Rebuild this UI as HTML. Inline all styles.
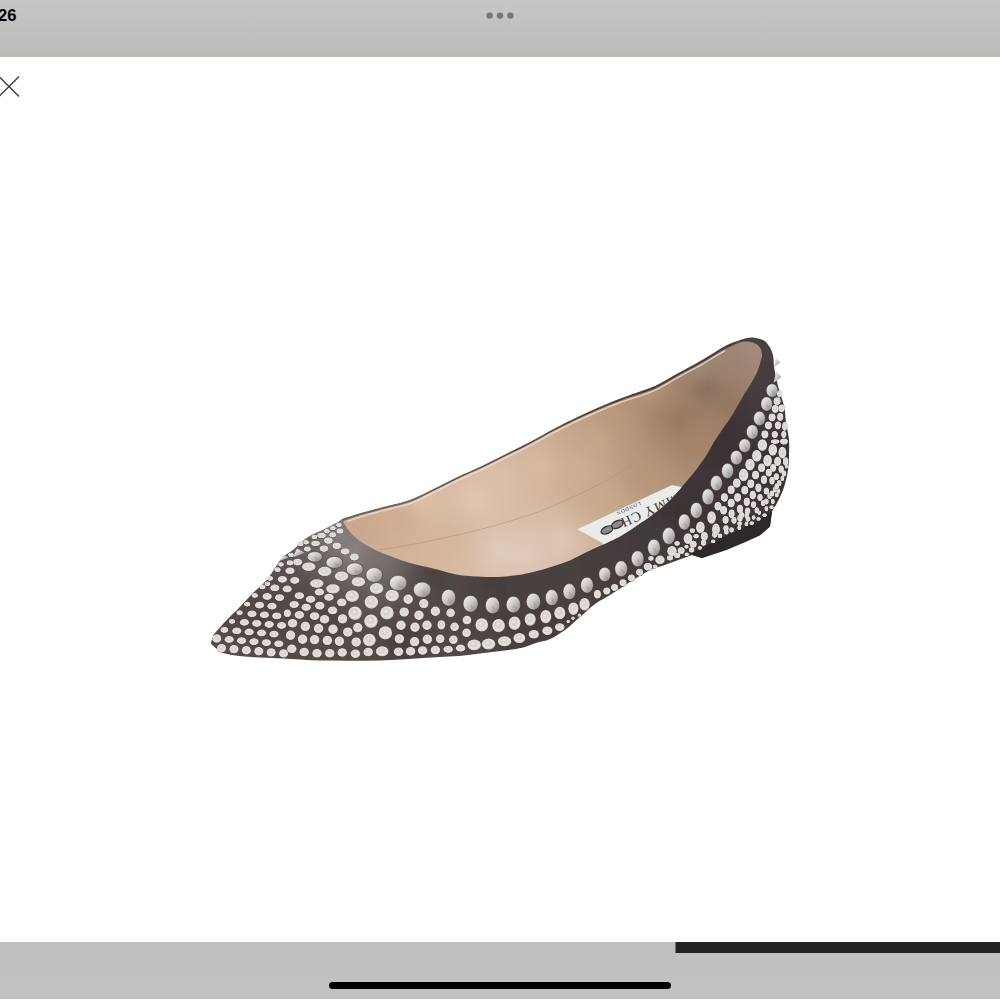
<!DOCTYPE html>
<html><head><meta charset="utf-8"><style>
html,body{margin:0;padding:0;width:1000px;height:1000px;overflow:hidden;background:#fff;}
.top{position:absolute;left:0;top:0;width:1000px;height:57px;background:linear-gradient(#c6c6c4,#bbbcb8);}
.time{position:absolute;left:-2px;top:6.3px;font:bold 16.5px "Liberation Sans",sans-serif;color:#000;}
.bot{position:absolute;left:0;top:941.5px;width:1000px;height:57.3px;background:linear-gradient(#bfc0bd,#c2c2c0);}
svg{position:absolute;left:0;top:0;}
</style></head><body>
<div class="top"></div>
<div class="time">26</div>
<div class="bot"></div>
<svg width="1000" height="1000" viewBox="0 0 1000 1000">
<defs>
<linearGradient id="glin" gradientUnits="userSpaceOnUse" x1="490" y1="458" x2="515" y2="520">
<stop offset="0" stop-color="#e8d4c0"/><stop offset="0.15" stop-color="#e2c7ad"/><stop offset="0.8" stop-color="#d8b99b"/><stop offset="1" stop-color="#dabea2"/>
</linearGradient>
<linearGradient id="gins" gradientUnits="userSpaceOnUse" x1="520" y1="515" x2="540" y2="572">
<stop offset="0" stop-color="#e3ccb5"/><stop offset="0.5" stop-color="#e9d6c2"/><stop offset="1" stop-color="#ead9c7"/>
</linearGradient>
<linearGradient id="gheel" gradientUnits="userSpaceOnUse" x1="650" y1="0" x2="765" y2="0">
<stop offset="0" stop-color="#c8b29c" stop-opacity="0"/><stop offset="0.2" stop-color="#c8b29c" stop-opacity="0.9"/><stop offset="0.5" stop-color="#bea893"/><stop offset="1" stop-color="#b39e8a"/>
</linearGradient>
<radialGradient id="gs" cx="0.5" cy="0.46" r="0.55" fx="0.42" fy="0.36">
<stop offset="0" stop-color="#f0efec"/><stop offset="0.35" stop-color="#d3d0cc"/><stop offset="0.7" stop-color="#e8e5e1"/><stop offset="0.88" stop-color="#cfcbc6"/><stop offset="0.97" stop-color="#85807b"/><stop offset="1" stop-color="#3e3836"/>
</radialGradient>
<linearGradient id="gc" x1="0.1" y1="0.1" x2="0.9" y2="0.9">
<stop offset="0" stop-color="#efefed"/><stop offset="0.45" stop-color="#d0cdc9"/><stop offset="1" stop-color="#94908b"/>
</linearGradient>
<clipPath id="clab"><polygon points="601.4,542.5 603.3,544.4 606.0,543.2 610.0,541.3 614.0,539.4 618.0,537.4 622.0,535.2 626.0,532.8 630.0,530.2 634.0,527.5 638.0,524.8 642.0,522.1 646.0,519.4 650.0,516.6 654.0,513.6 658.0,510.5 662.0,507.2 666.0,503.8 670.0,500.0 674.1,495.7 678.4,490.9 681.8,487.0 672.0,485.0 577.4,529.2 601.4,542.5"/></clipPath>
<clipPath id="couter"><polygon points="342.0,519.0 345.5,517.9 350.5,516.3 356.2,514.5 362.0,512.8 367.7,511.2 373.8,509.6 379.9,508.0 386.0,506.4 392.0,504.9 398.0,503.5 404.0,501.9 410.0,500.0 416.0,497.6 422.0,494.8 428.0,491.8 434.0,488.8 440.0,485.8 446.0,482.8 452.0,479.7 458.0,476.8 464.0,474.0 470.0,471.4 476.0,468.8 482.0,466.0 488.0,463.1 494.0,460.1 500.0,457.0 506.0,454.0 512.0,451.0 518.0,448.1 524.0,445.1 530.0,442.0 536.0,438.8 542.0,435.4 548.0,432.0 554.0,428.8 560.0,425.7 566.0,422.6 572.0,419.7 578.0,416.8 584.0,414.0 590.0,411.2 596.0,408.6 602.0,406.0 607.9,403.5 613.8,401.1 619.7,398.8 626.0,396.4 632.8,394.0 640.0,391.6 647.2,389.1 654.0,386.4 660.3,383.3 666.2,380.0 672.1,376.6 678.0,373.2 684.0,369.9 690.0,366.7 696.0,363.4 702.0,360.0 708.3,356.3 714.8,352.3 720.8,348.6 726.0,345.6 729.8,343.7 732.8,342.5 735.3,341.7 738.0,340.8 741.0,339.7 743.9,338.7 746.9,337.9 750.0,337.5 753.3,337.6 756.9,338.2 760.2,339.0 763.0,340.0 765.1,341.3 766.6,342.8 767.9,344.4 769.0,346.0 770.0,347.5 770.8,349.0 771.4,350.5 772.0,352.0 772.5,353.6 772.9,355.4 773.3,356.9 773.5,358.0 774.0,367.0 774.7,370.4 775.6,375.2 776.8,380.7 778.0,386.0 779.5,391.0 781.1,396.2 782.7,401.3 784.0,406.0 784.8,410.2 785.2,414.1 785.5,418.0 786.0,422.0 786.8,426.4 787.6,431.0 788.4,435.6 789.0,440.0 789.2,444.2 789.2,448.2 789.1,452.2 789.0,456.0 788.8,459.7 788.6,463.4 788.3,466.8 788.0,470.0 787.6,472.8 787.1,475.2 786.6,477.6 786.0,480.0 785.3,482.6 784.6,485.2 783.8,487.7 783.0,490.0 782.3,491.9 781.6,493.6 780.8,495.2 780.0,497.0 779.1,499.0 778.1,501.0 777.0,503.0 776.0,505.0 775.0,506.6 773.9,508.1 772.9,509.8 772.0,512.0 771.3,515.4 770.8,519.6 770.3,523.6 770.0,526.4 760.0,535.2 744.0,542.4 726.0,550.0 702.0,558.0 692.0,555.0 662.0,566.0 660.0,566.5 657.2,567.2 653.8,568.3 650.0,570.0 645.6,572.4 640.5,575.4 635.2,578.7 630.0,582.0 624.9,585.3 619.7,588.7 614.6,592.0 610.0,595.0 605.9,597.4 602.2,599.5 598.6,601.6 595.0,604.0 591.2,607.0 587.5,610.2 583.8,613.7 580.0,617.0 576.2,620.3 572.5,623.8 568.8,627.0 565.0,630.0 561.2,632.6 557.4,635.1 553.7,637.2 550.0,639.0 546.4,640.4 542.8,641.3 539.3,642.1 536.0,643.0 533.1,644.0 530.4,645.1 527.8,646.1 525.0,647.0 522.1,647.7 519.3,648.3 516.1,648.9 512.0,649.5 506.8,650.2 500.7,650.9 494.3,651.7 488.0,652.4 482.0,653.2 476.0,654.0 470.0,654.7 464.0,655.4 458.8,655.9 454.2,656.2 448.5,656.5 440.0,657.0 427.5,657.8 412.2,658.8 395.8,659.7 380.0,660.4 364.2,660.7 347.8,660.7 332.5,660.6 320.0,660.4 311.5,660.2 305.8,659.9 301.2,659.5 296.0,659.2 290.0,658.9 284.0,658.6 278.0,658.3 272.0,658.0 266.0,657.8 260.0,657.5 254.0,657.3 248.0,656.8 241.7,656.2 235.3,655.5 229.2,654.6 224.0,653.2 219.6,651.0 215.9,648.2 212.9,645.5 210.8,643.6 213.4,634.8 215.6,632.3 218.8,628.7 222.5,624.6 226.0,620.8 229.4,617.3 232.9,613.8 236.5,610.4 240.0,606.8 243.5,603.1 247.1,599.2 250.6,595.5 254.0,592.0 257.2,588.9 260.4,586.2 263.3,583.5 266.0,580.8 268.3,578.0 270.2,575.2 272.1,572.4 274.0,569.6 275.9,566.7 277.8,563.7 279.7,560.7 282.0,558.0 284.7,555.6 287.6,553.5 290.8,551.4 294.0,549.0 297.3,546.1 300.8,542.9 304.3,539.8 308.0,537.0 311.9,534.7 316.0,532.8 320.1,531.0 324.0,529.2 328.0,527.2 332.0,525.1 335.5,523.3 338.0,522.0"/></clipPath>
<clipPath id="clin"><polygon points="344.0,520.8 347.1,519.7 351.5,518.1 356.7,516.2 362.0,514.5 367.6,512.9 373.6,511.2 379.9,509.6 386.0,508.0 392.0,506.5 398.0,505.1 404.0,503.6 410.0,501.7 416.0,499.3 422.0,496.5 428.0,493.5 434.0,490.5 440.0,487.5 446.0,484.5 452.0,481.4 458.0,478.5 464.0,475.7 470.0,473.1 476.0,470.4 482.0,467.7 488.0,464.8 494.0,461.8 500.0,458.8 506.0,455.8 512.0,452.8 518.0,449.9 524.0,446.9 530.0,443.8 536.0,440.6 542.0,437.2 548.0,433.8 554.0,430.6 560.0,427.5 566.0,424.5 572.0,421.6 578.0,418.7 584.0,415.9 590.0,413.2 596.0,410.6 602.0,408.0 607.9,405.6 613.8,403.2 619.7,400.9 626.0,398.6 632.8,396.3 640.0,394.0 647.2,391.6 654.0,388.9 660.3,385.8 666.2,382.4 672.1,378.9 678.0,375.5 684.1,372.2 690.2,368.9 696.3,365.7 702.0,362.5 707.6,359.2 713.0,355.9 717.9,352.9 722.0,350.5 725.0,348.9 727.2,347.9 728.8,347.3 730.0,346.8 732.2,345.8 735.3,344.2 738.8,342.8 742.0,341.8 744.9,341.5 747.8,341.6 750.6,342.0 753.0,342.6 755.1,343.5 757.1,344.6 758.7,346.0 760.0,347.5 760.9,349.3 761.5,351.2 761.8,353.2 762.0,355.0 762.0,356.3 761.8,357.3 761.5,358.5 761.0,360.0 760.4,362.1 759.8,364.7 758.9,367.4 758.0,370.0 757.0,372.4 755.8,374.8 754.5,377.3 753.0,380.0 751.2,383.1 749.1,386.4 747.0,389.8 745.0,393.0 743.2,396.1 741.4,399.1 739.7,402.0 738.0,405.0 736.3,408.0 734.6,410.9 732.9,413.9 731.0,417.0 728.9,420.2 726.6,423.5 724.2,426.8 722.0,430.0 719.9,433.0 717.9,435.9 716.0,438.9 714.0,442.0 712.0,445.4 710.1,448.9 708.1,452.5 706.0,456.0 703.6,459.5 701.1,463.1 698.5,466.6 696.0,470.0 693.6,473.0 691.4,475.8 688.9,478.6 686.0,482.0 682.4,486.2 678.4,490.9 674.1,495.7 670.0,500.0 666.0,503.8 662.0,507.2 658.0,510.5 654.0,513.6 650.0,516.6 646.0,519.4 642.0,522.1 638.0,524.8 634.0,527.5 630.0,530.2 626.0,532.8 622.0,535.2 618.0,537.4 614.0,539.4 610.0,541.3 606.0,543.2 602.1,545.0 598.2,546.7 594.3,548.4 590.0,550.4 585.2,552.8 580.0,555.5 574.8,558.1 570.0,560.4 565.7,562.1 561.8,563.5 557.9,564.8 554.0,566.0 550.0,567.3 546.0,568.5 542.0,569.7 538.0,570.8 534.0,571.8 530.0,572.8 526.0,573.6 522.0,574.4 518.0,575.0 514.0,575.6 510.0,576.0 506.0,576.4 502.0,576.7 498.0,576.9 494.0,577.0 490.0,577.0 486.0,577.0 482.0,576.8 478.0,576.6 474.0,576.4 470.0,576.1 466.0,575.8 462.0,575.4 458.0,574.8 454.0,574.0 450.0,572.9 446.0,571.9 442.0,570.8 438.0,569.8 434.0,568.8 430.0,567.8 426.0,566.8 422.0,565.9 418.0,565.0 414.0,564.1 410.0,563.0 406.0,561.8 402.0,560.5 398.0,559.1 394.0,557.6 390.0,556.1 386.0,554.6 382.0,553.0 378.0,551.2 373.9,549.2 369.8,547.1 365.7,544.8 362.0,542.4 358.6,540.0 355.5,537.4 352.6,534.8 350.0,532.0 347.5,528.8 345.2,525.4 343.3,522.2"/></clipPath>
<filter id="blr" x="-5%" y="-5%" width="110%" height="110%"><feGaussianBlur stdDeviation="6"/></filter>
<filter id="blr2" x="-5%" y="-5%" width="110%" height="110%"><feGaussianBlur stdDeviation="5"/></filter>
</defs>
<circle cx="489.6" cy="15.6" r="3.2" fill="#777"/>
<circle cx="500" cy="15.6" r="3.2" fill="#777"/>
<circle cx="510.4" cy="15.6" r="3.2" fill="#777"/>
<path d="M-1 76.5 L19 96.5 M19 76.5 L-1 96.5" stroke="#404040" stroke-width="1.5" fill="none"/>
<rect x="675.5" y="942" width="325" height="11" fill="#20221d"/>
<rect x="329" y="982" width="342" height="7" rx="3.5" fill="#000"/>
<g clip-path="url(#couter)"><g filter="url(#blr)"><rect x="195" y="325" width="13" height="13" fill="#5c5252"/><rect x="207" y="325" width="13" height="13" fill="#5c5252"/><rect x="219" y="325" width="13" height="13" fill="#5d5352"/><rect x="231" y="325" width="13" height="13" fill="#5d5352"/><rect x="243" y="325" width="13" height="13" fill="#5d5353"/><rect x="255" y="325" width="13" height="13" fill="#5d5353"/><rect x="267" y="325" width="13" height="13" fill="#5d5353"/><rect x="279" y="325" width="13" height="13" fill="#5d5353"/><rect x="291" y="325" width="13" height="13" fill="#5d5353"/><rect x="303" y="325" width="13" height="13" fill="#5d5353"/><rect x="315" y="325" width="13" height="13" fill="#5d5353"/><rect x="327" y="325" width="13" height="13" fill="#5d5353"/><rect x="339" y="325" width="13" height="13" fill="#5d5352"/><rect x="351" y="325" width="13" height="13" fill="#5c5252"/><rect x="363" y="325" width="13" height="13" fill="#5c5252"/><rect x="375" y="325" width="13" height="13" fill="#5b5151"/><rect x="387" y="325" width="13" height="13" fill="#5b5151"/><rect x="399" y="325" width="13" height="13" fill="#5a5050"/><rect x="411" y="325" width="13" height="13" fill="#59504f"/><rect x="423" y="325" width="13" height="13" fill="#594f4f"/><rect x="435" y="325" width="13" height="13" fill="#584e4e"/><rect x="447" y="325" width="13" height="13" fill="#574d4d"/><rect x="459" y="325" width="13" height="13" fill="#564c4c"/><rect x="471" y="325" width="13" height="13" fill="#554c4c"/><rect x="483" y="325" width="13" height="13" fill="#544b4b"/><rect x="495" y="325" width="13" height="13" fill="#544a4a"/><rect x="507" y="325" width="13" height="13" fill="#534949"/><rect x="519" y="325" width="13" height="13" fill="#524848"/><rect x="531" y="325" width="13" height="13" fill="#514747"/><rect x="543" y="325" width="13" height="13" fill="#504646"/><rect x="555" y="325" width="13" height="13" fill="#4f4546"/><rect x="567" y="325" width="13" height="13" fill="#4e4445"/><rect x="579" y="325" width="13" height="13" fill="#4d4344"/><rect x="591" y="325" width="13" height="13" fill="#4c4343"/><rect x="603" y="325" width="13" height="13" fill="#4b4243"/><rect x="615" y="325" width="13" height="13" fill="#4a4142"/><rect x="627" y="325" width="13" height="13" fill="#4a4041"/><rect x="639" y="325" width="13" height="13" fill="#494041"/><rect x="651" y="325" width="13" height="13" fill="#483f40"/><rect x="663" y="325" width="13" height="13" fill="#483f40"/><rect x="675" y="325" width="13" height="13" fill="#483f40"/><rect x="687" y="325" width="13" height="13" fill="#483f40"/><rect x="699" y="325" width="13" height="13" fill="#483f40"/><rect x="711" y="325" width="13" height="13" fill="#484041"/><rect x="723" y="325" width="13" height="13" fill="#494041"/><rect x="735" y="325" width="13" height="13" fill="#494141"/><rect x="747" y="325" width="13" height="13" fill="#494142"/><rect x="759" y="325" width="13" height="13" fill="#494141"/><rect x="771" y="325" width="13" height="13" fill="#484041"/><rect x="783" y="325" width="13" height="13" fill="#483f40"/><rect x="795" y="325" width="13" height="13" fill="#473f40"/><rect x="195" y="337" width="13" height="13" fill="#5d5252"/><rect x="207" y="337" width="13" height="13" fill="#5d5352"/><rect x="219" y="337" width="13" height="13" fill="#5d5353"/><rect x="231" y="337" width="13" height="13" fill="#5d5353"/><rect x="243" y="337" width="13" height="13" fill="#5d5353"/><rect x="255" y="337" width="13" height="13" fill="#5e5353"/><rect x="267" y="337" width="13" height="13" fill="#5e5453"/><rect x="279" y="337" width="13" height="13" fill="#5e5453"/><rect x="291" y="337" width="13" height="13" fill="#5e5453"/><rect x="303" y="337" width="13" height="13" fill="#5e5453"/><rect x="315" y="337" width="13" height="13" fill="#5e5453"/><rect x="327" y="337" width="13" height="13" fill="#5d5353"/><rect x="339" y="337" width="13" height="13" fill="#5d5353"/><rect x="351" y="337" width="13" height="13" fill="#5d5353"/><rect x="363" y="337" width="13" height="13" fill="#5c5252"/><rect x="375" y="337" width="13" height="13" fill="#5c5252"/><rect x="387" y="337" width="13" height="13" fill="#5b5151"/><rect x="399" y="337" width="13" height="13" fill="#5b5151"/><rect x="411" y="337" width="13" height="13" fill="#5a5050"/><rect x="423" y="337" width="13" height="13" fill="#594f4f"/><rect x="435" y="337" width="13" height="13" fill="#584f4e"/><rect x="447" y="337" width="13" height="13" fill="#584e4e"/><rect x="459" y="337" width="13" height="13" fill="#574d4d"/><rect x="471" y="337" width="13" height="13" fill="#564c4c"/><rect x="483" y="337" width="13" height="13" fill="#554b4b"/><rect x="495" y="337" width="13" height="13" fill="#544a4a"/><rect x="507" y="337" width="13" height="13" fill="#534949"/><rect x="519" y="337" width="13" height="13" fill="#524848"/><rect x="531" y="337" width="13" height="13" fill="#514747"/><rect x="543" y="337" width="13" height="13" fill="#504646"/><rect x="555" y="337" width="13" height="13" fill="#4f4546"/><rect x="567" y="337" width="13" height="13" fill="#4e4445"/><rect x="579" y="337" width="13" height="13" fill="#4d4344"/><rect x="591" y="337" width="13" height="13" fill="#4c4243"/><rect x="603" y="337" width="13" height="13" fill="#4b4142"/><rect x="615" y="337" width="13" height="13" fill="#4a4142"/><rect x="627" y="337" width="13" height="13" fill="#494041"/><rect x="639" y="337" width="13" height="13" fill="#493f40"/><rect x="651" y="337" width="13" height="13" fill="#483f40"/><rect x="663" y="337" width="13" height="13" fill="#473e40"/><rect x="675" y="337" width="13" height="13" fill="#473e40"/><rect x="687" y="337" width="13" height="13" fill="#473e40"/><rect x="699" y="337" width="13" height="13" fill="#473f40"/><rect x="711" y="337" width="13" height="13" fill="#483f40"/><rect x="723" y="337" width="13" height="13" fill="#494041"/><rect x="735" y="337" width="13" height="13" fill="#4a4242"/><rect x="747" y="337" width="13" height="13" fill="#4a4242"/><rect x="759" y="337" width="13" height="13" fill="#494141"/><rect x="771" y="337" width="13" height="13" fill="#484041"/><rect x="783" y="337" width="13" height="13" fill="#473f40"/><rect x="795" y="337" width="13" height="13" fill="#473e40"/><rect x="195" y="349" width="13" height="13" fill="#5d5352"/><rect x="207" y="349" width="13" height="13" fill="#5d5353"/><rect x="219" y="349" width="13" height="13" fill="#5d5353"/><rect x="231" y="349" width="13" height="13" fill="#5e5453"/><rect x="243" y="349" width="13" height="13" fill="#5e5453"/><rect x="255" y="349" width="13" height="13" fill="#5e5454"/><rect x="267" y="349" width="13" height="13" fill="#5e5454"/><rect x="279" y="349" width="13" height="13" fill="#5e5454"/><rect x="291" y="349" width="13" height="13" fill="#5e5454"/><rect x="303" y="349" width="13" height="13" fill="#5e5454"/><rect x="315" y="349" width="13" height="13" fill="#5e5454"/><rect x="327" y="349" width="13" height="13" fill="#5e5454"/><rect x="339" y="349" width="13" height="13" fill="#5e5454"/><rect x="351" y="349" width="13" height="13" fill="#5e5453"/><rect x="363" y="349" width="13" height="13" fill="#5d5353"/><rect x="375" y="349" width="13" height="13" fill="#5d5352"/><rect x="387" y="349" width="13" height="13" fill="#5c5252"/><rect x="399" y="349" width="13" height="13" fill="#5b5151"/><rect x="411" y="349" width="13" height="13" fill="#5b5151"/><rect x="423" y="349" width="13" height="13" fill="#5a5050"/><rect x="435" y="349" width="13" height="13" fill="#594f4f"/><rect x="447" y="349" width="13" height="13" fill="#584e4e"/><rect x="459" y="349" width="13" height="13" fill="#574d4d"/><rect x="471" y="349" width="13" height="13" fill="#564c4c"/><rect x="483" y="349" width="13" height="13" fill="#554b4b"/><rect x="495" y="349" width="13" height="13" fill="#544a4a"/><rect x="507" y="349" width="13" height="13" fill="#534949"/><rect x="519" y="349" width="13" height="13" fill="#524848"/><rect x="531" y="349" width="13" height="13" fill="#514747"/><rect x="543" y="349" width="13" height="13" fill="#504646"/><rect x="555" y="349" width="13" height="13" fill="#4f4545"/><rect x="567" y="349" width="13" height="13" fill="#4d4444"/><rect x="579" y="349" width="13" height="13" fill="#4c4344"/><rect x="591" y="349" width="13" height="13" fill="#4b4243"/><rect x="603" y="349" width="13" height="13" fill="#4b4142"/><rect x="615" y="349" width="13" height="13" fill="#4a4041"/><rect x="627" y="349" width="13" height="13" fill="#494041"/><rect x="639" y="349" width="13" height="13" fill="#483f40"/><rect x="651" y="349" width="13" height="13" fill="#473e3f"/><rect x="663" y="349" width="13" height="13" fill="#473e3f"/><rect x="675" y="349" width="13" height="13" fill="#473e3f"/><rect x="687" y="349" width="13" height="13" fill="#473e3f"/><rect x="699" y="349" width="13" height="13" fill="#473e3f"/><rect x="711" y="349" width="13" height="13" fill="#473f40"/><rect x="723" y="349" width="13" height="13" fill="#484041"/><rect x="735" y="349" width="13" height="13" fill="#494141"/><rect x="747" y="349" width="13" height="13" fill="#494141"/><rect x="759" y="349" width="13" height="13" fill="#484041"/><rect x="771" y="349" width="13" height="13" fill="#473f40"/><rect x="783" y="349" width="13" height="13" fill="#473e40"/><rect x="795" y="349" width="13" height="13" fill="#463e3f"/><rect x="195" y="361" width="13" height="13" fill="#5d5353"/><rect x="207" y="361" width="13" height="13" fill="#5d5353"/><rect x="219" y="361" width="13" height="13" fill="#5e5453"/><rect x="231" y="361" width="13" height="13" fill="#5e5454"/><rect x="243" y="361" width="13" height="13" fill="#5e5454"/><rect x="255" y="361" width="13" height="13" fill="#5f5454"/><rect x="267" y="361" width="13" height="13" fill="#5f5554"/><rect x="279" y="361" width="13" height="13" fill="#5f5555"/><rect x="291" y="361" width="13" height="13" fill="#5f5555"/><rect x="303" y="361" width="13" height="13" fill="#5f5555"/><rect x="315" y="361" width="13" height="13" fill="#5f5555"/><rect x="327" y="361" width="13" height="13" fill="#5f5555"/><rect x="339" y="361" width="13" height="13" fill="#5f5554"/><rect x="351" y="361" width="13" height="13" fill="#5e5454"/><rect x="363" y="361" width="13" height="13" fill="#5e5454"/><rect x="375" y="361" width="13" height="13" fill="#5d5353"/><rect x="387" y="361" width="13" height="13" fill="#5d5353"/><rect x="399" y="361" width="13" height="13" fill="#5c5252"/><rect x="411" y="361" width="13" height="13" fill="#5b5151"/><rect x="423" y="361" width="13" height="13" fill="#5a5050"/><rect x="435" y="361" width="13" height="13" fill="#594f4f"/><rect x="447" y="361" width="13" height="13" fill="#584e4e"/><rect x="459" y="361" width="13" height="13" fill="#574d4d"/><rect x="471" y="361" width="13" height="13" fill="#564c4c"/><rect x="483" y="361" width="13" height="13" fill="#554b4b"/><rect x="495" y="361" width="13" height="13" fill="#544a4a"/><rect x="507" y="361" width="13" height="13" fill="#534949"/><rect x="519" y="361" width="13" height="13" fill="#524848"/><rect x="531" y="361" width="13" height="13" fill="#514747"/><rect x="543" y="361" width="13" height="13" fill="#4f4646"/><rect x="555" y="361" width="13" height="13" fill="#4e4545"/><rect x="567" y="361" width="13" height="13" fill="#4d4444"/><rect x="579" y="361" width="13" height="13" fill="#4c4343"/><rect x="591" y="361" width="13" height="13" fill="#4b4242"/><rect x="603" y="361" width="13" height="13" fill="#4a4142"/><rect x="615" y="361" width="13" height="13" fill="#494041"/><rect x="627" y="361" width="13" height="13" fill="#483f40"/><rect x="639" y="361" width="13" height="13" fill="#483e3f"/><rect x="651" y="361" width="13" height="13" fill="#473e3f"/><rect x="663" y="361" width="13" height="13" fill="#463d3f"/><rect x="675" y="361" width="13" height="13" fill="#463d3e"/><rect x="687" y="361" width="13" height="13" fill="#463d3e"/><rect x="699" y="361" width="13" height="13" fill="#463d3f"/><rect x="711" y="361" width="13" height="13" fill="#463e3f"/><rect x="723" y="361" width="13" height="13" fill="#473e40"/><rect x="735" y="361" width="13" height="13" fill="#473f40"/><rect x="747" y="361" width="13" height="13" fill="#473e40"/><rect x="759" y="361" width="13" height="13" fill="#463e40"/><rect x="771" y="361" width="13" height="13" fill="#463e40"/><rect x="783" y="361" width="13" height="13" fill="#463d3f"/><rect x="795" y="361" width="13" height="13" fill="#463d3f"/><rect x="195" y="373" width="13" height="13" fill="#5d5353"/><rect x="207" y="373" width="13" height="13" fill="#5e5453"/><rect x="219" y="373" width="13" height="13" fill="#5e5454"/><rect x="231" y="373" width="13" height="13" fill="#5f5454"/><rect x="243" y="373" width="13" height="13" fill="#5f5554"/><rect x="255" y="373" width="13" height="13" fill="#5f5555"/><rect x="267" y="373" width="13" height="13" fill="#5f5555"/><rect x="279" y="373" width="13" height="13" fill="#605655"/><rect x="291" y="373" width="13" height="13" fill="#605655"/><rect x="303" y="373" width="13" height="13" fill="#605656"/><rect x="315" y="373" width="13" height="13" fill="#605656"/><rect x="327" y="373" width="13" height="13" fill="#605656"/><rect x="339" y="373" width="13" height="13" fill="#605655"/><rect x="351" y="373" width="13" height="13" fill="#5f5555"/><rect x="363" y="373" width="13" height="13" fill="#5f5555"/><rect x="375" y="373" width="13" height="13" fill="#5e5454"/><rect x="387" y="373" width="13" height="13" fill="#5e5453"/><rect x="399" y="373" width="13" height="13" fill="#5d5353"/><rect x="411" y="373" width="13" height="13" fill="#5c5252"/><rect x="423" y="373" width="13" height="13" fill="#5b5151"/><rect x="435" y="373" width="13" height="13" fill="#5a5050"/><rect x="447" y="373" width="13" height="13" fill="#594f4f"/><rect x="459" y="373" width="13" height="13" fill="#584e4e"/><rect x="471" y="373" width="13" height="13" fill="#564d4d"/><rect x="483" y="373" width="13" height="13" fill="#554c4c"/><rect x="495" y="373" width="13" height="13" fill="#544a4a"/><rect x="507" y="373" width="13" height="13" fill="#534949"/><rect x="519" y="373" width="13" height="13" fill="#524848"/><rect x="531" y="373" width="13" height="13" fill="#514747"/><rect x="543" y="373" width="13" height="13" fill="#4f4646"/><rect x="555" y="373" width="13" height="13" fill="#4e4545"/><rect x="567" y="373" width="13" height="13" fill="#4d4444"/><rect x="579" y="373" width="13" height="13" fill="#4c4343"/><rect x="591" y="373" width="13" height="13" fill="#4b4142"/><rect x="603" y="373" width="13" height="13" fill="#4a4041"/><rect x="615" y="373" width="13" height="13" fill="#493f40"/><rect x="627" y="373" width="13" height="13" fill="#483f40"/><rect x="639" y="373" width="13" height="13" fill="#473e3f"/><rect x="651" y="373" width="13" height="13" fill="#463d3e"/><rect x="663" y="373" width="13" height="13" fill="#463c3e"/><rect x="675" y="373" width="13" height="13" fill="#453c3d"/><rect x="687" y="373" width="13" height="13" fill="#453c3d"/><rect x="699" y="373" width="13" height="13" fill="#453c3e"/><rect x="711" y="373" width="13" height="13" fill="#453c3e"/><rect x="723" y="373" width="13" height="13" fill="#463d3f"/><rect x="735" y="373" width="13" height="13" fill="#463d3f"/><rect x="747" y="373" width="13" height="13" fill="#463d40"/><rect x="759" y="373" width="13" height="13" fill="#463d40"/><rect x="771" y="373" width="13" height="13" fill="#463d40"/><rect x="783" y="373" width="13" height="13" fill="#463d3f"/><rect x="795" y="373" width="13" height="13" fill="#453c3f"/><rect x="195" y="385" width="13" height="13" fill="#5e5453"/><rect x="207" y="385" width="13" height="13" fill="#5e5454"/><rect x="219" y="385" width="13" height="13" fill="#5f5454"/><rect x="231" y="385" width="13" height="13" fill="#5f5554"/><rect x="243" y="385" width="13" height="13" fill="#5f5555"/><rect x="255" y="385" width="13" height="13" fill="#605655"/><rect x="267" y="385" width="13" height="13" fill="#605656"/><rect x="279" y="385" width="13" height="13" fill="#605656"/><rect x="291" y="385" width="13" height="13" fill="#615756"/><rect x="303" y="385" width="13" height="13" fill="#615756"/><rect x="315" y="385" width="13" height="13" fill="#615757"/><rect x="327" y="385" width="13" height="13" fill="#615756"/><rect x="339" y="385" width="13" height="13" fill="#615756"/><rect x="351" y="385" width="13" height="13" fill="#605656"/><rect x="363" y="385" width="13" height="13" fill="#605656"/><rect x="375" y="385" width="13" height="13" fill="#5f5555"/><rect x="387" y="385" width="13" height="13" fill="#5e5454"/><rect x="399" y="385" width="13" height="13" fill="#5e5453"/><rect x="411" y="385" width="13" height="13" fill="#5d5352"/><rect x="423" y="385" width="13" height="13" fill="#5b5251"/><rect x="435" y="385" width="13" height="13" fill="#5a5150"/><rect x="447" y="385" width="13" height="13" fill="#594f4f"/><rect x="459" y="385" width="13" height="13" fill="#584e4e"/><rect x="471" y="385" width="13" height="13" fill="#574d4d"/><rect x="483" y="385" width="13" height="13" fill="#564c4c"/><rect x="495" y="385" width="13" height="13" fill="#544b4b"/><rect x="507" y="385" width="13" height="13" fill="#534949"/><rect x="519" y="385" width="13" height="13" fill="#524848"/><rect x="531" y="385" width="13" height="13" fill="#514747"/><rect x="543" y="385" width="13" height="13" fill="#4f4646"/><rect x="555" y="385" width="13" height="13" fill="#4e4545"/><rect x="567" y="385" width="13" height="13" fill="#4d4344"/><rect x="579" y="385" width="13" height="13" fill="#4c4243"/><rect x="591" y="385" width="13" height="13" fill="#4b4142"/><rect x="603" y="385" width="13" height="13" fill="#4a4041"/><rect x="615" y="385" width="13" height="13" fill="#483f40"/><rect x="627" y="385" width="13" height="13" fill="#473e3f"/><rect x="639" y="385" width="13" height="13" fill="#463d3e"/><rect x="651" y="385" width="13" height="13" fill="#463c3e"/><rect x="663" y="385" width="13" height="13" fill="#453b3d"/><rect x="675" y="385" width="13" height="13" fill="#443b3d"/><rect x="687" y="385" width="13" height="13" fill="#433a3c"/><rect x="699" y="385" width="13" height="13" fill="#433a3c"/><rect x="711" y="385" width="13" height="13" fill="#433a3c"/><rect x="723" y="385" width="13" height="13" fill="#443b3d"/><rect x="735" y="385" width="13" height="13" fill="#453c3e"/><rect x="747" y="385" width="13" height="13" fill="#453c3f"/><rect x="759" y="385" width="13" height="13" fill="#463d3f"/><rect x="771" y="385" width="13" height="13" fill="#453c3f"/><rect x="783" y="385" width="13" height="13" fill="#453c3e"/><rect x="795" y="385" width="13" height="13" fill="#453c3e"/><rect x="195" y="397" width="13" height="13" fill="#5e5453"/><rect x="207" y="397" width="13" height="13" fill="#5e5454"/><rect x="219" y="397" width="13" height="13" fill="#5f5554"/><rect x="231" y="397" width="13" height="13" fill="#5f5555"/><rect x="243" y="397" width="13" height="13" fill="#605655"/><rect x="255" y="397" width="13" height="13" fill="#605656"/><rect x="267" y="397" width="13" height="13" fill="#615756"/><rect x="279" y="397" width="13" height="13" fill="#615757"/><rect x="291" y="397" width="13" height="13" fill="#625757"/><rect x="303" y="397" width="13" height="13" fill="#625857"/><rect x="315" y="397" width="13" height="13" fill="#625858"/><rect x="327" y="397" width="13" height="13" fill="#625858"/><rect x="339" y="397" width="13" height="13" fill="#625857"/><rect x="351" y="397" width="13" height="13" fill="#615757"/><rect x="363" y="397" width="13" height="13" fill="#615757"/><rect x="375" y="397" width="13" height="13" fill="#605656"/><rect x="387" y="397" width="13" height="13" fill="#5f5555"/><rect x="399" y="397" width="13" height="13" fill="#5e5454"/><rect x="411" y="397" width="13" height="13" fill="#5d5353"/><rect x="423" y="397" width="13" height="13" fill="#5c5252"/><rect x="435" y="397" width="13" height="13" fill="#5b5151"/><rect x="447" y="397" width="13" height="13" fill="#5a5050"/><rect x="459" y="397" width="13" height="13" fill="#584f4e"/><rect x="471" y="397" width="13" height="13" fill="#574d4d"/><rect x="483" y="397" width="13" height="13" fill="#564c4c"/><rect x="495" y="397" width="13" height="13" fill="#544b4b"/><rect x="507" y="397" width="13" height="13" fill="#534949"/><rect x="519" y="397" width="13" height="13" fill="#524848"/><rect x="531" y="397" width="13" height="13" fill="#514747"/><rect x="543" y="397" width="13" height="13" fill="#4f4646"/><rect x="555" y="397" width="13" height="13" fill="#4e4445"/><rect x="567" y="397" width="13" height="13" fill="#4d4344"/><rect x="579" y="397" width="13" height="13" fill="#4c4243"/><rect x="591" y="397" width="13" height="13" fill="#4a4142"/><rect x="603" y="397" width="13" height="13" fill="#494041"/><rect x="615" y="397" width="13" height="13" fill="#483f40"/><rect x="627" y="397" width="13" height="13" fill="#473e3f"/><rect x="639" y="397" width="13" height="13" fill="#463d3e"/><rect x="651" y="397" width="13" height="13" fill="#453c3d"/><rect x="663" y="397" width="13" height="13" fill="#443b3c"/><rect x="675" y="397" width="13" height="13" fill="#433a3b"/><rect x="687" y="397" width="13" height="13" fill="#42393b"/><rect x="699" y="397" width="13" height="13" fill="#41383a"/><rect x="711" y="397" width="13" height="13" fill="#41383a"/><rect x="723" y="397" width="13" height="13" fill="#42383b"/><rect x="735" y="397" width="13" height="13" fill="#43393c"/><rect x="747" y="397" width="13" height="13" fill="#443b3d"/><rect x="759" y="397" width="13" height="13" fill="#443b3d"/><rect x="771" y="397" width="13" height="13" fill="#443b3d"/><rect x="783" y="397" width="13" height="13" fill="#443b3d"/><rect x="795" y="397" width="13" height="13" fill="#433b3d"/><rect x="195" y="409" width="13" height="13" fill="#5e5453"/><rect x="207" y="409" width="13" height="13" fill="#5f5454"/><rect x="219" y="409" width="13" height="13" fill="#5f5555"/><rect x="231" y="409" width="13" height="13" fill="#605655"/><rect x="243" y="409" width="13" height="13" fill="#605656"/><rect x="255" y="409" width="13" height="13" fill="#615756"/><rect x="267" y="409" width="13" height="13" fill="#625757"/><rect x="279" y="409" width="13" height="13" fill="#625858"/><rect x="291" y="409" width="13" height="13" fill="#635858"/><rect x="303" y="409" width="13" height="13" fill="#635958"/><rect x="315" y="409" width="13" height="13" fill="#635959"/><rect x="327" y="409" width="13" height="13" fill="#635959"/><rect x="339" y="409" width="13" height="13" fill="#635959"/><rect x="351" y="409" width="13" height="13" fill="#635958"/><rect x="363" y="409" width="13" height="13" fill="#625858"/><rect x="375" y="409" width="13" height="13" fill="#615757"/><rect x="387" y="409" width="13" height="13" fill="#605656"/><rect x="399" y="409" width="13" height="13" fill="#5f5555"/><rect x="411" y="409" width="13" height="13" fill="#5e5454"/><rect x="423" y="409" width="13" height="13" fill="#5d5353"/><rect x="435" y="409" width="13" height="13" fill="#5c5251"/><rect x="447" y="409" width="13" height="13" fill="#5a5050"/><rect x="459" y="409" width="13" height="13" fill="#594f4f"/><rect x="471" y="409" width="13" height="13" fill="#574e4d"/><rect x="483" y="409" width="13" height="13" fill="#564c4c"/><rect x="495" y="409" width="13" height="13" fill="#554b4b"/><rect x="507" y="409" width="13" height="13" fill="#534949"/><rect x="519" y="409" width="13" height="13" fill="#524848"/><rect x="531" y="409" width="13" height="13" fill="#504747"/><rect x="543" y="409" width="13" height="13" fill="#4f4546"/><rect x="555" y="409" width="13" height="13" fill="#4e4445"/><rect x="567" y="409" width="13" height="13" fill="#4d4343"/><rect x="579" y="409" width="13" height="13" fill="#4b4242"/><rect x="591" y="409" width="13" height="13" fill="#4a4141"/><rect x="603" y="409" width="13" height="13" fill="#493f40"/><rect x="615" y="409" width="13" height="13" fill="#483e3f"/><rect x="627" y="409" width="13" height="13" fill="#473d3e"/><rect x="639" y="409" width="13" height="13" fill="#453c3d"/><rect x="651" y="409" width="13" height="13" fill="#443b3c"/><rect x="663" y="409" width="13" height="13" fill="#433a3b"/><rect x="675" y="409" width="13" height="13" fill="#42383a"/><rect x="687" y="409" width="13" height="13" fill="#403739"/><rect x="699" y="409" width="13" height="13" fill="#3f3638"/><rect x="711" y="409" width="13" height="13" fill="#3e3538"/><rect x="723" y="409" width="13" height="13" fill="#3e3538"/><rect x="735" y="409" width="13" height="13" fill="#403639"/><rect x="747" y="409" width="13" height="13" fill="#41383a"/><rect x="759" y="409" width="13" height="13" fill="#41393b"/><rect x="771" y="409" width="13" height="13" fill="#42393b"/><rect x="783" y="409" width="13" height="13" fill="#42393b"/><rect x="795" y="409" width="13" height="13" fill="#42393b"/><rect x="195" y="421" width="13" height="13" fill="#5e5454"/><rect x="207" y="421" width="13" height="13" fill="#5f5554"/><rect x="219" y="421" width="13" height="13" fill="#5f5555"/><rect x="231" y="421" width="13" height="13" fill="#605656"/><rect x="243" y="421" width="13" height="13" fill="#615756"/><rect x="255" y="421" width="13" height="13" fill="#625757"/><rect x="267" y="421" width="13" height="13" fill="#625858"/><rect x="279" y="421" width="13" height="13" fill="#635958"/><rect x="291" y="421" width="13" height="13" fill="#645959"/><rect x="303" y="421" width="13" height="13" fill="#645a5a"/><rect x="315" y="421" width="13" height="13" fill="#645a5a"/><rect x="327" y="421" width="13" height="13" fill="#655a5a"/><rect x="339" y="421" width="13" height="13" fill="#645a5a"/><rect x="351" y="421" width="13" height="13" fill="#645a5a"/><rect x="363" y="421" width="13" height="13" fill="#635959"/><rect x="375" y="421" width="13" height="13" fill="#635958"/><rect x="387" y="421" width="13" height="13" fill="#625857"/><rect x="399" y="421" width="13" height="13" fill="#605656"/><rect x="411" y="421" width="13" height="13" fill="#5f5555"/><rect x="423" y="421" width="13" height="13" fill="#5e5453"/><rect x="435" y="421" width="13" height="13" fill="#5c5252"/><rect x="447" y="421" width="13" height="13" fill="#5b5151"/><rect x="459" y="421" width="13" height="13" fill="#594f4f"/><rect x="471" y="421" width="13" height="13" fill="#584e4e"/><rect x="483" y="421" width="13" height="13" fill="#564c4c"/><rect x="495" y="421" width="13" height="13" fill="#554b4b"/><rect x="507" y="421" width="13" height="13" fill="#534949"/><rect x="519" y="421" width="13" height="13" fill="#524848"/><rect x="531" y="421" width="13" height="13" fill="#504747"/><rect x="543" y="421" width="13" height="13" fill="#4f4546"/><rect x="555" y="421" width="13" height="13" fill="#4e4444"/><rect x="567" y="421" width="13" height="13" fill="#4c4343"/><rect x="579" y="421" width="13" height="13" fill="#4b4242"/><rect x="591" y="421" width="13" height="13" fill="#4a4041"/><rect x="603" y="421" width="13" height="13" fill="#493f40"/><rect x="615" y="421" width="13" height="13" fill="#473e3f"/><rect x="627" y="421" width="13" height="13" fill="#463d3e"/><rect x="639" y="421" width="13" height="13" fill="#453c3d"/><rect x="651" y="421" width="13" height="13" fill="#443a3c"/><rect x="663" y="421" width="13" height="13" fill="#42393b"/><rect x="675" y="421" width="13" height="13" fill="#41373a"/><rect x="687" y="421" width="13" height="13" fill="#3f3638"/><rect x="699" y="421" width="13" height="13" fill="#3d3437"/><rect x="711" y="421" width="13" height="13" fill="#3c3235"/><rect x="723" y="421" width="13" height="13" fill="#3c3235"/><rect x="735" y="421" width="13" height="13" fill="#3d3437"/><rect x="747" y="421" width="13" height="13" fill="#3e3538"/><rect x="759" y="421" width="13" height="13" fill="#3f3638"/><rect x="771" y="421" width="13" height="13" fill="#3f3639"/><rect x="783" y="421" width="13" height="13" fill="#3f3739"/><rect x="795" y="421" width="13" height="13" fill="#403739"/><rect x="195" y="433" width="13" height="13" fill="#5e5454"/><rect x="207" y="433" width="13" height="13" fill="#5f5554"/><rect x="219" y="433" width="13" height="13" fill="#605555"/><rect x="231" y="433" width="13" height="13" fill="#605656"/><rect x="243" y="433" width="13" height="13" fill="#615757"/><rect x="255" y="433" width="13" height="13" fill="#625858"/><rect x="267" y="433" width="13" height="13" fill="#635958"/><rect x="279" y="433" width="13" height="13" fill="#645a59"/><rect x="291" y="433" width="13" height="13" fill="#655b5a"/><rect x="303" y="433" width="13" height="13" fill="#655b5b"/><rect x="315" y="433" width="13" height="13" fill="#665c5b"/><rect x="327" y="433" width="13" height="13" fill="#665c5c"/><rect x="339" y="433" width="13" height="13" fill="#665c5c"/><rect x="351" y="433" width="13" height="13" fill="#665c5b"/><rect x="363" y="433" width="13" height="13" fill="#655b5b"/><rect x="375" y="433" width="13" height="13" fill="#645a5a"/><rect x="387" y="433" width="13" height="13" fill="#635959"/><rect x="399" y="433" width="13" height="13" fill="#615857"/><rect x="411" y="433" width="13" height="13" fill="#605656"/><rect x="423" y="433" width="13" height="13" fill="#5e5454"/><rect x="435" y="433" width="13" height="13" fill="#5d5353"/><rect x="447" y="433" width="13" height="13" fill="#5b5151"/><rect x="459" y="433" width="13" height="13" fill="#59504f"/><rect x="471" y="433" width="13" height="13" fill="#584e4e"/><rect x="483" y="433" width="13" height="13" fill="#564c4c"/><rect x="495" y="433" width="13" height="13" fill="#554b4b"/><rect x="507" y="433" width="13" height="13" fill="#534949"/><rect x="519" y="433" width="13" height="13" fill="#524848"/><rect x="531" y="433" width="13" height="13" fill="#504747"/><rect x="543" y="433" width="13" height="13" fill="#4f4545"/><rect x="555" y="433" width="13" height="13" fill="#4d4444"/><rect x="567" y="433" width="13" height="13" fill="#4c4343"/><rect x="579" y="433" width="13" height="13" fill="#4b4142"/><rect x="591" y="433" width="13" height="13" fill="#494040"/><rect x="603" y="433" width="13" height="13" fill="#483f3f"/><rect x="615" y="433" width="13" height="13" fill="#473e3e"/><rect x="627" y="433" width="13" height="13" fill="#463c3d"/><rect x="639" y="433" width="13" height="13" fill="#443b3c"/><rect x="651" y="433" width="13" height="13" fill="#433a3b"/><rect x="663" y="433" width="13" height="13" fill="#42383a"/><rect x="675" y="433" width="13" height="13" fill="#403739"/><rect x="687" y="433" width="13" height="13" fill="#3e3538"/><rect x="699" y="433" width="13" height="13" fill="#3c3336"/><rect x="711" y="433" width="13" height="13" fill="#3a3034"/><rect x="723" y="433" width="13" height="13" fill="#3a3034"/><rect x="735" y="433" width="13" height="13" fill="#3c3236"/><rect x="747" y="433" width="13" height="13" fill="#3d3437"/><rect x="759" y="433" width="13" height="13" fill="#3d3436"/><rect x="771" y="433" width="13" height="13" fill="#3d3436"/><rect x="783" y="433" width="13" height="13" fill="#3d3537"/><rect x="795" y="433" width="13" height="13" fill="#3e3638"/><rect x="195" y="445" width="13" height="13" fill="#5e5454"/><rect x="207" y="445" width="13" height="13" fill="#5f5554"/><rect x="219" y="445" width="13" height="13" fill="#605655"/><rect x="231" y="445" width="13" height="13" fill="#615656"/><rect x="243" y="445" width="13" height="13" fill="#625757"/><rect x="255" y="445" width="13" height="13" fill="#635858"/><rect x="267" y="445" width="13" height="13" fill="#645a59"/><rect x="279" y="445" width="13" height="13" fill="#655b5a"/><rect x="291" y="445" width="13" height="13" fill="#665c5b"/><rect x="303" y="445" width="13" height="13" fill="#675d5c"/><rect x="315" y="445" width="13" height="13" fill="#685e5d"/><rect x="327" y="445" width="13" height="13" fill="#685e5e"/><rect x="339" y="445" width="13" height="13" fill="#685e5e"/><rect x="351" y="445" width="13" height="13" fill="#685e5d"/><rect x="363" y="445" width="13" height="13" fill="#675d5c"/><rect x="375" y="445" width="13" height="13" fill="#665c5b"/><rect x="387" y="445" width="13" height="13" fill="#645a5a"/><rect x="399" y="445" width="13" height="13" fill="#635958"/><rect x="411" y="445" width="13" height="13" fill="#615757"/><rect x="423" y="445" width="13" height="13" fill="#5f5555"/><rect x="435" y="445" width="13" height="13" fill="#5d5353"/><rect x="447" y="445" width="13" height="13" fill="#5b5251"/><rect x="459" y="445" width="13" height="13" fill="#5a5050"/><rect x="471" y="445" width="13" height="13" fill="#584e4e"/><rect x="483" y="445" width="13" height="13" fill="#564c4c"/><rect x="495" y="445" width="13" height="13" fill="#554b4b"/><rect x="507" y="445" width="13" height="13" fill="#534949"/><rect x="519" y="445" width="13" height="13" fill="#524848"/><rect x="531" y="445" width="13" height="13" fill="#504646"/><rect x="543" y="445" width="13" height="13" fill="#4f4545"/><rect x="555" y="445" width="13" height="13" fill="#4d4444"/><rect x="567" y="445" width="13" height="13" fill="#4c4243"/><rect x="579" y="445" width="13" height="13" fill="#4a4141"/><rect x="591" y="445" width="13" height="13" fill="#494040"/><rect x="603" y="445" width="13" height="13" fill="#483e3f"/><rect x="615" y="445" width="13" height="13" fill="#473d3e"/><rect x="627" y="445" width="13" height="13" fill="#453c3d"/><rect x="639" y="445" width="13" height="13" fill="#443b3c"/><rect x="651" y="445" width="13" height="13" fill="#43393b"/><rect x="663" y="445" width="13" height="13" fill="#41383a"/><rect x="675" y="445" width="13" height="13" fill="#403739"/><rect x="687" y="445" width="13" height="13" fill="#3f3537"/><rect x="699" y="445" width="13" height="13" fill="#3d3336"/><rect x="711" y="445" width="13" height="13" fill="#3b3135"/><rect x="723" y="445" width="13" height="13" fill="#3b3135"/><rect x="735" y="445" width="13" height="13" fill="#3c3336"/><rect x="747" y="445" width="13" height="13" fill="#3c3336"/><rect x="759" y="445" width="13" height="13" fill="#3b3335"/><rect x="771" y="445" width="13" height="13" fill="#3b3234"/><rect x="783" y="445" width="13" height="13" fill="#3c3335"/><rect x="795" y="445" width="13" height="13" fill="#3d3537"/><rect x="195" y="457" width="13" height="13" fill="#5e5454"/><rect x="207" y="457" width="13" height="13" fill="#5f5554"/><rect x="219" y="457" width="13" height="13" fill="#605655"/><rect x="231" y="457" width="13" height="13" fill="#615756"/><rect x="243" y="457" width="13" height="13" fill="#625857"/><rect x="255" y="457" width="13" height="13" fill="#635959"/><rect x="267" y="457" width="13" height="13" fill="#645a5a"/><rect x="279" y="457" width="13" height="13" fill="#665c5b"/><rect x="291" y="457" width="13" height="13" fill="#675d5d"/><rect x="303" y="457" width="13" height="13" fill="#695e5e"/><rect x="315" y="457" width="13" height="13" fill="#6a605f"/><rect x="327" y="457" width="13" height="13" fill="#6a6060"/><rect x="339" y="457" width="13" height="13" fill="#6a6060"/><rect x="351" y="457" width="13" height="13" fill="#6a605f"/><rect x="363" y="457" width="13" height="13" fill="#695f5f"/><rect x="375" y="457" width="13" height="13" fill="#675e5d"/><rect x="387" y="457" width="13" height="13" fill="#665c5b"/><rect x="399" y="457" width="13" height="13" fill="#645a5a"/><rect x="411" y="457" width="13" height="13" fill="#625858"/><rect x="423" y="457" width="13" height="13" fill="#605656"/><rect x="435" y="457" width="13" height="13" fill="#5e5454"/><rect x="447" y="457" width="13" height="13" fill="#5c5252"/><rect x="459" y="457" width="13" height="13" fill="#5a5050"/><rect x="471" y="457" width="13" height="13" fill="#584e4e"/><rect x="483" y="457" width="13" height="13" fill="#564c4c"/><rect x="495" y="457" width="13" height="13" fill="#544b4b"/><rect x="507" y="457" width="13" height="13" fill="#534949"/><rect x="519" y="457" width="13" height="13" fill="#514848"/><rect x="531" y="457" width="13" height="13" fill="#504646"/><rect x="543" y="457" width="13" height="13" fill="#4e4545"/><rect x="555" y="457" width="13" height="13" fill="#4d4343"/><rect x="567" y="457" width="13" height="13" fill="#4c4242"/><rect x="579" y="457" width="13" height="13" fill="#4a4141"/><rect x="591" y="457" width="13" height="13" fill="#493f40"/><rect x="603" y="457" width="13" height="13" fill="#483e3f"/><rect x="615" y="457" width="13" height="13" fill="#463d3d"/><rect x="627" y="457" width="13" height="13" fill="#453c3c"/><rect x="639" y="457" width="13" height="13" fill="#443a3b"/><rect x="651" y="457" width="13" height="13" fill="#42393a"/><rect x="663" y="457" width="13" height="13" fill="#413839"/><rect x="675" y="457" width="13" height="13" fill="#403738"/><rect x="687" y="457" width="13" height="13" fill="#3f3637"/><rect x="699" y="457" width="13" height="13" fill="#3e3437"/><rect x="711" y="457" width="13" height="13" fill="#3d3336"/><rect x="723" y="457" width="13" height="13" fill="#3d3336"/><rect x="735" y="457" width="13" height="13" fill="#3d3436"/><rect x="747" y="457" width="13" height="13" fill="#3c3336"/><rect x="759" y="457" width="13" height="13" fill="#3b3335"/><rect x="771" y="457" width="13" height="13" fill="#3a3234"/><rect x="783" y="457" width="13" height="13" fill="#3b3335"/><rect x="795" y="457" width="13" height="13" fill="#3d3436"/><rect x="195" y="469" width="13" height="13" fill="#5e5453"/><rect x="207" y="469" width="13" height="13" fill="#5f5554"/><rect x="219" y="469" width="13" height="13" fill="#605555"/><rect x="231" y="469" width="13" height="13" fill="#615756"/><rect x="243" y="469" width="13" height="13" fill="#625857"/><rect x="255" y="469" width="13" height="13" fill="#635959"/><rect x="267" y="469" width="13" height="13" fill="#655b5b"/><rect x="279" y="469" width="13" height="13" fill="#675d5c"/><rect x="291" y="469" width="13" height="13" fill="#695f5e"/><rect x="303" y="469" width="13" height="13" fill="#6a6060"/><rect x="315" y="469" width="13" height="13" fill="#6c6262"/><rect x="327" y="469" width="13" height="13" fill="#6d6363"/><rect x="339" y="469" width="13" height="13" fill="#6d6363"/><rect x="351" y="469" width="13" height="13" fill="#6c6362"/><rect x="363" y="469" width="13" height="13" fill="#6b6161"/><rect x="375" y="469" width="13" height="13" fill="#6a605f"/><rect x="387" y="469" width="13" height="13" fill="#675e5d"/><rect x="399" y="469" width="13" height="13" fill="#655b5b"/><rect x="411" y="469" width="13" height="13" fill="#635959"/><rect x="423" y="469" width="13" height="13" fill="#605756"/><rect x="435" y="469" width="13" height="13" fill="#5e5454"/><rect x="447" y="469" width="13" height="13" fill="#5c5252"/><rect x="459" y="469" width="13" height="13" fill="#5a5050"/><rect x="471" y="469" width="13" height="13" fill="#584e4e"/><rect x="483" y="469" width="13" height="13" fill="#564c4c"/><rect x="495" y="469" width="13" height="13" fill="#544a4a"/><rect x="507" y="469" width="13" height="13" fill="#534949"/><rect x="519" y="469" width="13" height="13" fill="#514747"/><rect x="531" y="469" width="13" height="13" fill="#504646"/><rect x="543" y="469" width="13" height="13" fill="#4e4444"/><rect x="555" y="469" width="13" height="13" fill="#4d4343"/><rect x="567" y="469" width="13" height="13" fill="#4b4242"/><rect x="579" y="469" width="13" height="13" fill="#4a4041"/><rect x="591" y="469" width="13" height="13" fill="#483f3f"/><rect x="603" y="469" width="13" height="13" fill="#473e3e"/><rect x="615" y="469" width="13" height="13" fill="#463c3d"/><rect x="627" y="469" width="13" height="13" fill="#453b3c"/><rect x="639" y="469" width="13" height="13" fill="#433a3a"/><rect x="651" y="469" width="13" height="13" fill="#423839"/><rect x="663" y="469" width="13" height="13" fill="#403738"/><rect x="675" y="469" width="13" height="13" fill="#3f3637"/><rect x="687" y="469" width="13" height="13" fill="#3f3637"/><rect x="699" y="469" width="13" height="13" fill="#3f3537"/><rect x="711" y="469" width="13" height="13" fill="#3e3537"/><rect x="723" y="469" width="13" height="13" fill="#3e3537"/><rect x="735" y="469" width="13" height="13" fill="#3d3437"/><rect x="747" y="469" width="13" height="13" fill="#3d3436"/><rect x="759" y="469" width="13" height="13" fill="#3c3335"/><rect x="771" y="469" width="13" height="13" fill="#3b3335"/><rect x="783" y="469" width="13" height="13" fill="#3c3436"/><rect x="795" y="469" width="13" height="13" fill="#3d3537"/><rect x="195" y="481" width="13" height="13" fill="#5e5353"/><rect x="207" y="481" width="13" height="13" fill="#5f5454"/><rect x="219" y="481" width="13" height="13" fill="#605555"/><rect x="231" y="481" width="13" height="13" fill="#615656"/><rect x="243" y="481" width="13" height="13" fill="#625857"/><rect x="255" y="481" width="13" height="13" fill="#645959"/><rect x="267" y="481" width="13" height="13" fill="#665b5b"/><rect x="279" y="481" width="13" height="13" fill="#685e5d"/><rect x="291" y="481" width="13" height="13" fill="#6a6060"/><rect x="303" y="481" width="13" height="13" fill="#6d6362"/><rect x="315" y="481" width="13" height="13" fill="#6f6565"/><rect x="327" y="481" width="13" height="13" fill="#706666"/><rect x="339" y="481" width="13" height="13" fill="#716766"/><rect x="351" y="481" width="13" height="13" fill="#706665"/><rect x="363" y="481" width="13" height="13" fill="#6e6464"/><rect x="375" y="481" width="13" height="13" fill="#6c6262"/><rect x="387" y="481" width="13" height="13" fill="#695f5f"/><rect x="399" y="481" width="13" height="13" fill="#675d5c"/><rect x="411" y="481" width="13" height="13" fill="#645a59"/><rect x="423" y="481" width="13" height="13" fill="#615757"/><rect x="435" y="481" width="13" height="13" fill="#5e5454"/><rect x="447" y="481" width="13" height="13" fill="#5c5252"/><rect x="459" y="481" width="13" height="13" fill="#5a504f"/><rect x="471" y="481" width="13" height="13" fill="#574e4d"/><rect x="483" y="481" width="13" height="13" fill="#564c4c"/><rect x="495" y="481" width="13" height="13" fill="#544a4a"/><rect x="507" y="481" width="13" height="13" fill="#524848"/><rect x="519" y="481" width="13" height="13" fill="#514747"/><rect x="531" y="481" width="13" height="13" fill="#4f4545"/><rect x="543" y="481" width="13" height="13" fill="#4e4444"/><rect x="555" y="481" width="13" height="13" fill="#4c4343"/><rect x="567" y="481" width="13" height="13" fill="#4b4141"/><rect x="579" y="481" width="13" height="13" fill="#494040"/><rect x="591" y="481" width="13" height="13" fill="#483f3f"/><rect x="603" y="481" width="13" height="13" fill="#473d3e"/><rect x="615" y="481" width="13" height="13" fill="#463c3d"/><rect x="627" y="481" width="13" height="13" fill="#443b3b"/><rect x="639" y="481" width="13" height="13" fill="#43393a"/><rect x="651" y="481" width="13" height="13" fill="#413838"/><rect x="663" y="481" width="13" height="13" fill="#3f3636"/><rect x="675" y="481" width="13" height="13" fill="#3e3535"/><rect x="687" y="481" width="13" height="13" fill="#3e3536"/><rect x="699" y="481" width="13" height="13" fill="#3f3536"/><rect x="711" y="481" width="13" height="13" fill="#3f3637"/><rect x="723" y="481" width="13" height="13" fill="#3f3637"/><rect x="735" y="481" width="13" height="13" fill="#3e3537"/><rect x="747" y="481" width="13" height="13" fill="#3e3537"/><rect x="759" y="481" width="13" height="13" fill="#3d3536"/><rect x="771" y="481" width="13" height="13" fill="#3d3436"/><rect x="783" y="481" width="13" height="13" fill="#3d3537"/><rect x="795" y="481" width="13" height="13" fill="#3e3637"/><rect x="195" y="493" width="13" height="13" fill="#5d5353"/><rect x="207" y="493" width="13" height="13" fill="#5e5453"/><rect x="219" y="493" width="13" height="13" fill="#5f5554"/><rect x="231" y="493" width="13" height="13" fill="#605656"/><rect x="243" y="493" width="13" height="13" fill="#625757"/><rect x="255" y="493" width="13" height="13" fill="#645959"/><rect x="267" y="493" width="13" height="13" fill="#665c5b"/><rect x="279" y="493" width="13" height="13" fill="#685e5e"/><rect x="291" y="493" width="13" height="13" fill="#6b6161"/><rect x="303" y="493" width="13" height="13" fill="#6f6565"/><rect x="315" y="493" width="13" height="13" fill="#736968"/><rect x="327" y="493" width="13" height="13" fill="#756b6b"/><rect x="339" y="493" width="13" height="13" fill="#756b6b"/><rect x="351" y="493" width="13" height="13" fill="#746a69"/><rect x="363" y="493" width="13" height="13" fill="#716767"/><rect x="375" y="493" width="13" height="13" fill="#6e6564"/><rect x="387" y="493" width="13" height="13" fill="#6b6161"/><rect x="399" y="493" width="13" height="13" fill="#685e5e"/><rect x="411" y="493" width="13" height="13" fill="#645b5a"/><rect x="423" y="493" width="13" height="13" fill="#615757"/><rect x="435" y="493" width="13" height="13" fill="#5e5454"/><rect x="447" y="493" width="13" height="13" fill="#5b5251"/><rect x="459" y="493" width="13" height="13" fill="#594f4f"/><rect x="471" y="493" width="13" height="13" fill="#574d4d"/><rect x="483" y="493" width="13" height="13" fill="#554b4b"/><rect x="495" y="493" width="13" height="13" fill="#534a49"/><rect x="507" y="493" width="13" height="13" fill="#524848"/><rect x="519" y="493" width="13" height="13" fill="#504646"/><rect x="531" y="493" width="13" height="13" fill="#4f4545"/><rect x="543" y="493" width="13" height="13" fill="#4d4444"/><rect x="555" y="493" width="13" height="13" fill="#4c4242"/><rect x="567" y="493" width="13" height="13" fill="#4a4141"/><rect x="579" y="493" width="13" height="13" fill="#494040"/><rect x="591" y="493" width="13" height="13" fill="#483e3e"/><rect x="603" y="493" width="13" height="13" fill="#473d3d"/><rect x="615" y="493" width="13" height="13" fill="#453c3c"/><rect x="627" y="493" width="13" height="13" fill="#443b3b"/><rect x="639" y="493" width="13" height="13" fill="#43393a"/><rect x="651" y="493" width="13" height="13" fill="#403738"/><rect x="663" y="493" width="13" height="13" fill="#3e3535"/><rect x="675" y="493" width="13" height="13" fill="#3d3434"/><rect x="687" y="493" width="13" height="13" fill="#3d3434"/><rect x="699" y="493" width="13" height="13" fill="#3e3535"/><rect x="711" y="493" width="13" height="13" fill="#3f3637"/><rect x="723" y="493" width="13" height="13" fill="#3f3637"/><rect x="735" y="493" width="13" height="13" fill="#3f3638"/><rect x="747" y="493" width="13" height="13" fill="#3f3638"/><rect x="759" y="493" width="13" height="13" fill="#3f3637"/><rect x="771" y="493" width="13" height="13" fill="#3e3637"/><rect x="783" y="493" width="13" height="13" fill="#3f3638"/><rect x="795" y="493" width="13" height="13" fill="#3f3738"/><rect x="195" y="505" width="13" height="13" fill="#5d5252"/><rect x="207" y="505" width="13" height="13" fill="#5e5353"/><rect x="219" y="505" width="13" height="13" fill="#5e5454"/><rect x="231" y="505" width="13" height="13" fill="#605555"/><rect x="243" y="505" width="13" height="13" fill="#615756"/><rect x="255" y="505" width="13" height="13" fill="#635958"/><rect x="267" y="505" width="13" height="13" fill="#655b5b"/><rect x="279" y="505" width="13" height="13" fill="#685e5e"/><rect x="291" y="505" width="13" height="13" fill="#6c6262"/><rect x="303" y="505" width="13" height="13" fill="#716767"/><rect x="315" y="505" width="13" height="13" fill="#776d6d"/><rect x="327" y="505" width="13" height="13" fill="#7c7272"/><rect x="339" y="505" width="13" height="13" fill="#7b7171"/><rect x="351" y="505" width="13" height="13" fill="#786e6e"/><rect x="363" y="505" width="13" height="13" fill="#756b6b"/><rect x="375" y="505" width="13" height="13" fill="#716767"/><rect x="387" y="505" width="13" height="13" fill="#6d6363"/><rect x="399" y="505" width="13" height="13" fill="#695f5f"/><rect x="411" y="505" width="13" height="13" fill="#655b5b"/><rect x="423" y="505" width="13" height="13" fill="#615757"/><rect x="435" y="505" width="13" height="13" fill="#5e5453"/><rect x="447" y="505" width="13" height="13" fill="#5b5151"/><rect x="459" y="505" width="13" height="13" fill="#584f4e"/><rect x="471" y="505" width="13" height="13" fill="#564c4c"/><rect x="483" y="505" width="13" height="13" fill="#544a4a"/><rect x="495" y="505" width="13" height="13" fill="#534949"/><rect x="507" y="505" width="13" height="13" fill="#514747"/><rect x="519" y="505" width="13" height="13" fill="#504646"/><rect x="531" y="505" width="13" height="13" fill="#4e4544"/><rect x="543" y="505" width="13" height="13" fill="#4d4343"/><rect x="555" y="505" width="13" height="13" fill="#4b4242"/><rect x="567" y="505" width="13" height="13" fill="#4a4041"/><rect x="579" y="505" width="13" height="13" fill="#493f3f"/><rect x="591" y="505" width="13" height="13" fill="#473e3e"/><rect x="603" y="505" width="13" height="13" fill="#463d3d"/><rect x="615" y="505" width="13" height="13" fill="#453c3c"/><rect x="627" y="505" width="13" height="13" fill="#443b3b"/><rect x="639" y="505" width="13" height="13" fill="#433a3a"/><rect x="651" y="505" width="13" height="13" fill="#413838"/><rect x="663" y="505" width="13" height="13" fill="#3e3535"/><rect x="675" y="505" width="13" height="13" fill="#3c3333"/><rect x="687" y="505" width="13" height="13" fill="#3d3434"/><rect x="699" y="505" width="13" height="13" fill="#3e3535"/><rect x="711" y="505" width="13" height="13" fill="#3f3637"/><rect x="723" y="505" width="13" height="13" fill="#403738"/><rect x="735" y="505" width="13" height="13" fill="#403738"/><rect x="747" y="505" width="13" height="13" fill="#403738"/><rect x="759" y="505" width="13" height="13" fill="#403738"/><rect x="771" y="505" width="13" height="13" fill="#403738"/><rect x="783" y="505" width="13" height="13" fill="#403739"/><rect x="795" y="505" width="13" height="13" fill="#403839"/><rect x="195" y="517" width="13" height="13" fill="#5c5251"/><rect x="207" y="517" width="13" height="13" fill="#5d5252"/><rect x="219" y="517" width="13" height="13" fill="#5e5353"/><rect x="231" y="517" width="13" height="13" fill="#5f5454"/><rect x="243" y="517" width="13" height="13" fill="#605655"/><rect x="255" y="517" width="13" height="13" fill="#625857"/><rect x="267" y="517" width="13" height="13" fill="#645a5a"/><rect x="279" y="517" width="13" height="13" fill="#685e5d"/><rect x="291" y="517" width="13" height="13" fill="#6c6261"/><rect x="303" y="517" width="13" height="13" fill="#726867"/><rect x="315" y="517" width="13" height="13" fill="#7c7272"/><rect x="327" y="517" width="13" height="13" fill="#867c7c"/><rect x="339" y="517" width="13" height="13" fill="#827878"/><rect x="351" y="517" width="13" height="13" fill="#7d7373"/><rect x="363" y="517" width="13" height="13" fill="#796f6e"/><rect x="375" y="517" width="13" height="13" fill="#746a6a"/><rect x="387" y="517" width="13" height="13" fill="#6f6565"/><rect x="399" y="517" width="13" height="13" fill="#6a6060"/><rect x="411" y="517" width="13" height="13" fill="#655b5b"/><rect x="423" y="517" width="13" height="13" fill="#605756"/><rect x="435" y="517" width="13" height="13" fill="#5c5352"/><rect x="447" y="517" width="13" height="13" fill="#59504f"/><rect x="459" y="517" width="13" height="13" fill="#574d4d"/><rect x="471" y="517" width="13" height="13" fill="#554b4b"/><rect x="483" y="517" width="13" height="13" fill="#534949"/><rect x="495" y="517" width="13" height="13" fill="#514847"/><rect x="507" y="517" width="13" height="13" fill="#504646"/><rect x="519" y="517" width="13" height="13" fill="#4f4545"/><rect x="531" y="517" width="13" height="13" fill="#4e4444"/><rect x="543" y="517" width="13" height="13" fill="#4c4343"/><rect x="555" y="517" width="13" height="13" fill="#4b4141"/><rect x="567" y="517" width="13" height="13" fill="#4a4040"/><rect x="579" y="517" width="13" height="13" fill="#483f3f"/><rect x="591" y="517" width="13" height="13" fill="#473e3e"/><rect x="603" y="517" width="13" height="13" fill="#463d3d"/><rect x="615" y="517" width="13" height="13" fill="#453b3c"/><rect x="627" y="517" width="13" height="13" fill="#443b3b"/><rect x="639" y="517" width="13" height="13" fill="#433a3a"/><rect x="651" y="517" width="13" height="13" fill="#423939"/><rect x="663" y="517" width="13" height="13" fill="#403737"/><rect x="675" y="517" width="13" height="13" fill="#3e3535"/><rect x="687" y="517" width="13" height="13" fill="#3e3535"/><rect x="699" y="517" width="13" height="13" fill="#3f3636"/><rect x="711" y="517" width="13" height="13" fill="#403737"/><rect x="723" y="517" width="13" height="13" fill="#413738"/><rect x="735" y="517" width="13" height="13" fill="#413839"/><rect x="747" y="517" width="13" height="13" fill="#413839"/><rect x="759" y="517" width="13" height="13" fill="#413839"/><rect x="771" y="517" width="13" height="13" fill="#413839"/><rect x="783" y="517" width="13" height="13" fill="#41383a"/><rect x="795" y="517" width="13" height="13" fill="#41393a"/><rect x="195" y="529" width="13" height="13" fill="#5b5150"/><rect x="207" y="529" width="13" height="13" fill="#5c5151"/><rect x="219" y="529" width="13" height="13" fill="#5d5252"/><rect x="231" y="529" width="13" height="13" fill="#5d5353"/><rect x="243" y="529" width="13" height="13" fill="#5f5454"/><rect x="255" y="529" width="13" height="13" fill="#615656"/><rect x="267" y="529" width="13" height="13" fill="#635958"/><rect x="279" y="529" width="13" height="13" fill="#665c5c"/><rect x="291" y="529" width="13" height="13" fill="#6a6060"/><rect x="303" y="529" width="13" height="13" fill="#6e6464"/><rect x="315" y="529" width="13" height="13" fill="#7b7170"/><rect x="327" y="529" width="13" height="13" fill="#8b8181"/><rect x="339" y="529" width="13" height="13" fill="#857b7b"/><rect x="351" y="529" width="13" height="13" fill="#827978"/><rect x="363" y="529" width="13" height="13" fill="#7d7373"/><rect x="375" y="529" width="13" height="13" fill="#776d6d"/><rect x="387" y="529" width="13" height="13" fill="#716767"/><rect x="399" y="529" width="13" height="13" fill="#6b6160"/><rect x="411" y="529" width="13" height="13" fill="#645a5a"/><rect x="423" y="529" width="13" height="13" fill="#5e5554"/><rect x="435" y="529" width="13" height="13" fill="#5a5150"/><rect x="447" y="529" width="13" height="13" fill="#574e4d"/><rect x="459" y="529" width="13" height="13" fill="#554c4b"/><rect x="471" y="529" width="13" height="13" fill="#534a49"/><rect x="483" y="529" width="13" height="13" fill="#524847"/><rect x="495" y="529" width="13" height="13" fill="#504646"/><rect x="507" y="529" width="13" height="13" fill="#4f4545"/><rect x="519" y="529" width="13" height="13" fill="#4e4444"/><rect x="531" y="529" width="13" height="13" fill="#4d4343"/><rect x="543" y="529" width="13" height="13" fill="#4c4242"/><rect x="555" y="529" width="13" height="13" fill="#4b4141"/><rect x="567" y="529" width="13" height="13" fill="#494040"/><rect x="579" y="529" width="13" height="13" fill="#483e3f"/><rect x="591" y="529" width="13" height="13" fill="#473d3e"/><rect x="603" y="529" width="13" height="13" fill="#463d3d"/><rect x="615" y="529" width="13" height="13" fill="#453b3b"/><rect x="627" y="529" width="13" height="13" fill="#433a3a"/><rect x="639" y="529" width="13" height="13" fill="#433a3a"/><rect x="651" y="529" width="13" height="13" fill="#433a3a"/><rect x="663" y="529" width="13" height="13" fill="#423939"/><rect x="675" y="529" width="13" height="13" fill="#403738"/><rect x="687" y="529" width="13" height="13" fill="#403737"/><rect x="699" y="529" width="13" height="13" fill="#403738"/><rect x="711" y="529" width="13" height="13" fill="#413838"/><rect x="723" y="529" width="13" height="13" fill="#413839"/><rect x="735" y="529" width="13" height="13" fill="#423939"/><rect x="747" y="529" width="13" height="13" fill="#42393a"/><rect x="759" y="529" width="13" height="13" fill="#42393a"/><rect x="771" y="529" width="13" height="13" fill="#42393a"/><rect x="783" y="529" width="13" height="13" fill="#42393a"/><rect x="795" y="529" width="13" height="13" fill="#42393b"/><rect x="195" y="541" width="13" height="13" fill="#5a504f"/><rect x="207" y="541" width="13" height="13" fill="#5b5050"/><rect x="219" y="541" width="13" height="13" fill="#5b5150"/><rect x="231" y="541" width="13" height="13" fill="#5c5251"/><rect x="243" y="541" width="13" height="13" fill="#5d5352"/><rect x="255" y="541" width="13" height="13" fill="#5e5454"/><rect x="267" y="541" width="13" height="13" fill="#605656"/><rect x="279" y="541" width="13" height="13" fill="#635959"/><rect x="291" y="541" width="13" height="13" fill="#685e5e"/><rect x="303" y="541" width="13" height="13" fill="#6a6060"/><rect x="315" y="541" width="13" height="13" fill="#706666"/><rect x="327" y="541" width="13" height="13" fill="#7d7372"/><rect x="339" y="541" width="13" height="13" fill="#847b7a"/><rect x="351" y="541" width="13" height="13" fill="#8d8483"/><rect x="363" y="541" width="13" height="13" fill="#807776"/><rect x="375" y="541" width="13" height="13" fill="#786f6e"/><rect x="387" y="541" width="13" height="13" fill="#736969"/><rect x="399" y="541" width="13" height="13" fill="#6a6160"/><rect x="411" y="541" width="13" height="13" fill="#615857"/><rect x="423" y="541" width="13" height="13" fill="#5a5150"/><rect x="435" y="541" width="13" height="13" fill="#574d4c"/><rect x="447" y="541" width="13" height="13" fill="#554c4b"/><rect x="459" y="541" width="13" height="13" fill="#534a49"/><rect x="471" y="541" width="13" height="13" fill="#514847"/><rect x="483" y="541" width="13" height="13" fill="#4f4645"/><rect x="495" y="541" width="13" height="13" fill="#4e4444"/><rect x="507" y="541" width="13" height="13" fill="#4e4444"/><rect x="519" y="541" width="13" height="13" fill="#4d4343"/><rect x="531" y="541" width="13" height="13" fill="#4c4343"/><rect x="543" y="541" width="13" height="13" fill="#4b4242"/><rect x="555" y="541" width="13" height="13" fill="#4a4141"/><rect x="567" y="541" width="13" height="13" fill="#493f3f"/><rect x="579" y="541" width="13" height="13" fill="#483e3e"/><rect x="591" y="541" width="13" height="13" fill="#473d3d"/><rect x="603" y="541" width="13" height="13" fill="#473d3d"/><rect x="615" y="541" width="13" height="13" fill="#453c3c"/><rect x="627" y="541" width="13" height="13" fill="#443a3a"/><rect x="639" y="541" width="13" height="13" fill="#433a3a"/><rect x="651" y="541" width="13" height="13" fill="#433a3a"/><rect x="663" y="541" width="13" height="13" fill="#433a3a"/><rect x="675" y="541" width="13" height="13" fill="#423939"/><rect x="687" y="541" width="13" height="13" fill="#423939"/><rect x="699" y="541" width="13" height="13" fill="#423939"/><rect x="711" y="541" width="13" height="13" fill="#423939"/><rect x="723" y="541" width="13" height="13" fill="#42393a"/><rect x="735" y="541" width="13" height="13" fill="#43393a"/><rect x="747" y="541" width="13" height="13" fill="#43393a"/><rect x="759" y="541" width="13" height="13" fill="#433a3b"/><rect x="771" y="541" width="13" height="13" fill="#433a3b"/><rect x="783" y="541" width="13" height="13" fill="#433a3b"/><rect x="795" y="541" width="13" height="13" fill="#433a3b"/><rect x="195" y="553" width="13" height="13" fill="#594f4e"/><rect x="207" y="553" width="13" height="13" fill="#594f4e"/><rect x="219" y="553" width="13" height="13" fill="#5a4f4f"/><rect x="231" y="553" width="13" height="13" fill="#5a504f"/><rect x="243" y="553" width="13" height="13" fill="#5b5150"/><rect x="255" y="553" width="13" height="13" fill="#5c5251"/><rect x="267" y="553" width="13" height="13" fill="#5d5353"/><rect x="279" y="553" width="13" height="13" fill="#5f5454"/><rect x="291" y="553" width="13" height="13" fill="#625858"/><rect x="303" y="553" width="13" height="13" fill="#685e5e"/><rect x="315" y="553" width="13" height="13" fill="#6c6262"/><rect x="327" y="553" width="13" height="13" fill="#746a6a"/><rect x="339" y="553" width="13" height="13" fill="#7f7575"/><rect x="351" y="553" width="13" height="13" fill="#867c7b"/><rect x="363" y="553" width="13" height="13" fill="#7c7272"/><rect x="375" y="553" width="13" height="13" fill="#7a7070"/><rect x="387" y="553" width="13" height="13" fill="#746a6a"/><rect x="399" y="553" width="13" height="13" fill="#695f5e"/><rect x="411" y="553" width="13" height="13" fill="#5c5352"/><rect x="423" y="553" width="13" height="13" fill="#544b49"/><rect x="435" y="553" width="13" height="13" fill="#514947"/><rect x="447" y="553" width="13" height="13" fill="#524948"/><rect x="459" y="553" width="13" height="13" fill="#514847"/><rect x="471" y="553" width="13" height="13" fill="#4f4545"/><rect x="483" y="553" width="13" height="13" fill="#4d4343"/><rect x="495" y="553" width="13" height="13" fill="#4c4242"/><rect x="507" y="553" width="13" height="13" fill="#4c4242"/><rect x="519" y="553" width="13" height="13" fill="#4c4242"/><rect x="531" y="553" width="13" height="13" fill="#4c4242"/><rect x="543" y="553" width="13" height="13" fill="#4b4141"/><rect x="555" y="553" width="13" height="13" fill="#4a4040"/><rect x="567" y="553" width="13" height="13" fill="#493f3f"/><rect x="579" y="553" width="13" height="13" fill="#483e3e"/><rect x="591" y="553" width="13" height="13" fill="#473d3d"/><rect x="603" y="553" width="13" height="13" fill="#473d3d"/><rect x="615" y="553" width="13" height="13" fill="#463d3d"/><rect x="627" y="553" width="13" height="13" fill="#453c3c"/><rect x="639" y="553" width="13" height="13" fill="#443b3b"/><rect x="651" y="553" width="13" height="13" fill="#443b3b"/><rect x="663" y="553" width="13" height="13" fill="#443b3b"/><rect x="675" y="553" width="13" height="13" fill="#433a3a"/><rect x="687" y="553" width="13" height="13" fill="#433a3a"/><rect x="699" y="553" width="13" height="13" fill="#433a3a"/><rect x="711" y="553" width="13" height="13" fill="#433a3a"/><rect x="723" y="553" width="13" height="13" fill="#433a3b"/><rect x="735" y="553" width="13" height="13" fill="#433a3b"/><rect x="747" y="553" width="13" height="13" fill="#433a3b"/><rect x="759" y="553" width="13" height="13" fill="#443a3b"/><rect x="771" y="553" width="13" height="13" fill="#443a3b"/><rect x="783" y="553" width="13" height="13" fill="#443b3c"/><rect x="795" y="553" width="13" height="13" fill="#443b3c"/><rect x="195" y="565" width="13" height="13" fill="#584e4d"/><rect x="207" y="565" width="13" height="13" fill="#584e4d"/><rect x="219" y="565" width="13" height="13" fill="#584e4d"/><rect x="231" y="565" width="13" height="13" fill="#584e4d"/><rect x="243" y="565" width="13" height="13" fill="#594e4e"/><rect x="255" y="565" width="13" height="13" fill="#5a4f4f"/><rect x="267" y="565" width="13" height="13" fill="#5b5050"/><rect x="279" y="565" width="13" height="13" fill="#5a5050"/><rect x="291" y="565" width="13" height="13" fill="#5b5151"/><rect x="303" y="565" width="13" height="13" fill="#615656"/><rect x="315" y="565" width="13" height="13" fill="#665c5b"/><rect x="327" y="565" width="13" height="13" fill="#6c6261"/><rect x="339" y="565" width="13" height="13" fill="#736968"/><rect x="351" y="565" width="13" height="13" fill="#776d6d"/><rect x="363" y="565" width="13" height="13" fill="#766d6c"/><rect x="375" y="565" width="13" height="13" fill="#766c6c"/><rect x="387" y="565" width="13" height="13" fill="#706666"/><rect x="399" y="565" width="13" height="13" fill="#645a5a"/><rect x="411" y="565" width="13" height="13" fill="#564d4c"/><rect x="423" y="565" width="13" height="13" fill="#4c4442"/><rect x="435" y="565" width="13" height="13" fill="#4c4442"/><rect x="447" y="565" width="13" height="13" fill="#4f4645"/><rect x="459" y="565" width="13" height="13" fill="#4f4645"/><rect x="471" y="565" width="13" height="13" fill="#4d4343"/><rect x="483" y="565" width="13" height="13" fill="#4a4040"/><rect x="495" y="565" width="13" height="13" fill="#493f3f"/><rect x="507" y="565" width="13" height="13" fill="#4a4040"/><rect x="519" y="565" width="13" height="13" fill="#4b4141"/><rect x="531" y="565" width="13" height="13" fill="#4b4141"/><rect x="543" y="565" width="13" height="13" fill="#4b4141"/><rect x="555" y="565" width="13" height="13" fill="#4a4040"/><rect x="567" y="565" width="13" height="13" fill="#493f3f"/><rect x="579" y="565" width="13" height="13" fill="#483e3e"/><rect x="591" y="565" width="13" height="13" fill="#473d3d"/><rect x="603" y="565" width="13" height="13" fill="#473d3d"/><rect x="615" y="565" width="13" height="13" fill="#473d3d"/><rect x="627" y="565" width="13" height="13" fill="#463c3c"/><rect x="639" y="565" width="13" height="13" fill="#453c3c"/><rect x="651" y="565" width="13" height="13" fill="#453c3c"/><rect x="663" y="565" width="13" height="13" fill="#453b3c"/><rect x="675" y="565" width="13" height="13" fill="#443b3b"/><rect x="687" y="565" width="13" height="13" fill="#443b3b"/><rect x="699" y="565" width="13" height="13" fill="#443b3b"/><rect x="711" y="565" width="13" height="13" fill="#443b3b"/><rect x="723" y="565" width="13" height="13" fill="#443b3b"/><rect x="735" y="565" width="13" height="13" fill="#443b3c"/><rect x="747" y="565" width="13" height="13" fill="#443b3c"/><rect x="759" y="565" width="13" height="13" fill="#443b3c"/><rect x="771" y="565" width="13" height="13" fill="#443b3c"/><rect x="783" y="565" width="13" height="13" fill="#453b3c"/><rect x="795" y="565" width="13" height="13" fill="#453c3c"/><rect x="195" y="577" width="13" height="13" fill="#574d4c"/><rect x="207" y="577" width="13" height="13" fill="#574c4c"/><rect x="219" y="577" width="13" height="13" fill="#574c4b"/><rect x="231" y="577" width="13" height="13" fill="#564c4b"/><rect x="243" y="577" width="13" height="13" fill="#564c4b"/><rect x="255" y="577" width="13" height="13" fill="#574c4c"/><rect x="267" y="577" width="13" height="13" fill="#584e4d"/><rect x="279" y="577" width="13" height="13" fill="#594f4f"/><rect x="291" y="577" width="13" height="13" fill="#594f4e"/><rect x="303" y="577" width="13" height="13" fill="#5b5050"/><rect x="315" y="577" width="13" height="13" fill="#5f5454"/><rect x="327" y="577" width="13" height="13" fill="#635959"/><rect x="339" y="577" width="13" height="13" fill="#685e5e"/><rect x="351" y="577" width="13" height="13" fill="#6c6261"/><rect x="363" y="577" width="13" height="13" fill="#6e6463"/><rect x="375" y="577" width="13" height="13" fill="#6d6363"/><rect x="387" y="577" width="13" height="13" fill="#685e5e"/><rect x="399" y="577" width="13" height="13" fill="#5f5655"/><rect x="411" y="577" width="13" height="13" fill="#544b4a"/><rect x="423" y="577" width="13" height="13" fill="#4c4442"/><rect x="435" y="577" width="13" height="13" fill="#4c4442"/><rect x="447" y="577" width="13" height="13" fill="#4f4645"/><rect x="459" y="577" width="13" height="13" fill="#4f4544"/><rect x="471" y="577" width="13" height="13" fill="#4b4241"/><rect x="483" y="577" width="13" height="13" fill="#483e3e"/><rect x="495" y="577" width="13" height="13" fill="#473d3d"/><rect x="507" y="577" width="13" height="13" fill="#493f3f"/><rect x="519" y="577" width="13" height="13" fill="#4a4040"/><rect x="531" y="577" width="13" height="13" fill="#4a4040"/><rect x="543" y="577" width="13" height="13" fill="#4a4040"/><rect x="555" y="577" width="13" height="13" fill="#4a4040"/><rect x="567" y="577" width="13" height="13" fill="#493f3f"/><rect x="579" y="577" width="13" height="13" fill="#483e3e"/><rect x="591" y="577" width="13" height="13" fill="#483e3e"/><rect x="603" y="577" width="13" height="13" fill="#473d3d"/><rect x="615" y="577" width="13" height="13" fill="#473d3d"/><rect x="627" y="577" width="13" height="13" fill="#473d3d"/><rect x="639" y="577" width="13" height="13" fill="#463d3d"/><rect x="651" y="577" width="13" height="13" fill="#463c3d"/><rect x="663" y="577" width="13" height="13" fill="#463c3c"/><rect x="675" y="577" width="13" height="13" fill="#453c3c"/><rect x="687" y="577" width="13" height="13" fill="#453c3c"/><rect x="699" y="577" width="13" height="13" fill="#453c3c"/><rect x="711" y="577" width="13" height="13" fill="#453c3c"/><rect x="723" y="577" width="13" height="13" fill="#453c3c"/><rect x="735" y="577" width="13" height="13" fill="#453c3c"/><rect x="747" y="577" width="13" height="13" fill="#453c3c"/><rect x="759" y="577" width="13" height="13" fill="#453c3d"/><rect x="771" y="577" width="13" height="13" fill="#453c3d"/><rect x="783" y="577" width="13" height="13" fill="#453c3d"/><rect x="795" y="577" width="13" height="13" fill="#453c3d"/><rect x="195" y="589" width="13" height="13" fill="#564c4b"/><rect x="207" y="589" width="13" height="13" fill="#564b4a"/><rect x="219" y="589" width="13" height="13" fill="#554a4a"/><rect x="231" y="589" width="13" height="13" fill="#544a49"/><rect x="243" y="589" width="13" height="13" fill="#544948"/><rect x="255" y="589" width="13" height="13" fill="#534948"/><rect x="267" y="589" width="13" height="13" fill="#554a49"/><rect x="279" y="589" width="13" height="13" fill="#544a49"/><rect x="291" y="589" width="13" height="13" fill="#514645"/><rect x="303" y="589" width="13" height="13" fill="#554a49"/><rect x="315" y="589" width="13" height="13" fill="#584e4e"/><rect x="327" y="589" width="13" height="13" fill="#5b5150"/><rect x="339" y="589" width="13" height="13" fill="#5f5554"/><rect x="351" y="589" width="13" height="13" fill="#635958"/><rect x="363" y="589" width="13" height="13" fill="#655b5a"/><rect x="375" y="589" width="13" height="13" fill="#645a5a"/><rect x="387" y="589" width="13" height="13" fill="#615757"/><rect x="399" y="589" width="13" height="13" fill="#5c5251"/><rect x="411" y="589" width="13" height="13" fill="#564c4b"/><rect x="423" y="589" width="13" height="13" fill="#514847"/><rect x="435" y="589" width="13" height="13" fill="#504745"/><rect x="447" y="589" width="13" height="13" fill="#504746"/><rect x="459" y="589" width="13" height="13" fill="#4f4545"/><rect x="471" y="589" width="13" height="13" fill="#4c4242"/><rect x="483" y="589" width="13" height="13" fill="#493f3f"/><rect x="495" y="589" width="13" height="13" fill="#483e3e"/><rect x="507" y="589" width="13" height="13" fill="#493f3f"/><rect x="519" y="589" width="13" height="13" fill="#4a4040"/><rect x="531" y="589" width="13" height="13" fill="#493f3f"/><rect x="543" y="589" width="13" height="13" fill="#493f3f"/><rect x="555" y="589" width="13" height="13" fill="#493f3f"/><rect x="567" y="589" width="13" height="13" fill="#493f3f"/><rect x="579" y="589" width="13" height="13" fill="#493f3f"/><rect x="591" y="589" width="13" height="13" fill="#483e3e"/><rect x="603" y="589" width="13" height="13" fill="#483e3e"/><rect x="615" y="589" width="13" height="13" fill="#483e3e"/><rect x="627" y="589" width="13" height="13" fill="#473e3e"/><rect x="639" y="589" width="13" height="13" fill="#473d3e"/><rect x="651" y="589" width="13" height="13" fill="#473d3d"/><rect x="663" y="589" width="13" height="13" fill="#463d3d"/><rect x="675" y="589" width="13" height="13" fill="#463d3d"/><rect x="687" y="589" width="13" height="13" fill="#463d3d"/><rect x="699" y="589" width="13" height="13" fill="#463d3d"/><rect x="711" y="589" width="13" height="13" fill="#463c3d"/><rect x="723" y="589" width="13" height="13" fill="#463c3d"/><rect x="735" y="589" width="13" height="13" fill="#463c3d"/><rect x="747" y="589" width="13" height="13" fill="#463c3d"/><rect x="759" y="589" width="13" height="13" fill="#463c3d"/><rect x="771" y="589" width="13" height="13" fill="#463d3d"/><rect x="783" y="589" width="13" height="13" fill="#463d3d"/><rect x="795" y="589" width="13" height="13" fill="#463d3e"/><rect x="195" y="601" width="13" height="13" fill="#564b4a"/><rect x="207" y="601" width="13" height="13" fill="#554a49"/><rect x="219" y="601" width="13" height="13" fill="#544948"/><rect x="231" y="601" width="13" height="13" fill="#534847"/><rect x="243" y="601" width="13" height="13" fill="#514646"/><rect x="255" y="601" width="13" height="13" fill="#504544"/><rect x="267" y="601" width="13" height="13" fill="#514645"/><rect x="279" y="601" width="13" height="13" fill="#534847"/><rect x="291" y="601" width="13" height="13" fill="#514646"/><rect x="303" y="601" width="13" height="13" fill="#534848"/><rect x="315" y="601" width="13" height="13" fill="#534948"/><rect x="327" y="601" width="13" height="13" fill="#534848"/><rect x="339" y="601" width="13" height="13" fill="#574d4c"/><rect x="351" y="601" width="13" height="13" fill="#5c5251"/><rect x="363" y="601" width="13" height="13" fill="#5e5454"/><rect x="375" y="601" width="13" height="13" fill="#5e5453"/><rect x="387" y="601" width="13" height="13" fill="#5b5151"/><rect x="399" y="601" width="13" height="13" fill="#584e4e"/><rect x="411" y="601" width="13" height="13" fill="#554c4b"/><rect x="423" y="601" width="13" height="13" fill="#534a49"/><rect x="435" y="601" width="13" height="13" fill="#524847"/><rect x="447" y="601" width="13" height="13" fill="#514747"/><rect x="459" y="601" width="13" height="13" fill="#4f4645"/><rect x="471" y="601" width="13" height="13" fill="#4d4343"/><rect x="483" y="601" width="13" height="13" fill="#4b4141"/><rect x="495" y="601" width="13" height="13" fill="#4a4040"/><rect x="507" y="601" width="13" height="13" fill="#4a4040"/><rect x="519" y="601" width="13" height="13" fill="#493f3f"/><rect x="531" y="601" width="13" height="13" fill="#483e3e"/><rect x="543" y="601" width="13" height="13" fill="#483e3e"/><rect x="555" y="601" width="13" height="13" fill="#493f3f"/><rect x="567" y="601" width="13" height="13" fill="#493f3f"/><rect x="579" y="601" width="13" height="13" fill="#493f3f"/><rect x="591" y="601" width="13" height="13" fill="#493f3f"/><rect x="603" y="601" width="13" height="13" fill="#493f3f"/><rect x="615" y="601" width="13" height="13" fill="#483f3f"/><rect x="627" y="601" width="13" height="13" fill="#483e3e"/><rect x="639" y="601" width="13" height="13" fill="#483e3e"/><rect x="651" y="601" width="13" height="13" fill="#473e3e"/><rect x="663" y="601" width="13" height="13" fill="#473e3e"/><rect x="675" y="601" width="13" height="13" fill="#473e3e"/><rect x="687" y="601" width="13" height="13" fill="#473d3e"/><rect x="699" y="601" width="13" height="13" fill="#473d3e"/><rect x="711" y="601" width="13" height="13" fill="#473d3e"/><rect x="723" y="601" width="13" height="13" fill="#473d3e"/><rect x="735" y="601" width="13" height="13" fill="#463d3e"/><rect x="747" y="601" width="13" height="13" fill="#463d3e"/><rect x="759" y="601" width="13" height="13" fill="#463d3e"/><rect x="771" y="601" width="13" height="13" fill="#473d3e"/><rect x="783" y="601" width="13" height="13" fill="#473d3e"/><rect x="795" y="601" width="13" height="13" fill="#473d3e"/><rect x="195" y="613" width="13" height="13" fill="#564b4a"/><rect x="207" y="613" width="13" height="13" fill="#554a49"/><rect x="219" y="613" width="13" height="13" fill="#534848"/><rect x="231" y="613" width="13" height="13" fill="#524746"/><rect x="243" y="613" width="13" height="13" fill="#514645"/><rect x="255" y="613" width="13" height="13" fill="#4e4343"/><rect x="267" y="613" width="13" height="13" fill="#4f4443"/><rect x="279" y="613" width="13" height="13" fill="#524746"/><rect x="291" y="613" width="13" height="13" fill="#534847"/><rect x="303" y="613" width="13" height="13" fill="#534848"/><rect x="315" y="613" width="13" height="13" fill="#4f4545"/><rect x="327" y="613" width="13" height="13" fill="#4c4242"/><rect x="339" y="613" width="13" height="13" fill="#524848"/><rect x="351" y="613" width="13" height="13" fill="#584d4d"/><rect x="363" y="613" width="13" height="13" fill="#5a4f4f"/><rect x="375" y="613" width="13" height="13" fill="#594e4e"/><rect x="387" y="613" width="13" height="13" fill="#564b4b"/><rect x="399" y="613" width="13" height="13" fill="#544948"/><rect x="411" y="613" width="13" height="13" fill="#534848"/><rect x="423" y="613" width="13" height="13" fill="#534848"/><rect x="435" y="613" width="13" height="13" fill="#524848"/><rect x="447" y="613" width="13" height="13" fill="#514847"/><rect x="459" y="613" width="13" height="13" fill="#504646"/><rect x="471" y="613" width="13" height="13" fill="#4e4444"/><rect x="483" y="613" width="13" height="13" fill="#4d4343"/><rect x="495" y="613" width="13" height="13" fill="#4b4141"/><rect x="507" y="613" width="13" height="13" fill="#4a4040"/><rect x="519" y="613" width="13" height="13" fill="#483e3e"/><rect x="531" y="613" width="13" height="13" fill="#463c3c"/><rect x="543" y="613" width="13" height="13" fill="#473d3d"/><rect x="555" y="613" width="13" height="13" fill="#483e3e"/><rect x="567" y="613" width="13" height="13" fill="#493f3f"/><rect x="579" y="613" width="13" height="13" fill="#493f3f"/><rect x="591" y="613" width="13" height="13" fill="#494040"/><rect x="603" y="613" width="13" height="13" fill="#493f3f"/><rect x="615" y="613" width="13" height="13" fill="#493f3f"/><rect x="627" y="613" width="13" height="13" fill="#493f3f"/><rect x="639" y="613" width="13" height="13" fill="#483f3f"/><rect x="651" y="613" width="13" height="13" fill="#483f3f"/><rect x="663" y="613" width="13" height="13" fill="#483e3f"/><rect x="675" y="613" width="13" height="13" fill="#483e3e"/><rect x="687" y="613" width="13" height="13" fill="#483e3e"/><rect x="699" y="613" width="13" height="13" fill="#473e3e"/><rect x="711" y="613" width="13" height="13" fill="#473e3e"/><rect x="723" y="613" width="13" height="13" fill="#473e3e"/><rect x="735" y="613" width="13" height="13" fill="#473e3e"/><rect x="747" y="613" width="13" height="13" fill="#473e3e"/><rect x="759" y="613" width="13" height="13" fill="#473e3e"/><rect x="771" y="613" width="13" height="13" fill="#473e3e"/><rect x="783" y="613" width="13" height="13" fill="#473e3e"/><rect x="795" y="613" width="13" height="13" fill="#473e3f"/><rect x="195" y="625" width="13" height="13" fill="#564b4a"/><rect x="207" y="625" width="13" height="13" fill="#564b4a"/><rect x="219" y="625" width="13" height="13" fill="#544948"/><rect x="231" y="625" width="13" height="13" fill="#504544"/><rect x="243" y="625" width="13" height="13" fill="#514645"/><rect x="255" y="625" width="13" height="13" fill="#504544"/><rect x="267" y="625" width="13" height="13" fill="#4f4443"/><rect x="279" y="625" width="13" height="13" fill="#524746"/><rect x="291" y="625" width="13" height="13" fill="#544948"/><rect x="303" y="625" width="13" height="13" fill="#544948"/><rect x="315" y="625" width="13" height="13" fill="#514746"/><rect x="327" y="625" width="13" height="13" fill="#504545"/><rect x="339" y="625" width="13" height="13" fill="#534848"/><rect x="351" y="625" width="13" height="13" fill="#564b4b"/><rect x="363" y="625" width="13" height="13" fill="#574c4c"/><rect x="375" y="625" width="13" height="13" fill="#554a49"/><rect x="387" y="625" width="13" height="13" fill="#504545"/><rect x="399" y="625" width="13" height="13" fill="#4d4242"/><rect x="411" y="625" width="13" height="13" fill="#4f4343"/><rect x="423" y="625" width="13" height="13" fill="#514645"/><rect x="435" y="625" width="13" height="13" fill="#524747"/><rect x="447" y="625" width="13" height="13" fill="#514747"/><rect x="459" y="625" width="13" height="13" fill="#514746"/><rect x="471" y="625" width="13" height="13" fill="#4f4545"/><rect x="483" y="625" width="13" height="13" fill="#4e4443"/><rect x="495" y="625" width="13" height="13" fill="#4c4242"/><rect x="507" y="625" width="13" height="13" fill="#4a4040"/><rect x="519" y="625" width="13" height="13" fill="#483e3e"/><rect x="531" y="625" width="13" height="13" fill="#463c3c"/><rect x="543" y="625" width="13" height="13" fill="#473d3d"/><rect x="555" y="625" width="13" height="13" fill="#483e3e"/><rect x="567" y="625" width="13" height="13" fill="#493f3f"/><rect x="579" y="625" width="13" height="13" fill="#4a4040"/><rect x="591" y="625" width="13" height="13" fill="#4a4040"/><rect x="603" y="625" width="13" height="13" fill="#4a4040"/><rect x="615" y="625" width="13" height="13" fill="#494040"/><rect x="627" y="625" width="13" height="13" fill="#494040"/><rect x="639" y="625" width="13" height="13" fill="#493f3f"/><rect x="651" y="625" width="13" height="13" fill="#493f3f"/><rect x="663" y="625" width="13" height="13" fill="#493f3f"/><rect x="675" y="625" width="13" height="13" fill="#483f3f"/><rect x="687" y="625" width="13" height="13" fill="#483f3f"/><rect x="699" y="625" width="13" height="13" fill="#483f3f"/><rect x="711" y="625" width="13" height="13" fill="#483e3f"/><rect x="723" y="625" width="13" height="13" fill="#483e3f"/><rect x="735" y="625" width="13" height="13" fill="#483e3f"/><rect x="747" y="625" width="13" height="13" fill="#483e3f"/><rect x="759" y="625" width="13" height="13" fill="#483e3f"/><rect x="771" y="625" width="13" height="13" fill="#483e3f"/><rect x="783" y="625" width="13" height="13" fill="#483e3f"/><rect x="795" y="625" width="13" height="13" fill="#483e3f"/><rect x="195" y="637" width="13" height="13" fill="#564c4b"/><rect x="207" y="637" width="13" height="13" fill="#574c4b"/><rect x="219" y="637" width="13" height="13" fill="#594e4d"/><rect x="231" y="637" width="13" height="13" fill="#574c4b"/><rect x="243" y="637" width="13" height="13" fill="#534847"/><rect x="255" y="637" width="13" height="13" fill="#524746"/><rect x="267" y="637" width="13" height="13" fill="#524746"/><rect x="279" y="637" width="13" height="13" fill="#544848"/><rect x="291" y="637" width="13" height="13" fill="#554a49"/><rect x="303" y="637" width="13" height="13" fill="#554a49"/><rect x="315" y="637" width="13" height="13" fill="#544949"/><rect x="327" y="637" width="13" height="13" fill="#544949"/><rect x="339" y="637" width="13" height="13" fill="#544a4a"/><rect x="351" y="637" width="13" height="13" fill="#554b4b"/><rect x="363" y="637" width="13" height="13" fill="#554a4a"/><rect x="375" y="637" width="13" height="13" fill="#524747"/><rect x="387" y="637" width="13" height="13" fill="#4d4242"/><rect x="399" y="637" width="13" height="13" fill="#4a3e3e"/><rect x="411" y="637" width="13" height="13" fill="#4c4040"/><rect x="423" y="637" width="13" height="13" fill="#4f4444"/><rect x="435" y="637" width="13" height="13" fill="#514646"/><rect x="447" y="637" width="13" height="13" fill="#514747"/><rect x="459" y="637" width="13" height="13" fill="#514746"/><rect x="471" y="637" width="13" height="13" fill="#504645"/><rect x="483" y="637" width="13" height="13" fill="#4e4444"/><rect x="495" y="637" width="13" height="13" fill="#4d4343"/><rect x="507" y="637" width="13" height="13" fill="#4b4141"/><rect x="519" y="637" width="13" height="13" fill="#493f3f"/><rect x="531" y="637" width="13" height="13" fill="#483e3e"/><rect x="543" y="637" width="13" height="13" fill="#483e3e"/><rect x="555" y="637" width="13" height="13" fill="#493f3f"/><rect x="567" y="637" width="13" height="13" fill="#4a4040"/><rect x="579" y="637" width="13" height="13" fill="#4a4040"/><rect x="591" y="637" width="13" height="13" fill="#4a4040"/><rect x="603" y="637" width="13" height="13" fill="#4a4040"/><rect x="615" y="637" width="13" height="13" fill="#4a4040"/><rect x="627" y="637" width="13" height="13" fill="#4a4040"/><rect x="639" y="637" width="13" height="13" fill="#4a4040"/><rect x="651" y="637" width="13" height="13" fill="#494040"/><rect x="663" y="637" width="13" height="13" fill="#494040"/><rect x="675" y="637" width="13" height="13" fill="#493f40"/><rect x="687" y="637" width="13" height="13" fill="#493f40"/><rect x="699" y="637" width="13" height="13" fill="#493f3f"/><rect x="711" y="637" width="13" height="13" fill="#493f3f"/><rect x="723" y="637" width="13" height="13" fill="#493f3f"/><rect x="735" y="637" width="13" height="13" fill="#483f3f"/><rect x="747" y="637" width="13" height="13" fill="#483f3f"/><rect x="759" y="637" width="13" height="13" fill="#483f3f"/><rect x="771" y="637" width="13" height="13" fill="#483f3f"/><rect x="783" y="637" width="13" height="13" fill="#483f3f"/><rect x="795" y="637" width="13" height="13" fill="#483f3f"/><rect x="195" y="649" width="13" height="13" fill="#574c4b"/><rect x="207" y="649" width="13" height="13" fill="#574c4b"/><rect x="219" y="649" width="13" height="13" fill="#594e4d"/><rect x="231" y="649" width="13" height="13" fill="#584d4c"/><rect x="243" y="649" width="13" height="13" fill="#554a49"/><rect x="255" y="649" width="13" height="13" fill="#544948"/><rect x="267" y="649" width="13" height="13" fill="#544948"/><rect x="279" y="649" width="13" height="13" fill="#554a49"/><rect x="291" y="649" width="13" height="13" fill="#574b4a"/><rect x="303" y="649" width="13" height="13" fill="#564b4a"/><rect x="315" y="649" width="13" height="13" fill="#564a4a"/><rect x="327" y="649" width="13" height="13" fill="#554a4a"/><rect x="339" y="649" width="13" height="13" fill="#554b4a"/><rect x="351" y="649" width="13" height="13" fill="#554b4a"/><rect x="363" y="649" width="13" height="13" fill="#554a49"/><rect x="375" y="649" width="13" height="13" fill="#524747"/><rect x="387" y="649" width="13" height="13" fill="#4e4343"/><rect x="399" y="649" width="13" height="13" fill="#4c4040"/><rect x="411" y="649" width="13" height="13" fill="#4d4141"/><rect x="423" y="649" width="13" height="13" fill="#4f4444"/><rect x="435" y="649" width="13" height="13" fill="#514646"/><rect x="447" y="649" width="13" height="13" fill="#514747"/><rect x="459" y="649" width="13" height="13" fill="#514746"/><rect x="471" y="649" width="13" height="13" fill="#504646"/><rect x="483" y="649" width="13" height="13" fill="#4f4545"/><rect x="495" y="649" width="13" height="13" fill="#4e4443"/><rect x="507" y="649" width="13" height="13" fill="#4c4242"/><rect x="519" y="649" width="13" height="13" fill="#4b4141"/><rect x="531" y="649" width="13" height="13" fill="#4a4040"/><rect x="543" y="649" width="13" height="13" fill="#4a4040"/><rect x="555" y="649" width="13" height="13" fill="#4a4040"/><rect x="567" y="649" width="13" height="13" fill="#4a4040"/><rect x="579" y="649" width="13" height="13" fill="#4b4141"/><rect x="591" y="649" width="13" height="13" fill="#4b4141"/><rect x="603" y="649" width="13" height="13" fill="#4b4141"/><rect x="615" y="649" width="13" height="13" fill="#4b4141"/><rect x="627" y="649" width="13" height="13" fill="#4a4141"/><rect x="639" y="649" width="13" height="13" fill="#4a4141"/><rect x="651" y="649" width="13" height="13" fill="#4a4040"/><rect x="663" y="649" width="13" height="13" fill="#4a4040"/><rect x="675" y="649" width="13" height="13" fill="#4a4040"/><rect x="687" y="649" width="13" height="13" fill="#494040"/><rect x="699" y="649" width="13" height="13" fill="#494040"/><rect x="711" y="649" width="13" height="13" fill="#494040"/><rect x="723" y="649" width="13" height="13" fill="#494040"/><rect x="735" y="649" width="13" height="13" fill="#493f40"/><rect x="747" y="649" width="13" height="13" fill="#493f40"/><rect x="759" y="649" width="13" height="13" fill="#493f40"/><rect x="771" y="649" width="13" height="13" fill="#493f40"/><rect x="783" y="649" width="13" height="13" fill="#493f40"/><rect x="795" y="649" width="13" height="13" fill="#493f40"/><rect x="195" y="661" width="13" height="13" fill="#574c4b"/><rect x="207" y="661" width="13" height="13" fill="#574c4b"/><rect x="219" y="661" width="13" height="13" fill="#574c4b"/><rect x="231" y="661" width="13" height="13" fill="#574c4b"/><rect x="243" y="661" width="13" height="13" fill="#564b4a"/><rect x="255" y="661" width="13" height="13" fill="#554a49"/><rect x="267" y="661" width="13" height="13" fill="#554a49"/><rect x="279" y="661" width="13" height="13" fill="#564a49"/><rect x="291" y="661" width="13" height="13" fill="#574b4a"/><rect x="303" y="661" width="13" height="13" fill="#564b4a"/><rect x="315" y="661" width="13" height="13" fill="#564b4a"/><rect x="327" y="661" width="13" height="13" fill="#564b4a"/><rect x="339" y="661" width="13" height="13" fill="#564b4a"/><rect x="351" y="661" width="13" height="13" fill="#554b4a"/><rect x="363" y="661" width="13" height="13" fill="#554a49"/><rect x="375" y="661" width="13" height="13" fill="#534848"/><rect x="387" y="661" width="13" height="13" fill="#514545"/><rect x="399" y="661" width="13" height="13" fill="#4f4444"/><rect x="411" y="661" width="13" height="13" fill="#4f4444"/><rect x="423" y="661" width="13" height="13" fill="#514645"/><rect x="435" y="661" width="13" height="13" fill="#514746"/><rect x="447" y="661" width="13" height="13" fill="#524747"/><rect x="459" y="661" width="13" height="13" fill="#514747"/><rect x="471" y="661" width="13" height="13" fill="#514646"/><rect x="483" y="661" width="13" height="13" fill="#504545"/><rect x="495" y="661" width="13" height="13" fill="#4e4444"/><rect x="507" y="661" width="13" height="13" fill="#4d4343"/><rect x="519" y="661" width="13" height="13" fill="#4c4242"/><rect x="531" y="661" width="13" height="13" fill="#4b4141"/><rect x="543" y="661" width="13" height="13" fill="#4b4141"/><rect x="555" y="661" width="13" height="13" fill="#4b4141"/><rect x="567" y="661" width="13" height="13" fill="#4b4141"/><rect x="579" y="661" width="13" height="13" fill="#4b4141"/><rect x="591" y="661" width="13" height="13" fill="#4b4241"/><rect x="603" y="661" width="13" height="13" fill="#4b4141"/><rect x="615" y="661" width="13" height="13" fill="#4b4141"/><rect x="627" y="661" width="13" height="13" fill="#4b4141"/><rect x="639" y="661" width="13" height="13" fill="#4b4141"/><rect x="651" y="661" width="13" height="13" fill="#4b4141"/><rect x="663" y="661" width="13" height="13" fill="#4a4141"/><rect x="675" y="661" width="13" height="13" fill="#4a4141"/><rect x="687" y="661" width="13" height="13" fill="#4a4041"/><rect x="699" y="661" width="13" height="13" fill="#4a4041"/><rect x="711" y="661" width="13" height="13" fill="#4a4040"/><rect x="723" y="661" width="13" height="13" fill="#4a4040"/><rect x="735" y="661" width="13" height="13" fill="#4a4040"/><rect x="747" y="661" width="13" height="13" fill="#494040"/><rect x="759" y="661" width="13" height="13" fill="#494040"/><rect x="771" y="661" width="13" height="13" fill="#494040"/><rect x="783" y="661" width="13" height="13" fill="#494040"/><rect x="795" y="661" width="13" height="13" fill="#494040"/><rect x="195" y="673" width="13" height="13" fill="#574c4b"/><rect x="207" y="673" width="13" height="13" fill="#574c4b"/><rect x="219" y="673" width="13" height="13" fill="#574c4b"/><rect x="231" y="673" width="13" height="13" fill="#564b4a"/><rect x="243" y="673" width="13" height="13" fill="#564b4a"/><rect x="255" y="673" width="13" height="13" fill="#554a4a"/><rect x="267" y="673" width="13" height="13" fill="#564a4a"/><rect x="279" y="673" width="13" height="13" fill="#564b4a"/><rect x="291" y="673" width="13" height="13" fill="#564b4a"/><rect x="303" y="673" width="13" height="13" fill="#564b4a"/><rect x="315" y="673" width="13" height="13" fill="#564b4a"/><rect x="327" y="673" width="13" height="13" fill="#564b4a"/><rect x="339" y="673" width="13" height="13" fill="#564b4b"/><rect x="351" y="673" width="13" height="13" fill="#564b4a"/><rect x="363" y="673" width="13" height="13" fill="#554a4a"/><rect x="375" y="673" width="13" height="13" fill="#544949"/><rect x="387" y="673" width="13" height="13" fill="#524847"/><rect x="399" y="673" width="13" height="13" fill="#524746"/><rect x="411" y="673" width="13" height="13" fill="#514646"/><rect x="423" y="673" width="13" height="13" fill="#524747"/><rect x="435" y="673" width="13" height="13" fill="#524747"/><rect x="447" y="673" width="13" height="13" fill="#524847"/><rect x="459" y="673" width="13" height="13" fill="#524747"/><rect x="471" y="673" width="13" height="13" fill="#514747"/><rect x="483" y="673" width="13" height="13" fill="#504646"/><rect x="495" y="673" width="13" height="13" fill="#4f4545"/><rect x="507" y="673" width="13" height="13" fill="#4e4444"/><rect x="519" y="673" width="13" height="13" fill="#4d4343"/><rect x="531" y="673" width="13" height="13" fill="#4d4343"/><rect x="543" y="673" width="13" height="13" fill="#4c4242"/><rect x="555" y="673" width="13" height="13" fill="#4c4242"/><rect x="567" y="673" width="13" height="13" fill="#4c4242"/><rect x="579" y="673" width="13" height="13" fill="#4c4242"/><rect x="591" y="673" width="13" height="13" fill="#4c4242"/><rect x="603" y="673" width="13" height="13" fill="#4c4242"/><rect x="615" y="673" width="13" height="13" fill="#4c4242"/><rect x="627" y="673" width="13" height="13" fill="#4c4242"/><rect x="639" y="673" width="13" height="13" fill="#4b4242"/><rect x="651" y="673" width="13" height="13" fill="#4b4142"/><rect x="663" y="673" width="13" height="13" fill="#4b4141"/><rect x="675" y="673" width="13" height="13" fill="#4b4141"/><rect x="687" y="673" width="13" height="13" fill="#4b4141"/><rect x="699" y="673" width="13" height="13" fill="#4a4141"/><rect x="711" y="673" width="13" height="13" fill="#4a4141"/><rect x="723" y="673" width="13" height="13" fill="#4a4141"/><rect x="735" y="673" width="13" height="13" fill="#4a4041"/><rect x="747" y="673" width="13" height="13" fill="#4a4041"/><rect x="759" y="673" width="13" height="13" fill="#4a4041"/><rect x="771" y="673" width="13" height="13" fill="#4a4041"/><rect x="783" y="673" width="13" height="13" fill="#4a4041"/><rect x="795" y="673" width="13" height="13" fill="#4a4041"/></g></g>
<g clip-path="url(#clin)"><g filter="url(#blr2)"><rect x="335" y="330" width="11" height="11" fill="#c8ab93"/><rect x="345" y="330" width="11" height="11" fill="#c8ab93"/><rect x="355" y="330" width="11" height="11" fill="#c8ab93"/><rect x="365" y="330" width="11" height="11" fill="#c8ab93"/><rect x="375" y="330" width="11" height="11" fill="#c8aa93"/><rect x="385" y="330" width="11" height="11" fill="#c8aa93"/><rect x="395" y="330" width="11" height="11" fill="#c8aa93"/><rect x="405" y="330" width="11" height="11" fill="#c8aa92"/><rect x="415" y="330" width="11" height="11" fill="#c7aa92"/><rect x="425" y="330" width="11" height="11" fill="#c7a992"/><rect x="435" y="330" width="11" height="11" fill="#c6a991"/><rect x="445" y="330" width="11" height="11" fill="#c6a891"/><rect x="455" y="330" width="11" height="11" fill="#c5a890"/><rect x="465" y="330" width="11" height="11" fill="#c5a78f"/><rect x="475" y="330" width="11" height="11" fill="#c4a68e"/><rect x="485" y="330" width="11" height="11" fill="#c3a58e"/><rect x="495" y="330" width="11" height="11" fill="#c2a48d"/><rect x="505" y="330" width="11" height="11" fill="#c1a38b"/><rect x="515" y="330" width="11" height="11" fill="#c0a28a"/><rect x="525" y="330" width="11" height="11" fill="#bfa189"/><rect x="535" y="330" width="11" height="11" fill="#bd9f87"/><rect x="545" y="330" width="11" height="11" fill="#bc9e86"/><rect x="555" y="330" width="11" height="11" fill="#ba9c84"/><rect x="565" y="330" width="11" height="11" fill="#b99b83"/><rect x="575" y="330" width="11" height="11" fill="#b79981"/><rect x="585" y="330" width="11" height="11" fill="#b69880"/><rect x="595" y="330" width="11" height="11" fill="#b4967e"/><rect x="605" y="330" width="11" height="11" fill="#b2947d"/><rect x="615" y="330" width="11" height="11" fill="#b0937b"/><rect x="625" y="330" width="11" height="11" fill="#ae917a"/><rect x="635" y="330" width="11" height="11" fill="#ac8f78"/><rect x="645" y="330" width="11" height="11" fill="#aa8e77"/><rect x="655" y="330" width="11" height="11" fill="#a88c76"/><rect x="665" y="330" width="11" height="11" fill="#a68a75"/><rect x="675" y="330" width="11" height="11" fill="#a48974"/><rect x="685" y="330" width="11" height="11" fill="#a38874"/><rect x="695" y="330" width="11" height="11" fill="#a28773"/><rect x="705" y="330" width="11" height="11" fill="#a18773"/><rect x="715" y="330" width="11" height="11" fill="#a18773"/><rect x="725" y="330" width="11" height="11" fill="#a18774"/><rect x="735" y="330" width="11" height="11" fill="#a18875"/><rect x="745" y="330" width="11" height="11" fill="#a28976"/><rect x="755" y="330" width="11" height="11" fill="#a28977"/><rect x="765" y="330" width="11" height="11" fill="#a38976"/><rect x="335" y="340" width="11" height="11" fill="#c9ab94"/><rect x="345" y="340" width="11" height="11" fill="#c9ab94"/><rect x="355" y="340" width="11" height="11" fill="#c9ab94"/><rect x="365" y="340" width="11" height="11" fill="#c9ab94"/><rect x="375" y="340" width="11" height="11" fill="#c9ab94"/><rect x="385" y="340" width="11" height="11" fill="#c9ab93"/><rect x="395" y="340" width="11" height="11" fill="#c9ab93"/><rect x="405" y="340" width="11" height="11" fill="#c8ab93"/><rect x="415" y="340" width="11" height="11" fill="#c8aa93"/><rect x="425" y="340" width="11" height="11" fill="#c8aa92"/><rect x="435" y="340" width="11" height="11" fill="#c7aa92"/><rect x="445" y="340" width="11" height="11" fill="#c7a992"/><rect x="455" y="340" width="11" height="11" fill="#c6a991"/><rect x="465" y="340" width="11" height="11" fill="#c6a890"/><rect x="475" y="340" width="11" height="11" fill="#c5a78f"/><rect x="485" y="340" width="11" height="11" fill="#c4a68e"/><rect x="495" y="340" width="11" height="11" fill="#c3a58d"/><rect x="505" y="340" width="11" height="11" fill="#c2a48c"/><rect x="515" y="340" width="11" height="11" fill="#c1a38b"/><rect x="525" y="340" width="11" height="11" fill="#c0a28a"/><rect x="535" y="340" width="11" height="11" fill="#bea088"/><rect x="545" y="340" width="11" height="11" fill="#bd9f87"/><rect x="555" y="340" width="11" height="11" fill="#bb9d85"/><rect x="565" y="340" width="11" height="11" fill="#ba9b83"/><rect x="575" y="340" width="11" height="11" fill="#b89a82"/><rect x="585" y="340" width="11" height="11" fill="#b69880"/><rect x="595" y="340" width="11" height="11" fill="#b4967e"/><rect x="605" y="340" width="11" height="11" fill="#b2947c"/><rect x="615" y="340" width="11" height="11" fill="#b0927b"/><rect x="625" y="340" width="11" height="11" fill="#ae9179"/><rect x="635" y="340" width="11" height="11" fill="#ac8f78"/><rect x="645" y="340" width="11" height="11" fill="#aa8d76"/><rect x="655" y="340" width="11" height="11" fill="#a88b75"/><rect x="665" y="340" width="11" height="11" fill="#a58a74"/><rect x="675" y="340" width="11" height="11" fill="#a38873"/><rect x="685" y="340" width="11" height="11" fill="#a18773"/><rect x="695" y="340" width="11" height="11" fill="#a08773"/><rect x="705" y="340" width="11" height="11" fill="#a08672"/><rect x="715" y="340" width="11" height="11" fill="#9f8672"/><rect x="725" y="340" width="11" height="11" fill="#9f8673"/><rect x="735" y="340" width="11" height="11" fill="#a08775"/><rect x="745" y="340" width="11" height="11" fill="#a28a78"/><rect x="755" y="340" width="11" height="11" fill="#a38b78"/><rect x="765" y="340" width="11" height="11" fill="#a38a77"/><rect x="335" y="350" width="11" height="11" fill="#caac94"/><rect x="345" y="350" width="11" height="11" fill="#caac94"/><rect x="355" y="350" width="11" height="11" fill="#caac94"/><rect x="365" y="350" width="11" height="11" fill="#caac94"/><rect x="375" y="350" width="11" height="11" fill="#caac94"/><rect x="385" y="350" width="11" height="11" fill="#caac94"/><rect x="395" y="350" width="11" height="11" fill="#c9ac94"/><rect x="405" y="350" width="11" height="11" fill="#c9ac94"/><rect x="415" y="350" width="11" height="11" fill="#c9ab94"/><rect x="425" y="350" width="11" height="11" fill="#c9ab93"/><rect x="435" y="350" width="11" height="11" fill="#c8ab93"/><rect x="445" y="350" width="11" height="11" fill="#c8aa92"/><rect x="455" y="350" width="11" height="11" fill="#c7aa92"/><rect x="465" y="350" width="11" height="11" fill="#c7a991"/><rect x="475" y="350" width="11" height="11" fill="#c6a890"/><rect x="485" y="350" width="11" height="11" fill="#c5a78f"/><rect x="495" y="350" width="11" height="11" fill="#c4a68e"/><rect x="505" y="350" width="11" height="11" fill="#c3a58d"/><rect x="515" y="350" width="11" height="11" fill="#c2a48c"/><rect x="525" y="350" width="11" height="11" fill="#c1a38a"/><rect x="535" y="350" width="11" height="11" fill="#bfa189"/><rect x="545" y="350" width="11" height="11" fill="#be9f87"/><rect x="555" y="350" width="11" height="11" fill="#bc9e85"/><rect x="565" y="350" width="11" height="11" fill="#ba9c84"/><rect x="575" y="350" width="11" height="11" fill="#b89a82"/><rect x="585" y="350" width="11" height="11" fill="#b79880"/><rect x="595" y="350" width="11" height="11" fill="#b5967e"/><rect x="605" y="350" width="11" height="11" fill="#b3947c"/><rect x="615" y="350" width="11" height="11" fill="#b1937a"/><rect x="625" y="350" width="11" height="11" fill="#af9179"/><rect x="635" y="350" width="11" height="11" fill="#ad8f77"/><rect x="645" y="350" width="11" height="11" fill="#aa8d76"/><rect x="655" y="350" width="11" height="11" fill="#a88b75"/><rect x="665" y="350" width="11" height="11" fill="#a58973"/><rect x="675" y="350" width="11" height="11" fill="#a28773"/><rect x="685" y="350" width="11" height="11" fill="#a08773"/><rect x="695" y="350" width="11" height="11" fill="#9f8673"/><rect x="705" y="350" width="11" height="11" fill="#9e8572"/><rect x="715" y="350" width="11" height="11" fill="#9e8572"/><rect x="725" y="350" width="11" height="11" fill="#9e8572"/><rect x="735" y="350" width="11" height="11" fill="#9d8573"/><rect x="745" y="350" width="11" height="11" fill="#a28a78"/><rect x="755" y="350" width="11" height="11" fill="#a38b79"/><rect x="765" y="350" width="11" height="11" fill="#a28977"/><rect x="335" y="360" width="11" height="11" fill="#caac95"/><rect x="345" y="360" width="11" height="11" fill="#caac95"/><rect x="355" y="360" width="11" height="11" fill="#caad95"/><rect x="365" y="360" width="11" height="11" fill="#caad95"/><rect x="375" y="360" width="11" height="11" fill="#caad95"/><rect x="385" y="360" width="11" height="11" fill="#caad95"/><rect x="395" y="360" width="11" height="11" fill="#caad95"/><rect x="405" y="360" width="11" height="11" fill="#caac95"/><rect x="415" y="360" width="11" height="11" fill="#caac95"/><rect x="425" y="360" width="11" height="11" fill="#caac94"/><rect x="435" y="360" width="11" height="11" fill="#c9ac94"/><rect x="445" y="360" width="11" height="11" fill="#c9ab94"/><rect x="455" y="360" width="11" height="11" fill="#c8ab93"/><rect x="465" y="360" width="11" height="11" fill="#c8aa92"/><rect x="475" y="360" width="11" height="11" fill="#c7a992"/><rect x="485" y="360" width="11" height="11" fill="#c6a891"/><rect x="495" y="360" width="11" height="11" fill="#c5a790"/><rect x="505" y="360" width="11" height="11" fill="#c4a68e"/><rect x="515" y="360" width="11" height="11" fill="#c3a58d"/><rect x="525" y="360" width="11" height="11" fill="#c2a48b"/><rect x="535" y="360" width="11" height="11" fill="#c0a28a"/><rect x="545" y="360" width="11" height="11" fill="#bfa088"/><rect x="555" y="360" width="11" height="11" fill="#bd9f86"/><rect x="565" y="360" width="11" height="11" fill="#bb9d84"/><rect x="575" y="360" width="11" height="11" fill="#b99b82"/><rect x="585" y="360" width="11" height="11" fill="#b79980"/><rect x="595" y="360" width="11" height="11" fill="#b5977e"/><rect x="605" y="360" width="11" height="11" fill="#b3957c"/><rect x="615" y="360" width="11" height="11" fill="#b1937a"/><rect x="625" y="360" width="11" height="11" fill="#af9179"/><rect x="635" y="360" width="11" height="11" fill="#ad8f77"/><rect x="645" y="360" width="11" height="11" fill="#ab8d76"/><rect x="655" y="360" width="11" height="11" fill="#a88b74"/><rect x="665" y="360" width="11" height="11" fill="#a58873"/><rect x="675" y="360" width="11" height="11" fill="#a18672"/><rect x="685" y="360" width="11" height="11" fill="#9f8774"/><rect x="695" y="360" width="11" height="11" fill="#9f8976"/><rect x="705" y="360" width="11" height="11" fill="#9d8572"/><rect x="715" y="360" width="11" height="11" fill="#9c8370"/><rect x="725" y="360" width="11" height="11" fill="#9d8471"/><rect x="735" y="360" width="11" height="11" fill="#9d8472"/><rect x="745" y="360" width="11" height="11" fill="#9f8674"/><rect x="755" y="360" width="11" height="11" fill="#a18876"/><rect x="765" y="360" width="11" height="11" fill="#a18875"/><rect x="335" y="370" width="11" height="11" fill="#cbad95"/><rect x="345" y="370" width="11" height="11" fill="#cbad95"/><rect x="355" y="370" width="11" height="11" fill="#cbad96"/><rect x="365" y="370" width="11" height="11" fill="#cbad96"/><rect x="375" y="370" width="11" height="11" fill="#cbad96"/><rect x="385" y="370" width="11" height="11" fill="#cbad96"/><rect x="395" y="370" width="11" height="11" fill="#cbad96"/><rect x="405" y="370" width="11" height="11" fill="#cbad96"/><rect x="415" y="370" width="11" height="11" fill="#cbad96"/><rect x="425" y="370" width="11" height="11" fill="#cbad95"/><rect x="435" y="370" width="11" height="11" fill="#caad95"/><rect x="445" y="370" width="11" height="11" fill="#caac95"/><rect x="455" y="370" width="11" height="11" fill="#c9ac94"/><rect x="465" y="370" width="11" height="11" fill="#c9ab94"/><rect x="475" y="370" width="11" height="11" fill="#c8ab93"/><rect x="485" y="370" width="11" height="11" fill="#c7aa92"/><rect x="495" y="370" width="11" height="11" fill="#c6a991"/><rect x="505" y="370" width="11" height="11" fill="#c5a890"/><rect x="515" y="370" width="11" height="11" fill="#c4a68e"/><rect x="525" y="370" width="11" height="11" fill="#c3a58d"/><rect x="535" y="370" width="11" height="11" fill="#c1a38b"/><rect x="545" y="370" width="11" height="11" fill="#c0a189"/><rect x="555" y="370" width="11" height="11" fill="#bea087"/><rect x="565" y="370" width="11" height="11" fill="#bc9e85"/><rect x="575" y="370" width="11" height="11" fill="#ba9c83"/><rect x="585" y="370" width="11" height="11" fill="#b89981"/><rect x="595" y="370" width="11" height="11" fill="#b6977e"/><rect x="605" y="370" width="11" height="11" fill="#b4957c"/><rect x="615" y="370" width="11" height="11" fill="#b2937a"/><rect x="625" y="370" width="11" height="11" fill="#b09178"/><rect x="635" y="370" width="11" height="11" fill="#ae9077"/><rect x="645" y="370" width="11" height="11" fill="#ad8e76"/><rect x="655" y="370" width="11" height="11" fill="#a98c74"/><rect x="665" y="370" width="11" height="11" fill="#a58872"/><rect x="675" y="370" width="11" height="11" fill="#a08570"/><rect x="685" y="370" width="11" height="11" fill="#9d8471"/><rect x="695" y="370" width="11" height="11" fill="#9e8775"/><rect x="705" y="370" width="11" height="11" fill="#997f6d"/><rect x="715" y="370" width="11" height="11" fill="#997f6c"/><rect x="725" y="370" width="11" height="11" fill="#9b816e"/><rect x="735" y="370" width="11" height="11" fill="#9d8370"/><rect x="745" y="370" width="11" height="11" fill="#9e8571"/><rect x="755" y="370" width="11" height="11" fill="#a08672"/><rect x="765" y="370" width="11" height="11" fill="#a18773"/><rect x="335" y="380" width="11" height="11" fill="#cbad96"/><rect x="345" y="380" width="11" height="11" fill="#ccae96"/><rect x="355" y="380" width="11" height="11" fill="#ccae96"/><rect x="365" y="380" width="11" height="11" fill="#ccae96"/><rect x="375" y="380" width="11" height="11" fill="#ccae96"/><rect x="385" y="380" width="11" height="11" fill="#ccae97"/><rect x="395" y="380" width="11" height="11" fill="#ccae97"/><rect x="405" y="380" width="11" height="11" fill="#ccae97"/><rect x="415" y="380" width="11" height="11" fill="#ccae97"/><rect x="425" y="380" width="11" height="11" fill="#ccae96"/><rect x="435" y="380" width="11" height="11" fill="#cbae96"/><rect x="445" y="380" width="11" height="11" fill="#cbae96"/><rect x="455" y="380" width="11" height="11" fill="#cbad95"/><rect x="465" y="380" width="11" height="11" fill="#caad95"/><rect x="475" y="380" width="11" height="11" fill="#caac94"/><rect x="485" y="380" width="11" height="11" fill="#c9ab93"/><rect x="495" y="380" width="11" height="11" fill="#c8aa92"/><rect x="505" y="380" width="11" height="11" fill="#c7a991"/><rect x="515" y="380" width="11" height="11" fill="#c6a890"/><rect x="525" y="380" width="11" height="11" fill="#c4a68e"/><rect x="535" y="380" width="11" height="11" fill="#c3a48c"/><rect x="545" y="380" width="11" height="11" fill="#c1a38a"/><rect x="555" y="380" width="11" height="11" fill="#bfa188"/><rect x="565" y="380" width="11" height="11" fill="#bd9f86"/><rect x="575" y="380" width="11" height="11" fill="#bb9d83"/><rect x="585" y="380" width="11" height="11" fill="#b99a81"/><rect x="595" y="380" width="11" height="11" fill="#b7987f"/><rect x="605" y="380" width="11" height="11" fill="#b5967d"/><rect x="615" y="380" width="11" height="11" fill="#b3947a"/><rect x="625" y="380" width="11" height="11" fill="#b19278"/><rect x="635" y="380" width="11" height="11" fill="#b09177"/><rect x="645" y="380" width="11" height="11" fill="#b09177"/><rect x="655" y="380" width="11" height="11" fill="#ac8d75"/><rect x="665" y="380" width="11" height="11" fill="#a68871"/><rect x="675" y="380" width="11" height="11" fill="#a0836e"/><rect x="685" y="380" width="11" height="11" fill="#997e6b"/><rect x="695" y="380" width="11" height="11" fill="#8e7362"/><rect x="705" y="380" width="11" height="11" fill="#8b6f5e"/><rect x="715" y="380" width="11" height="11" fill="#957966"/><rect x="725" y="380" width="11" height="11" fill="#997d69"/><rect x="735" y="380" width="11" height="11" fill="#9b7f6b"/><rect x="745" y="380" width="11" height="11" fill="#9d826e"/><rect x="755" y="380" width="11" height="11" fill="#9f8470"/><rect x="765" y="380" width="11" height="11" fill="#a08571"/><rect x="335" y="390" width="11" height="11" fill="#ccae96"/><rect x="345" y="390" width="11" height="11" fill="#ccae96"/><rect x="355" y="390" width="11" height="11" fill="#ccae97"/><rect x="365" y="390" width="11" height="11" fill="#cdaf97"/><rect x="375" y="390" width="11" height="11" fill="#cdaf97"/><rect x="385" y="390" width="11" height="11" fill="#cdaf97"/><rect x="395" y="390" width="11" height="11" fill="#cdaf98"/><rect x="405" y="390" width="11" height="11" fill="#cdaf98"/><rect x="415" y="390" width="11" height="11" fill="#cdaf98"/><rect x="425" y="390" width="11" height="11" fill="#cdaf98"/><rect x="435" y="390" width="11" height="11" fill="#cdaf98"/><rect x="445" y="390" width="11" height="11" fill="#ccaf97"/><rect x="455" y="390" width="11" height="11" fill="#ccae97"/><rect x="465" y="390" width="11" height="11" fill="#ccae96"/><rect x="475" y="390" width="11" height="11" fill="#cbad96"/><rect x="485" y="390" width="11" height="11" fill="#caad95"/><rect x="495" y="390" width="11" height="11" fill="#c9ac94"/><rect x="505" y="390" width="11" height="11" fill="#c8ab93"/><rect x="515" y="390" width="11" height="11" fill="#c7a991"/><rect x="525" y="390" width="11" height="11" fill="#c6a88f"/><rect x="535" y="390" width="11" height="11" fill="#c4a68e"/><rect x="545" y="390" width="11" height="11" fill="#c3a48b"/><rect x="555" y="390" width="11" height="11" fill="#c1a289"/><rect x="565" y="390" width="11" height="11" fill="#bfa087"/><rect x="575" y="390" width="11" height="11" fill="#bd9e84"/><rect x="585" y="390" width="11" height="11" fill="#bb9b82"/><rect x="595" y="390" width="11" height="11" fill="#b8997f"/><rect x="605" y="390" width="11" height="11" fill="#b6977d"/><rect x="615" y="390" width="11" height="11" fill="#b4957b"/><rect x="625" y="390" width="11" height="11" fill="#b29279"/><rect x="635" y="390" width="11" height="11" fill="#b19278"/><rect x="645" y="390" width="11" height="11" fill="#b39479"/><rect x="655" y="390" width="11" height="11" fill="#ad8e75"/><rect x="665" y="390" width="11" height="11" fill="#a5876f"/><rect x="675" y="390" width="11" height="11" fill="#a0826c"/><rect x="685" y="390" width="11" height="11" fill="#997d68"/><rect x="695" y="390" width="11" height="11" fill="#907462"/><rect x="705" y="390" width="11" height="11" fill="#8e7260"/><rect x="715" y="390" width="11" height="11" fill="#957864"/><rect x="725" y="390" width="11" height="11" fill="#967963"/><rect x="735" y="390" width="11" height="11" fill="#987b65"/><rect x="745" y="390" width="11" height="11" fill="#9b7f6a"/><rect x="755" y="390" width="11" height="11" fill="#9e826d"/><rect x="765" y="390" width="11" height="11" fill="#a0846f"/><rect x="335" y="400" width="11" height="11" fill="#ccae97"/><rect x="345" y="400" width="11" height="11" fill="#cdaf97"/><rect x="355" y="400" width="11" height="11" fill="#cdaf97"/><rect x="365" y="400" width="11" height="11" fill="#cdaf98"/><rect x="375" y="400" width="11" height="11" fill="#cdb098"/><rect x="385" y="400" width="11" height="11" fill="#ceb098"/><rect x="395" y="400" width="11" height="11" fill="#ceb098"/><rect x="405" y="400" width="11" height="11" fill="#ceb099"/><rect x="415" y="400" width="11" height="11" fill="#ceb099"/><rect x="425" y="400" width="11" height="11" fill="#ceb099"/><rect x="435" y="400" width="11" height="11" fill="#ceb099"/><rect x="445" y="400" width="11" height="11" fill="#ceb099"/><rect x="455" y="400" width="11" height="11" fill="#cdb098"/><rect x="465" y="400" width="11" height="11" fill="#cdb098"/><rect x="475" y="400" width="11" height="11" fill="#cdaf97"/><rect x="485" y="400" width="11" height="11" fill="#ccae97"/><rect x="495" y="400" width="11" height="11" fill="#cbad96"/><rect x="505" y="400" width="11" height="11" fill="#caac94"/><rect x="515" y="400" width="11" height="11" fill="#c9ab93"/><rect x="525" y="400" width="11" height="11" fill="#c8a991"/><rect x="535" y="400" width="11" height="11" fill="#c6a88f"/><rect x="545" y="400" width="11" height="11" fill="#c4a68d"/><rect x="555" y="400" width="11" height="11" fill="#c2a48b"/><rect x="565" y="400" width="11" height="11" fill="#c0a188"/><rect x="575" y="400" width="11" height="11" fill="#be9f85"/><rect x="585" y="400" width="11" height="11" fill="#bc9d83"/><rect x="595" y="400" width="11" height="11" fill="#ba9a80"/><rect x="605" y="400" width="11" height="11" fill="#b8987d"/><rect x="615" y="400" width="11" height="11" fill="#b7967b"/><rect x="625" y="400" width="11" height="11" fill="#b39379"/><rect x="635" y="400" width="11" height="11" fill="#af9076"/><rect x="645" y="400" width="11" height="11" fill="#ac8d74"/><rect x="655" y="400" width="11" height="11" fill="#a5866e"/><rect x="665" y="400" width="11" height="11" fill="#a2836c"/><rect x="675" y="400" width="11" height="11" fill="#9e7f68"/><rect x="685" y="400" width="11" height="11" fill="#9b7e68"/><rect x="695" y="400" width="11" height="11" fill="#987b66"/><rect x="705" y="400" width="11" height="11" fill="#977a65"/><rect x="715" y="400" width="11" height="11" fill="#967963"/><rect x="725" y="400" width="11" height="11" fill="#94765f"/><rect x="735" y="400" width="11" height="11" fill="#967962"/><rect x="745" y="400" width="11" height="11" fill="#9a7e68"/><rect x="755" y="400" width="11" height="11" fill="#9d816c"/><rect x="765" y="400" width="11" height="11" fill="#a0846e"/><rect x="335" y="410" width="11" height="11" fill="#cdaf97"/><rect x="345" y="410" width="11" height="11" fill="#cdaf97"/><rect x="355" y="410" width="11" height="11" fill="#ceb098"/><rect x="365" y="410" width="11" height="11" fill="#ceb098"/><rect x="375" y="410" width="11" height="11" fill="#ceb099"/><rect x="385" y="410" width="11" height="11" fill="#cfb199"/><rect x="395" y="410" width="11" height="11" fill="#cfb199"/><rect x="405" y="410" width="11" height="11" fill="#cfb19a"/><rect x="415" y="410" width="11" height="11" fill="#cfb19a"/><rect x="425" y="410" width="11" height="11" fill="#cfb29a"/><rect x="435" y="410" width="11" height="11" fill="#cfb29a"/><rect x="445" y="410" width="11" height="11" fill="#cfb29a"/><rect x="455" y="410" width="11" height="11" fill="#cfb19a"/><rect x="465" y="410" width="11" height="11" fill="#cfb19a"/><rect x="475" y="410" width="11" height="11" fill="#ceb199"/><rect x="485" y="410" width="11" height="11" fill="#ceb098"/><rect x="495" y="410" width="11" height="11" fill="#cdaf98"/><rect x="505" y="410" width="11" height="11" fill="#ccae96"/><rect x="515" y="410" width="11" height="11" fill="#cbad95"/><rect x="525" y="410" width="11" height="11" fill="#caab93"/><rect x="535" y="410" width="11" height="11" fill="#c8aa91"/><rect x="545" y="410" width="11" height="11" fill="#c6a88f"/><rect x="555" y="410" width="11" height="11" fill="#c4a58c"/><rect x="565" y="410" width="11" height="11" fill="#c2a389"/><rect x="575" y="410" width="11" height="11" fill="#c0a187"/><rect x="585" y="410" width="11" height="11" fill="#be9f84"/><rect x="595" y="410" width="11" height="11" fill="#bc9c81"/><rect x="605" y="410" width="11" height="11" fill="#ba997d"/><rect x="615" y="410" width="11" height="11" fill="#b9987c"/><rect x="625" y="410" width="11" height="11" fill="#b6957a"/><rect x="635" y="410" width="11" height="11" fill="#af8f76"/><rect x="645" y="410" width="11" height="11" fill="#a7876f"/><rect x="655" y="410" width="11" height="11" fill="#a0806a"/><rect x="665" y="410" width="11" height="11" fill="#9f7f68"/><rect x="675" y="410" width="11" height="11" fill="#977861"/><rect x="685" y="410" width="11" height="11" fill="#9b7c65"/><rect x="695" y="410" width="11" height="11" fill="#9c7e68"/><rect x="705" y="410" width="11" height="11" fill="#9b7e68"/><rect x="715" y="410" width="11" height="11" fill="#997c66"/><rect x="725" y="410" width="11" height="11" fill="#977a63"/><rect x="735" y="410" width="11" height="11" fill="#997b65"/><rect x="745" y="410" width="11" height="11" fill="#9c7f69"/><rect x="755" y="410" width="11" height="11" fill="#9e826c"/><rect x="765" y="410" width="11" height="11" fill="#a0846e"/><rect x="335" y="420" width="11" height="11" fill="#cdaf97"/><rect x="345" y="420" width="11" height="11" fill="#ceb098"/><rect x="355" y="420" width="11" height="11" fill="#ceb098"/><rect x="365" y="420" width="11" height="11" fill="#cfb099"/><rect x="375" y="420" width="11" height="11" fill="#cfb199"/><rect x="385" y="420" width="11" height="11" fill="#cfb19a"/><rect x="395" y="420" width="11" height="11" fill="#d0b29a"/><rect x="405" y="420" width="11" height="11" fill="#d0b29b"/><rect x="415" y="420" width="11" height="11" fill="#d0b39b"/><rect x="425" y="420" width="11" height="11" fill="#d0b39b"/><rect x="435" y="420" width="11" height="11" fill="#d0b39c"/><rect x="445" y="420" width="11" height="11" fill="#d0b39c"/><rect x="455" y="420" width="11" height="11" fill="#d0b39c"/><rect x="465" y="420" width="11" height="11" fill="#d0b39b"/><rect x="475" y="420" width="11" height="11" fill="#d0b39b"/><rect x="485" y="420" width="11" height="11" fill="#cfb29b"/><rect x="495" y="420" width="11" height="11" fill="#cfb19a"/><rect x="505" y="420" width="11" height="11" fill="#ceb099"/><rect x="515" y="420" width="11" height="11" fill="#cdaf97"/><rect x="525" y="420" width="11" height="11" fill="#ccae96"/><rect x="535" y="420" width="11" height="11" fill="#cbac94"/><rect x="545" y="420" width="11" height="11" fill="#c9aa91"/><rect x="555" y="420" width="11" height="11" fill="#c7a78e"/><rect x="565" y="420" width="11" height="11" fill="#c4a58b"/><rect x="575" y="420" width="11" height="11" fill="#c3a388"/><rect x="585" y="420" width="11" height="11" fill="#c1a186"/><rect x="595" y="420" width="11" height="11" fill="#bf9e83"/><rect x="605" y="420" width="11" height="11" fill="#bb9a7f"/><rect x="615" y="420" width="11" height="11" fill="#ba987c"/><rect x="625" y="420" width="11" height="11" fill="#b7967b"/><rect x="635" y="420" width="11" height="11" fill="#b09077"/><rect x="645" y="420" width="11" height="11" fill="#a88971"/><rect x="655" y="420" width="11" height="11" fill="#a3846c"/><rect x="665" y="420" width="11" height="11" fill="#9e7f67"/><rect x="675" y="420" width="11" height="11" fill="#977860"/><rect x="685" y="420" width="11" height="11" fill="#9c7d65"/><rect x="695" y="420" width="11" height="11" fill="#9f8069"/><rect x="705" y="420" width="11" height="11" fill="#9f8069"/><rect x="715" y="420" width="11" height="11" fill="#9e7f69"/><rect x="725" y="420" width="11" height="11" fill="#9c7f68"/><rect x="735" y="420" width="11" height="11" fill="#9d7f69"/><rect x="745" y="420" width="11" height="11" fill="#9e816b"/><rect x="755" y="420" width="11" height="11" fill="#a0836d"/><rect x="765" y="420" width="11" height="11" fill="#a1856f"/><rect x="335" y="430" width="11" height="11" fill="#ceaf97"/><rect x="345" y="430" width="11" height="11" fill="#ceb098"/><rect x="355" y="430" width="11" height="11" fill="#cfb098"/><rect x="365" y="430" width="11" height="11" fill="#cfb199"/><rect x="375" y="430" width="11" height="11" fill="#d0b29a"/><rect x="385" y="430" width="11" height="11" fill="#d0b29a"/><rect x="395" y="430" width="11" height="11" fill="#d1b39b"/><rect x="405" y="430" width="11" height="11" fill="#d1b39c"/><rect x="415" y="430" width="11" height="11" fill="#d1b49c"/><rect x="425" y="430" width="11" height="11" fill="#d2b49d"/><rect x="435" y="430" width="11" height="11" fill="#d2b49d"/><rect x="445" y="430" width="11" height="11" fill="#d2b59d"/><rect x="455" y="430" width="11" height="11" fill="#d2b59d"/><rect x="465" y="430" width="11" height="11" fill="#d2b59d"/><rect x="475" y="430" width="11" height="11" fill="#d2b59d"/><rect x="485" y="430" width="11" height="11" fill="#d1b49d"/><rect x="495" y="430" width="11" height="11" fill="#d1b49c"/><rect x="505" y="430" width="11" height="11" fill="#d0b39b"/><rect x="515" y="430" width="11" height="11" fill="#d0b29a"/><rect x="525" y="430" width="11" height="11" fill="#cfb098"/><rect x="535" y="430" width="11" height="11" fill="#ceaf97"/><rect x="545" y="430" width="11" height="11" fill="#cbac94"/><rect x="555" y="430" width="11" height="11" fill="#c9aa91"/><rect x="565" y="430" width="11" height="11" fill="#c7a78d"/><rect x="575" y="430" width="11" height="11" fill="#c5a58a"/><rect x="585" y="430" width="11" height="11" fill="#c4a488"/><rect x="595" y="430" width="11" height="11" fill="#c3a386"/><rect x="605" y="430" width="11" height="11" fill="#be9e82"/><rect x="615" y="430" width="11" height="11" fill="#ba9a7f"/><rect x="625" y="430" width="11" height="11" fill="#b7967c"/><rect x="635" y="430" width="11" height="11" fill="#b19278"/><rect x="645" y="430" width="11" height="11" fill="#ac8c74"/><rect x="655" y="430" width="11" height="11" fill="#a7886f"/><rect x="665" y="430" width="11" height="11" fill="#a3836b"/><rect x="675" y="430" width="11" height="11" fill="#a08169"/><rect x="685" y="430" width="11" height="11" fill="#a28269"/><rect x="695" y="430" width="11" height="11" fill="#a3836a"/><rect x="705" y="430" width="11" height="11" fill="#a2836a"/><rect x="715" y="430" width="11" height="11" fill="#a1826b"/><rect x="725" y="430" width="11" height="11" fill="#a0826b"/><rect x="735" y="430" width="11" height="11" fill="#a0826c"/><rect x="745" y="430" width="11" height="11" fill="#a1836d"/><rect x="755" y="430" width="11" height="11" fill="#a2856e"/><rect x="765" y="430" width="11" height="11" fill="#a38670"/><rect x="335" y="440" width="11" height="11" fill="#ceb098"/><rect x="345" y="440" width="11" height="11" fill="#cfb098"/><rect x="355" y="440" width="11" height="11" fill="#cfb199"/><rect x="365" y="440" width="11" height="11" fill="#d0b199"/><rect x="375" y="440" width="11" height="11" fill="#d0b29a"/><rect x="385" y="440" width="11" height="11" fill="#d1b39b"/><rect x="395" y="440" width="11" height="11" fill="#d2b49c"/><rect x="405" y="440" width="11" height="11" fill="#d2b49c"/><rect x="415" y="440" width="11" height="11" fill="#d2b59d"/><rect x="425" y="440" width="11" height="11" fill="#d3b59e"/><rect x="435" y="440" width="11" height="11" fill="#d3b69e"/><rect x="445" y="440" width="11" height="11" fill="#d3b69f"/><rect x="455" y="440" width="11" height="11" fill="#d3b69f"/><rect x="465" y="440" width="11" height="11" fill="#d4b7a0"/><rect x="475" y="440" width="11" height="11" fill="#d4b7a0"/><rect x="485" y="440" width="11" height="11" fill="#d4b79f"/><rect x="495" y="440" width="11" height="11" fill="#d3b69f"/><rect x="505" y="440" width="11" height="11" fill="#d3b59e"/><rect x="515" y="440" width="11" height="11" fill="#d2b49c"/><rect x="525" y="440" width="11" height="11" fill="#d2b39c"/><rect x="535" y="440" width="11" height="11" fill="#d1b29a"/><rect x="545" y="440" width="11" height="11" fill="#cfb097"/><rect x="555" y="440" width="11" height="11" fill="#ccac93"/><rect x="565" y="440" width="11" height="11" fill="#c9a98f"/><rect x="575" y="440" width="11" height="11" fill="#c7a78c"/><rect x="585" y="440" width="11" height="11" fill="#c6a688"/><rect x="595" y="440" width="11" height="11" fill="#c6a688"/><rect x="605" y="440" width="11" height="11" fill="#c1a185"/><rect x="615" y="440" width="11" height="11" fill="#bc9c81"/><rect x="625" y="440" width="11" height="11" fill="#b8987d"/><rect x="635" y="440" width="11" height="11" fill="#b3947a"/><rect x="645" y="440" width="11" height="11" fill="#af9076"/><rect x="655" y="440" width="11" height="11" fill="#ab8c73"/><rect x="665" y="440" width="11" height="11" fill="#a7886f"/><rect x="675" y="440" width="11" height="11" fill="#a5856c"/><rect x="685" y="440" width="11" height="11" fill="#a5836a"/><rect x="695" y="440" width="11" height="11" fill="#a58369"/><rect x="705" y="440" width="11" height="11" fill="#a4846b"/><rect x="715" y="440" width="11" height="11" fill="#a4846c"/><rect x="725" y="440" width="11" height="11" fill="#a3856d"/><rect x="735" y="440" width="11" height="11" fill="#a3856e"/><rect x="745" y="440" width="11" height="11" fill="#a3856f"/><rect x="755" y="440" width="11" height="11" fill="#a48670"/><rect x="765" y="440" width="11" height="11" fill="#a58771"/><rect x="335" y="450" width="11" height="11" fill="#ceb097"/><rect x="345" y="450" width="11" height="11" fill="#cfb098"/><rect x="355" y="450" width="11" height="11" fill="#cfb199"/><rect x="365" y="450" width="11" height="11" fill="#d0b299"/><rect x="375" y="450" width="11" height="11" fill="#d1b29a"/><rect x="385" y="450" width="11" height="11" fill="#d2b39b"/><rect x="395" y="450" width="11" height="11" fill="#d2b49c"/><rect x="405" y="450" width="11" height="11" fill="#d3b59d"/><rect x="415" y="450" width="11" height="11" fill="#d4b69e"/><rect x="425" y="450" width="11" height="11" fill="#d4b79f"/><rect x="435" y="450" width="11" height="11" fill="#d4b7a0"/><rect x="445" y="450" width="11" height="11" fill="#d5b8a0"/><rect x="455" y="450" width="11" height="11" fill="#d5b8a1"/><rect x="465" y="450" width="11" height="11" fill="#d5b9a2"/><rect x="475" y="450" width="11" height="11" fill="#d6b9a2"/><rect x="485" y="450" width="11" height="11" fill="#d6b9a2"/><rect x="495" y="450" width="11" height="11" fill="#d6b9a2"/><rect x="505" y="450" width="11" height="11" fill="#d5b8a0"/><rect x="515" y="450" width="11" height="11" fill="#d4b69f"/><rect x="525" y="450" width="11" height="11" fill="#d5b69f"/><rect x="535" y="450" width="11" height="11" fill="#d6b69f"/><rect x="545" y="450" width="11" height="11" fill="#d3b39c"/><rect x="555" y="450" width="11" height="11" fill="#ceaf96"/><rect x="565" y="450" width="11" height="11" fill="#ccab92"/><rect x="575" y="450" width="11" height="11" fill="#caaa8f"/><rect x="585" y="450" width="11" height="11" fill="#c7a78b"/><rect x="595" y="450" width="11" height="11" fill="#c5a589"/><rect x="605" y="450" width="11" height="11" fill="#c2a286"/><rect x="615" y="450" width="11" height="11" fill="#bd9d82"/><rect x="625" y="450" width="11" height="11" fill="#b9997e"/><rect x="635" y="450" width="11" height="11" fill="#b6967b"/><rect x="645" y="450" width="11" height="11" fill="#b39378"/><rect x="655" y="450" width="11" height="11" fill="#af9076"/><rect x="665" y="450" width="11" height="11" fill="#ab8c72"/><rect x="675" y="450" width="11" height="11" fill="#a8886f"/><rect x="685" y="450" width="11" height="11" fill="#a6856c"/><rect x="695" y="450" width="11" height="11" fill="#a6856b"/><rect x="705" y="450" width="11" height="11" fill="#a6856d"/><rect x="715" y="450" width="11" height="11" fill="#a5866e"/><rect x="725" y="450" width="11" height="11" fill="#a5876f"/><rect x="735" y="450" width="11" height="11" fill="#a58770"/><rect x="745" y="450" width="11" height="11" fill="#a58770"/><rect x="755" y="450" width="11" height="11" fill="#a68871"/><rect x="765" y="450" width="11" height="11" fill="#a68972"/><rect x="335" y="460" width="11" height="11" fill="#ceaf97"/><rect x="345" y="460" width="11" height="11" fill="#cfb098"/><rect x="355" y="460" width="11" height="11" fill="#d0b198"/><rect x="365" y="460" width="11" height="11" fill="#d0b199"/><rect x="375" y="460" width="11" height="11" fill="#d1b39a"/><rect x="385" y="460" width="11" height="11" fill="#d2b49c"/><rect x="395" y="460" width="11" height="11" fill="#d3b59d"/><rect x="405" y="460" width="11" height="11" fill="#d4b69e"/><rect x="415" y="460" width="11" height="11" fill="#d5b79f"/><rect x="425" y="460" width="11" height="11" fill="#d5b8a0"/><rect x="435" y="460" width="11" height="11" fill="#d6b8a1"/><rect x="445" y="460" width="11" height="11" fill="#d6b9a2"/><rect x="455" y="460" width="11" height="11" fill="#d7baa3"/><rect x="465" y="460" width="11" height="11" fill="#d7bba4"/><rect x="475" y="460" width="11" height="11" fill="#d8bca5"/><rect x="485" y="460" width="11" height="11" fill="#d9bca5"/><rect x="495" y="460" width="11" height="11" fill="#d9bca5"/><rect x="505" y="460" width="11" height="11" fill="#d7bba3"/><rect x="515" y="460" width="11" height="11" fill="#d6b8a1"/><rect x="525" y="460" width="11" height="11" fill="#d7b8a0"/><rect x="535" y="460" width="11" height="11" fill="#d9b9a2"/><rect x="545" y="460" width="11" height="11" fill="#d6b69e"/><rect x="555" y="460" width="11" height="11" fill="#d0b098"/><rect x="565" y="460" width="11" height="11" fill="#cead94"/><rect x="575" y="460" width="11" height="11" fill="#cfad94"/><rect x="585" y="460" width="11" height="11" fill="#cbaa91"/><rect x="595" y="460" width="11" height="11" fill="#c6a68c"/><rect x="605" y="460" width="11" height="11" fill="#c2a388"/><rect x="615" y="460" width="11" height="11" fill="#be9e83"/><rect x="625" y="460" width="11" height="11" fill="#b99a7e"/><rect x="635" y="460" width="11" height="11" fill="#b6977a"/><rect x="645" y="460" width="11" height="11" fill="#b59679"/><rect x="655" y="460" width="11" height="11" fill="#b39378"/><rect x="665" y="460" width="11" height="11" fill="#af9075"/><rect x="675" y="460" width="11" height="11" fill="#ab8c72"/><rect x="685" y="460" width="11" height="11" fill="#a98970"/><rect x="695" y="460" width="11" height="11" fill="#a8886f"/><rect x="705" y="460" width="11" height="11" fill="#a8886f"/><rect x="715" y="460" width="11" height="11" fill="#a78870"/><rect x="725" y="460" width="11" height="11" fill="#a78971"/><rect x="735" y="460" width="11" height="11" fill="#a78971"/><rect x="745" y="460" width="11" height="11" fill="#a78972"/><rect x="755" y="460" width="11" height="11" fill="#a78a73"/><rect x="765" y="460" width="11" height="11" fill="#a88a73"/><rect x="335" y="470" width="11" height="11" fill="#ceaf97"/><rect x="345" y="470" width="11" height="11" fill="#cfaf97"/><rect x="355" y="470" width="11" height="11" fill="#d0b098"/><rect x="365" y="470" width="11" height="11" fill="#d0b199"/><rect x="375" y="470" width="11" height="11" fill="#d1b29a"/><rect x="385" y="470" width="11" height="11" fill="#d3b49b"/><rect x="395" y="470" width="11" height="11" fill="#d4b69d"/><rect x="405" y="470" width="11" height="11" fill="#d6b89f"/><rect x="415" y="470" width="11" height="11" fill="#d6b9a1"/><rect x="425" y="470" width="11" height="11" fill="#d7b9a2"/><rect x="435" y="470" width="11" height="11" fill="#d7baa2"/><rect x="445" y="470" width="11" height="11" fill="#d7bba4"/><rect x="455" y="470" width="11" height="11" fill="#d8bca6"/><rect x="465" y="470" width="11" height="11" fill="#d9bda7"/><rect x="475" y="470" width="11" height="11" fill="#dabea7"/><rect x="485" y="470" width="11" height="11" fill="#dbbea7"/><rect x="495" y="470" width="11" height="11" fill="#dcbfa8"/><rect x="505" y="470" width="11" height="11" fill="#dabda6"/><rect x="515" y="470" width="11" height="11" fill="#d7b9a2"/><rect x="525" y="470" width="11" height="11" fill="#d6b8a0"/><rect x="535" y="470" width="11" height="11" fill="#d7b7a0"/><rect x="545" y="470" width="11" height="11" fill="#d4b59d"/><rect x="555" y="470" width="11" height="11" fill="#d0b098"/><rect x="565" y="470" width="11" height="11" fill="#ceae95"/><rect x="575" y="470" width="11" height="11" fill="#cfae94"/><rect x="585" y="470" width="11" height="11" fill="#ccab92"/><rect x="595" y="470" width="11" height="11" fill="#c7a78d"/><rect x="605" y="470" width="11" height="11" fill="#c4a489"/><rect x="615" y="470" width="11" height="11" fill="#bf9f84"/><rect x="625" y="470" width="11" height="11" fill="#ba9a7e"/><rect x="635" y="470" width="11" height="11" fill="#b69779"/><rect x="645" y="470" width="11" height="11" fill="#b69678"/><rect x="655" y="470" width="11" height="11" fill="#b59579"/><rect x="665" y="470" width="11" height="11" fill="#b29278"/><rect x="675" y="470" width="11" height="11" fill="#af8f76"/><rect x="685" y="470" width="11" height="11" fill="#ac8d74"/><rect x="695" y="470" width="11" height="11" fill="#ab8b73"/><rect x="705" y="470" width="11" height="11" fill="#aa8b72"/><rect x="715" y="470" width="11" height="11" fill="#a98b72"/><rect x="725" y="470" width="11" height="11" fill="#a98b73"/><rect x="735" y="470" width="11" height="11" fill="#a98b73"/><rect x="745" y="470" width="11" height="11" fill="#a98b74"/><rect x="755" y="470" width="11" height="11" fill="#a98b74"/><rect x="765" y="470" width="11" height="11" fill="#a98c75"/><rect x="335" y="480" width="11" height="11" fill="#ceae96"/><rect x="345" y="480" width="11" height="11" fill="#ceaf96"/><rect x="355" y="480" width="11" height="11" fill="#cfaf97"/><rect x="365" y="480" width="11" height="11" fill="#d0b098"/><rect x="375" y="480" width="11" height="11" fill="#d1b299"/><rect x="385" y="480" width="11" height="11" fill="#d3b39b"/><rect x="395" y="480" width="11" height="11" fill="#d5b69d"/><rect x="405" y="480" width="11" height="11" fill="#d7b9a1"/><rect x="415" y="480" width="11" height="11" fill="#d9bba3"/><rect x="425" y="480" width="11" height="11" fill="#d8bba3"/><rect x="435" y="480" width="11" height="11" fill="#d8bba3"/><rect x="445" y="480" width="11" height="11" fill="#d9bca5"/><rect x="455" y="480" width="11" height="11" fill="#dabea8"/><rect x="465" y="480" width="11" height="11" fill="#dcc1ab"/><rect x="475" y="480" width="11" height="11" fill="#dcc1ab"/><rect x="485" y="480" width="11" height="11" fill="#dbbfa8"/><rect x="495" y="480" width="11" height="11" fill="#dcc0a8"/><rect x="505" y="480" width="11" height="11" fill="#dabea6"/><rect x="515" y="480" width="11" height="11" fill="#d7baa3"/><rect x="525" y="480" width="11" height="11" fill="#d5b8a0"/><rect x="535" y="480" width="11" height="11" fill="#d4b69f"/><rect x="545" y="480" width="11" height="11" fill="#d2b49c"/><rect x="555" y="480" width="11" height="11" fill="#cfb098"/><rect x="565" y="480" width="11" height="11" fill="#ceae95"/><rect x="575" y="480" width="11" height="11" fill="#ccac93"/><rect x="585" y="480" width="11" height="11" fill="#caaa90"/><rect x="595" y="480" width="11" height="11" fill="#c8a88d"/><rect x="605" y="480" width="11" height="11" fill="#c5a68b"/><rect x="615" y="480" width="11" height="11" fill="#c1a186"/><rect x="625" y="480" width="11" height="11" fill="#bc9c81"/><rect x="635" y="480" width="11" height="11" fill="#b8987c"/><rect x="645" y="480" width="11" height="11" fill="#b7977a"/><rect x="655" y="480" width="11" height="11" fill="#b6967a"/><rect x="665" y="480" width="11" height="11" fill="#b3947a"/><rect x="675" y="480" width="11" height="11" fill="#b19278"/><rect x="685" y="480" width="11" height="11" fill="#af9077"/><rect x="695" y="480" width="11" height="11" fill="#ad8e76"/><rect x="705" y="480" width="11" height="11" fill="#ac8d75"/><rect x="715" y="480" width="11" height="11" fill="#ac8d75"/><rect x="725" y="480" width="11" height="11" fill="#ab8d75"/><rect x="735" y="480" width="11" height="11" fill="#ab8d75"/><rect x="745" y="480" width="11" height="11" fill="#ab8d75"/><rect x="755" y="480" width="11" height="11" fill="#ab8d76"/><rect x="765" y="480" width="11" height="11" fill="#ab8d76"/><rect x="335" y="490" width="11" height="11" fill="#cdad95"/><rect x="345" y="490" width="11" height="11" fill="#cead95"/><rect x="355" y="490" width="11" height="11" fill="#ceae95"/><rect x="365" y="490" width="11" height="11" fill="#cfaf96"/><rect x="375" y="490" width="11" height="11" fill="#d1b097"/><rect x="385" y="490" width="11" height="11" fill="#d2b299"/><rect x="395" y="490" width="11" height="11" fill="#d4b59c"/><rect x="405" y="490" width="11" height="11" fill="#d9bba3"/><rect x="415" y="490" width="11" height="11" fill="#dbbfa7"/><rect x="425" y="490" width="11" height="11" fill="#dabda5"/><rect x="435" y="490" width="11" height="11" fill="#d8bba4"/><rect x="445" y="490" width="11" height="11" fill="#d9bda6"/><rect x="455" y="490" width="11" height="11" fill="#dcc0ab"/><rect x="465" y="490" width="11" height="11" fill="#e0c5b0"/><rect x="475" y="490" width="11" height="11" fill="#e0c5b1"/><rect x="485" y="490" width="11" height="11" fill="#ddc1ab"/><rect x="495" y="490" width="11" height="11" fill="#dabfa8"/><rect x="505" y="490" width="11" height="11" fill="#d9bda6"/><rect x="515" y="490" width="11" height="11" fill="#d7bba4"/><rect x="525" y="490" width="11" height="11" fill="#d5b8a1"/><rect x="535" y="490" width="11" height="11" fill="#d4b69f"/><rect x="545" y="490" width="11" height="11" fill="#d2b49d"/><rect x="555" y="490" width="11" height="11" fill="#d0b29a"/><rect x="565" y="490" width="11" height="11" fill="#cdaf96"/><rect x="575" y="490" width="11" height="11" fill="#cbac92"/><rect x="585" y="490" width="11" height="11" fill="#c9aa8e"/><rect x="595" y="490" width="11" height="11" fill="#c9a98c"/><rect x="605" y="490" width="11" height="11" fill="#c7a88c"/><rect x="615" y="490" width="11" height="11" fill="#c3a489"/><rect x="625" y="490" width="11" height="11" fill="#be9f84"/><rect x="635" y="490" width="11" height="11" fill="#bb9b80"/><rect x="645" y="490" width="11" height="11" fill="#b9997e"/><rect x="655" y="490" width="11" height="11" fill="#b7987d"/><rect x="665" y="490" width="11" height="11" fill="#b5967c"/><rect x="675" y="490" width="11" height="11" fill="#b3947b"/><rect x="685" y="490" width="11" height="11" fill="#b19279"/><rect x="695" y="490" width="11" height="11" fill="#b09178"/><rect x="705" y="490" width="11" height="11" fill="#af9077"/><rect x="715" y="490" width="11" height="11" fill="#ae8f77"/><rect x="725" y="490" width="11" height="11" fill="#ad8f77"/><rect x="735" y="490" width="11" height="11" fill="#ad8f77"/><rect x="745" y="490" width="11" height="11" fill="#ac8e77"/><rect x="755" y="490" width="11" height="11" fill="#ac8f77"/><rect x="765" y="490" width="11" height="11" fill="#ac8f77"/><rect x="335" y="500" width="11" height="11" fill="#ccac93"/><rect x="345" y="500" width="11" height="11" fill="#ccac93"/><rect x="355" y="500" width="11" height="11" fill="#cdac93"/><rect x="365" y="500" width="11" height="11" fill="#cead94"/><rect x="375" y="500" width="11" height="11" fill="#d0af95"/><rect x="385" y="500" width="11" height="11" fill="#d1af95"/><rect x="395" y="500" width="11" height="11" fill="#d2b096"/><rect x="405" y="500" width="11" height="11" fill="#d6b89f"/><rect x="415" y="500" width="11" height="11" fill="#dbbfa7"/><rect x="425" y="500" width="11" height="11" fill="#d9bda5"/><rect x="435" y="500" width="11" height="11" fill="#d8bba3"/><rect x="445" y="500" width="11" height="11" fill="#d9bca5"/><rect x="455" y="500" width="11" height="11" fill="#dcc0aa"/><rect x="465" y="500" width="11" height="11" fill="#e0c5b0"/><rect x="475" y="500" width="11" height="11" fill="#e1c5b1"/><rect x="485" y="500" width="11" height="11" fill="#ddc2ac"/><rect x="495" y="500" width="11" height="11" fill="#dabfa9"/><rect x="505" y="500" width="11" height="11" fill="#d8bda7"/><rect x="515" y="500" width="11" height="11" fill="#d7bba5"/><rect x="525" y="500" width="11" height="11" fill="#d6baa4"/><rect x="535" y="500" width="11" height="11" fill="#d4b8a2"/><rect x="545" y="500" width="11" height="11" fill="#d3b6a0"/><rect x="555" y="500" width="11" height="11" fill="#d1b49d"/><rect x="565" y="500" width="11" height="11" fill="#cfb199"/><rect x="575" y="500" width="11" height="11" fill="#ccad94"/><rect x="585" y="500" width="11" height="11" fill="#caaa8f"/><rect x="595" y="500" width="11" height="11" fill="#c9a98c"/><rect x="605" y="500" width="11" height="11" fill="#c8a88c"/><rect x="615" y="500" width="11" height="11" fill="#c5a58a"/><rect x="625" y="500" width="11" height="11" fill="#c1a287"/><rect x="635" y="500" width="11" height="11" fill="#bd9e84"/><rect x="645" y="500" width="11" height="11" fill="#bb9c81"/><rect x="655" y="500" width="11" height="11" fill="#b99a7f"/><rect x="665" y="500" width="11" height="11" fill="#b7987e"/><rect x="675" y="500" width="11" height="11" fill="#b5967d"/><rect x="685" y="500" width="11" height="11" fill="#b3947b"/><rect x="695" y="500" width="11" height="11" fill="#b2937a"/><rect x="705" y="500" width="11" height="11" fill="#b1927a"/><rect x="715" y="500" width="11" height="11" fill="#b09179"/><rect x="725" y="500" width="11" height="11" fill="#af9179"/><rect x="735" y="500" width="11" height="11" fill="#ae9079"/><rect x="745" y="500" width="11" height="11" fill="#ae9079"/><rect x="755" y="500" width="11" height="11" fill="#ae9079"/><rect x="765" y="500" width="11" height="11" fill="#ae9079"/><rect x="335" y="510" width="11" height="11" fill="#ccab92"/><rect x="345" y="510" width="11" height="11" fill="#cbaa91"/><rect x="355" y="510" width="11" height="11" fill="#cba990"/><rect x="365" y="510" width="11" height="11" fill="#ccab92"/><rect x="375" y="510" width="11" height="11" fill="#cfad94"/><rect x="385" y="510" width="11" height="11" fill="#d0ad93"/><rect x="395" y="510" width="11" height="11" fill="#cfab90"/><rect x="405" y="510" width="11" height="11" fill="#d2b096"/><rect x="415" y="510" width="11" height="11" fill="#d6b89f"/><rect x="425" y="510" width="11" height="11" fill="#d7b9a1"/><rect x="435" y="510" width="11" height="11" fill="#d7b9a2"/><rect x="445" y="510" width="11" height="11" fill="#d7baa3"/><rect x="455" y="510" width="11" height="11" fill="#d9bda7"/><rect x="465" y="510" width="11" height="11" fill="#dcc0ab"/><rect x="475" y="510" width="11" height="11" fill="#ddc1ac"/><rect x="485" y="510" width="11" height="11" fill="#dbc0ab"/><rect x="495" y="510" width="11" height="11" fill="#dabfaa"/><rect x="505" y="510" width="11" height="11" fill="#d9bea9"/><rect x="515" y="510" width="11" height="11" fill="#d8bda8"/><rect x="525" y="510" width="11" height="11" fill="#d7bca7"/><rect x="535" y="510" width="11" height="11" fill="#d6bba6"/><rect x="545" y="510" width="11" height="11" fill="#d5baa5"/><rect x="555" y="510" width="11" height="11" fill="#d4b9a3"/><rect x="565" y="510" width="11" height="11" fill="#d1b59f"/><rect x="575" y="510" width="11" height="11" fill="#ceb198"/><rect x="585" y="510" width="11" height="11" fill="#cbad92"/><rect x="595" y="510" width="11" height="11" fill="#c9aa8f"/><rect x="605" y="510" width="11" height="11" fill="#c8a98e"/><rect x="615" y="510" width="11" height="11" fill="#c5a68c"/><rect x="625" y="510" width="11" height="11" fill="#c2a389"/><rect x="635" y="510" width="11" height="11" fill="#bfa086"/><rect x="645" y="510" width="11" height="11" fill="#bc9e84"/><rect x="655" y="510" width="11" height="11" fill="#ba9c82"/><rect x="665" y="510" width="11" height="11" fill="#b89a80"/><rect x="675" y="510" width="11" height="11" fill="#b7987f"/><rect x="685" y="510" width="11" height="11" fill="#b5967e"/><rect x="695" y="510" width="11" height="11" fill="#b4957d"/><rect x="705" y="510" width="11" height="11" fill="#b2947c"/><rect x="715" y="510" width="11" height="11" fill="#b1937b"/><rect x="725" y="510" width="11" height="11" fill="#b1937b"/><rect x="735" y="510" width="11" height="11" fill="#b0927a"/><rect x="745" y="510" width="11" height="11" fill="#b0927a"/><rect x="755" y="510" width="11" height="11" fill="#af927a"/><rect x="765" y="510" width="11" height="11" fill="#af917a"/><rect x="335" y="520" width="11" height="11" fill="#cbaa91"/><rect x="345" y="520" width="11" height="11" fill="#caa88f"/><rect x="355" y="520" width="11" height="11" fill="#c9a78e"/><rect x="365" y="520" width="11" height="11" fill="#caa990"/><rect x="375" y="520" width="11" height="11" fill="#ceac93"/><rect x="385" y="520" width="11" height="11" fill="#d0ad94"/><rect x="395" y="520" width="11" height="11" fill="#d0ad93"/><rect x="405" y="520" width="11" height="11" fill="#d1b096"/><rect x="415" y="520" width="11" height="11" fill="#d4b49b"/><rect x="425" y="520" width="11" height="11" fill="#d5b79e"/><rect x="435" y="520" width="11" height="11" fill="#d5b79f"/><rect x="445" y="520" width="11" height="11" fill="#d6b8a0"/><rect x="455" y="520" width="11" height="11" fill="#d7baa3"/><rect x="465" y="520" width="11" height="11" fill="#d9bda7"/><rect x="475" y="520" width="11" height="11" fill="#dabfaa"/><rect x="485" y="520" width="11" height="11" fill="#dac1ac"/><rect x="495" y="520" width="11" height="11" fill="#dac1ad"/><rect x="505" y="520" width="11" height="11" fill="#dac1ad"/><rect x="515" y="520" width="11" height="11" fill="#d9c0ac"/><rect x="525" y="520" width="11" height="11" fill="#d9c0ab"/><rect x="535" y="520" width="11" height="11" fill="#d8bfaa"/><rect x="545" y="520" width="11" height="11" fill="#d9bfab"/><rect x="555" y="520" width="11" height="11" fill="#d9c0ac"/><rect x="565" y="520" width="11" height="11" fill="#d6bca7"/><rect x="575" y="520" width="11" height="11" fill="#d1b69f"/><rect x="585" y="520" width="11" height="11" fill="#cdb098"/><rect x="595" y="520" width="11" height="11" fill="#caac93"/><rect x="605" y="520" width="11" height="11" fill="#c8aa90"/><rect x="615" y="520" width="11" height="11" fill="#c6a78e"/><rect x="625" y="520" width="11" height="11" fill="#c3a58b"/><rect x="635" y="520" width="11" height="11" fill="#c0a288"/><rect x="645" y="520" width="11" height="11" fill="#bea086"/><rect x="655" y="520" width="11" height="11" fill="#bc9d84"/><rect x="665" y="520" width="11" height="11" fill="#ba9b82"/><rect x="675" y="520" width="11" height="11" fill="#b89a81"/><rect x="685" y="520" width="11" height="11" fill="#b79880"/><rect x="695" y="520" width="11" height="11" fill="#b5977e"/><rect x="705" y="520" width="11" height="11" fill="#b4967e"/><rect x="715" y="520" width="11" height="11" fill="#b3957d"/><rect x="725" y="520" width="11" height="11" fill="#b2947c"/><rect x="735" y="520" width="11" height="11" fill="#b2947c"/><rect x="745" y="520" width="11" height="11" fill="#b1937c"/><rect x="755" y="520" width="11" height="11" fill="#b1937b"/><rect x="765" y="520" width="11" height="11" fill="#b0937b"/><rect x="335" y="530" width="11" height="11" fill="#cbaa91"/><rect x="345" y="530" width="11" height="11" fill="#caa890"/><rect x="355" y="530" width="11" height="11" fill="#c9a88f"/><rect x="365" y="530" width="11" height="11" fill="#cba990"/><rect x="375" y="530" width="11" height="11" fill="#cdac93"/><rect x="385" y="530" width="11" height="11" fill="#d0ae95"/><rect x="395" y="530" width="11" height="11" fill="#d1b096"/><rect x="405" y="530" width="11" height="11" fill="#d2b298"/><rect x="415" y="530" width="11" height="11" fill="#d3b49b"/><rect x="425" y="530" width="11" height="11" fill="#d4b69e"/><rect x="435" y="530" width="11" height="11" fill="#d4b69d"/><rect x="445" y="530" width="11" height="11" fill="#d4b59d"/><rect x="455" y="530" width="11" height="11" fill="#d5b79f"/><rect x="465" y="530" width="11" height="11" fill="#d7bba5"/><rect x="475" y="530" width="11" height="11" fill="#dac0ab"/><rect x="485" y="530" width="11" height="11" fill="#dbc3b0"/><rect x="495" y="530" width="11" height="11" fill="#dcc6b2"/><rect x="505" y="530" width="11" height="11" fill="#dcc5b2"/><rect x="515" y="530" width="11" height="11" fill="#dcc4b1"/><rect x="525" y="530" width="11" height="11" fill="#dbc4b0"/><rect x="535" y="530" width="11" height="11" fill="#dbc2af"/><rect x="545" y="530" width="11" height="11" fill="#dcc4b1"/><rect x="555" y="530" width="11" height="11" fill="#dec7b5"/><rect x="565" y="530" width="11" height="11" fill="#dbc3af"/><rect x="575" y="530" width="11" height="11" fill="#d5bba5"/><rect x="585" y="530" width="11" height="11" fill="#d0b49d"/><rect x="595" y="530" width="11" height="11" fill="#ccaf97"/><rect x="605" y="530" width="11" height="11" fill="#c9ac93"/><rect x="615" y="530" width="11" height="11" fill="#c6a990"/><rect x="625" y="530" width="11" height="11" fill="#c4a68d"/><rect x="635" y="530" width="11" height="11" fill="#c1a38a"/><rect x="645" y="530" width="11" height="11" fill="#bfa188"/><rect x="655" y="530" width="11" height="11" fill="#bd9f86"/><rect x="665" y="530" width="11" height="11" fill="#bb9d84"/><rect x="675" y="530" width="11" height="11" fill="#ba9b83"/><rect x="685" y="530" width="11" height="11" fill="#b89a81"/><rect x="695" y="530" width="11" height="11" fill="#b79980"/><rect x="705" y="530" width="11" height="11" fill="#b6977f"/><rect x="715" y="530" width="11" height="11" fill="#b5977e"/><rect x="725" y="530" width="11" height="11" fill="#b4967e"/><rect x="735" y="530" width="11" height="11" fill="#b3957d"/><rect x="745" y="530" width="11" height="11" fill="#b2957d"/><rect x="755" y="530" width="11" height="11" fill="#b2947d"/><rect x="765" y="530" width="11" height="11" fill="#b2947d"/><rect x="335" y="540" width="11" height="11" fill="#ccab92"/><rect x="345" y="540" width="11" height="11" fill="#cbaa91"/><rect x="355" y="540" width="11" height="11" fill="#cbaa91"/><rect x="365" y="540" width="11" height="11" fill="#ccab92"/><rect x="375" y="540" width="11" height="11" fill="#cead94"/><rect x="385" y="540" width="11" height="11" fill="#d0af96"/><rect x="395" y="540" width="11" height="11" fill="#d1b198"/><rect x="405" y="540" width="11" height="11" fill="#d2b39a"/><rect x="415" y="540" width="11" height="11" fill="#d3b49c"/><rect x="425" y="540" width="11" height="11" fill="#d4b69d"/><rect x="435" y="540" width="11" height="11" fill="#d4b69d"/><rect x="445" y="540" width="11" height="11" fill="#d4b59c"/><rect x="455" y="540" width="11" height="11" fill="#d5b79f"/><rect x="465" y="540" width="11" height="11" fill="#d7bba5"/><rect x="475" y="540" width="11" height="11" fill="#dac1ad"/><rect x="485" y="540" width="11" height="11" fill="#ddc7b5"/><rect x="495" y="540" width="11" height="11" fill="#dfcbba"/><rect x="505" y="540" width="11" height="11" fill="#dec8b6"/><rect x="515" y="540" width="11" height="11" fill="#dec8b6"/><rect x="525" y="540" width="11" height="11" fill="#dec9b6"/><rect x="535" y="540" width="11" height="11" fill="#dcc5b2"/><rect x="545" y="540" width="11" height="11" fill="#dcc5b2"/><rect x="555" y="540" width="11" height="11" fill="#dec7b5"/><rect x="565" y="540" width="11" height="11" fill="#dbc3b0"/><rect x="575" y="540" width="11" height="11" fill="#d6bca8"/><rect x="585" y="540" width="11" height="11" fill="#d1b6a0"/><rect x="595" y="540" width="11" height="11" fill="#cdb19a"/><rect x="605" y="540" width="11" height="11" fill="#caad95"/><rect x="615" y="540" width="11" height="11" fill="#c7aa92"/><rect x="625" y="540" width="11" height="11" fill="#c5a78f"/><rect x="635" y="540" width="11" height="11" fill="#c2a58c"/><rect x="645" y="540" width="11" height="11" fill="#c0a28a"/><rect x="655" y="540" width="11" height="11" fill="#bea088"/><rect x="665" y="540" width="11" height="11" fill="#bd9f86"/><rect x="675" y="540" width="11" height="11" fill="#bb9d84"/><rect x="685" y="540" width="11" height="11" fill="#b99b83"/><rect x="695" y="540" width="11" height="11" fill="#b89a82"/><rect x="705" y="540" width="11" height="11" fill="#b79981"/><rect x="715" y="540" width="11" height="11" fill="#b69880"/><rect x="725" y="540" width="11" height="11" fill="#b5977f"/><rect x="735" y="540" width="11" height="11" fill="#b4977f"/><rect x="745" y="540" width="11" height="11" fill="#b4967e"/><rect x="755" y="540" width="11" height="11" fill="#b3967e"/><rect x="765" y="540" width="11" height="11" fill="#b3957e"/><rect x="335" y="550" width="11" height="11" fill="#ccac93"/><rect x="345" y="550" width="11" height="11" fill="#ccac93"/><rect x="355" y="550" width="11" height="11" fill="#cdac93"/><rect x="365" y="550" width="11" height="11" fill="#cdad94"/><rect x="375" y="550" width="11" height="11" fill="#cfae96"/><rect x="385" y="550" width="11" height="11" fill="#d0b097"/><rect x="395" y="550" width="11" height="11" fill="#d1b299"/><rect x="405" y="550" width="11" height="11" fill="#d2b39b"/><rect x="415" y="550" width="11" height="11" fill="#d3b59d"/><rect x="425" y="550" width="11" height="11" fill="#d4b69e"/><rect x="435" y="550" width="11" height="11" fill="#d4b69e"/><rect x="445" y="550" width="11" height="11" fill="#d5b79f"/><rect x="455" y="550" width="11" height="11" fill="#d6b9a1"/><rect x="465" y="550" width="11" height="11" fill="#d7bca6"/><rect x="475" y="550" width="11" height="11" fill="#dac2ae"/><rect x="485" y="550" width="11" height="11" fill="#dec8b5"/><rect x="495" y="550" width="11" height="11" fill="#dfcbba"/><rect x="505" y="550" width="11" height="11" fill="#dec9b7"/><rect x="515" y="550" width="11" height="11" fill="#dfcab7"/><rect x="525" y="550" width="11" height="11" fill="#dfcab8"/><rect x="535" y="550" width="11" height="11" fill="#ddc6b3"/><rect x="545" y="550" width="11" height="11" fill="#dbc3b0"/><rect x="555" y="550" width="11" height="11" fill="#dbc3af"/><rect x="565" y="550" width="11" height="11" fill="#d9c0ac"/><rect x="575" y="550" width="11" height="11" fill="#d5bba6"/><rect x="585" y="550" width="11" height="11" fill="#d1b6a0"/><rect x="595" y="550" width="11" height="11" fill="#ceb29b"/><rect x="605" y="550" width="11" height="11" fill="#cbae97"/><rect x="615" y="550" width="11" height="11" fill="#c8ab93"/><rect x="625" y="550" width="11" height="11" fill="#c5a890"/><rect x="635" y="550" width="11" height="11" fill="#c3a68e"/><rect x="645" y="550" width="11" height="11" fill="#c1a48b"/><rect x="655" y="550" width="11" height="11" fill="#bfa289"/><rect x="665" y="550" width="11" height="11" fill="#bea087"/><rect x="675" y="550" width="11" height="11" fill="#bc9e86"/><rect x="685" y="550" width="11" height="11" fill="#bb9d84"/><rect x="695" y="550" width="11" height="11" fill="#b99b83"/><rect x="705" y="550" width="11" height="11" fill="#b89a82"/><rect x="715" y="550" width="11" height="11" fill="#b79981"/><rect x="725" y="550" width="11" height="11" fill="#b69881"/><rect x="735" y="550" width="11" height="11" fill="#b69880"/><rect x="745" y="550" width="11" height="11" fill="#b59780"/><rect x="755" y="550" width="11" height="11" fill="#b4977f"/><rect x="765" y="550" width="11" height="11" fill="#b4967f"/><rect x="335" y="560" width="11" height="11" fill="#cdad95"/><rect x="345" y="560" width="11" height="11" fill="#cdad95"/><rect x="355" y="560" width="11" height="11" fill="#ceae95"/><rect x="365" y="560" width="11" height="11" fill="#ceae96"/><rect x="375" y="560" width="11" height="11" fill="#cfb097"/><rect x="385" y="560" width="11" height="11" fill="#d0b198"/><rect x="395" y="560" width="11" height="11" fill="#d1b29a"/><rect x="405" y="560" width="11" height="11" fill="#d2b49b"/><rect x="415" y="560" width="11" height="11" fill="#d3b59d"/><rect x="425" y="560" width="11" height="11" fill="#d4b69e"/><rect x="435" y="560" width="11" height="11" fill="#d4b79f"/><rect x="445" y="560" width="11" height="11" fill="#d5b8a1"/><rect x="455" y="560" width="11" height="11" fill="#d6baa3"/><rect x="465" y="560" width="11" height="11" fill="#d7bda7"/><rect x="475" y="560" width="11" height="11" fill="#d9c1ac"/><rect x="485" y="560" width="11" height="11" fill="#dcc5b1"/><rect x="495" y="560" width="11" height="11" fill="#ddc7b4"/><rect x="505" y="560" width="11" height="11" fill="#ddc6b4"/><rect x="515" y="560" width="11" height="11" fill="#ddc7b4"/><rect x="525" y="560" width="11" height="11" fill="#ddc7b4"/><rect x="535" y="560" width="11" height="11" fill="#dbc4b1"/><rect x="545" y="560" width="11" height="11" fill="#d9c1ae"/><rect x="555" y="560" width="11" height="11" fill="#d8bfab"/><rect x="565" y="560" width="11" height="11" fill="#d6bda8"/><rect x="575" y="560" width="11" height="11" fill="#d4baa4"/><rect x="585" y="560" width="11" height="11" fill="#d1b6a0"/><rect x="595" y="560" width="11" height="11" fill="#ceb29b"/><rect x="605" y="560" width="11" height="11" fill="#cbaf98"/><rect x="615" y="560" width="11" height="11" fill="#c8ac94"/><rect x="625" y="560" width="11" height="11" fill="#c6a991"/><rect x="635" y="560" width="11" height="11" fill="#c4a78f"/><rect x="645" y="560" width="11" height="11" fill="#c2a58d"/><rect x="655" y="560" width="11" height="11" fill="#c0a38b"/><rect x="665" y="560" width="11" height="11" fill="#bfa189"/><rect x="675" y="560" width="11" height="11" fill="#bd9f87"/><rect x="685" y="560" width="11" height="11" fill="#bc9e86"/><rect x="695" y="560" width="11" height="11" fill="#ba9d85"/><rect x="705" y="560" width="11" height="11" fill="#b99c84"/><rect x="715" y="560" width="11" height="11" fill="#b89b83"/><rect x="725" y="560" width="11" height="11" fill="#b79a82"/><rect x="735" y="560" width="11" height="11" fill="#b79981"/><rect x="745" y="560" width="11" height="11" fill="#b69881"/><rect x="755" y="560" width="11" height="11" fill="#b59880"/><rect x="765" y="560" width="11" height="11" fill="#b59780"/><rect x="335" y="570" width="11" height="11" fill="#ceae96"/><rect x="345" y="570" width="11" height="11" fill="#ceae96"/><rect x="355" y="570" width="11" height="11" fill="#ceaf96"/><rect x="365" y="570" width="11" height="11" fill="#cfaf97"/><rect x="375" y="570" width="11" height="11" fill="#d0b098"/><rect x="385" y="570" width="11" height="11" fill="#d0b199"/><rect x="395" y="570" width="11" height="11" fill="#d1b39b"/><rect x="405" y="570" width="11" height="11" fill="#d2b49c"/><rect x="415" y="570" width="11" height="11" fill="#d3b59d"/><rect x="425" y="570" width="11" height="11" fill="#d3b69f"/><rect x="435" y="570" width="11" height="11" fill="#d4b7a0"/><rect x="445" y="570" width="11" height="11" fill="#d5b8a1"/><rect x="455" y="570" width="11" height="11" fill="#d6baa4"/><rect x="465" y="570" width="11" height="11" fill="#d7bca7"/><rect x="475" y="570" width="11" height="11" fill="#d8bfaa"/><rect x="485" y="570" width="11" height="11" fill="#dac1ad"/><rect x="495" y="570" width="11" height="11" fill="#dbc3af"/><rect x="505" y="570" width="11" height="11" fill="#dbc3b0"/><rect x="515" y="570" width="11" height="11" fill="#dbc3b0"/><rect x="525" y="570" width="11" height="11" fill="#dac3af"/><rect x="535" y="570" width="11" height="11" fill="#d9c1ad"/><rect x="545" y="570" width="11" height="11" fill="#d8bfab"/><rect x="555" y="570" width="11" height="11" fill="#d6bda8"/><rect x="565" y="570" width="11" height="11" fill="#d4bba6"/><rect x="575" y="570" width="11" height="11" fill="#d2b8a2"/><rect x="585" y="570" width="11" height="11" fill="#d0b59f"/><rect x="595" y="570" width="11" height="11" fill="#cdb29b"/><rect x="605" y="570" width="11" height="11" fill="#cbaf98"/><rect x="615" y="570" width="11" height="11" fill="#c9ac95"/><rect x="625" y="570" width="11" height="11" fill="#c7aa92"/><rect x="635" y="570" width="11" height="11" fill="#c5a890"/><rect x="645" y="570" width="11" height="11" fill="#c3a58e"/><rect x="655" y="570" width="11" height="11" fill="#c1a48c"/><rect x="665" y="570" width="11" height="11" fill="#bfa28a"/><rect x="675" y="570" width="11" height="11" fill="#bea088"/><rect x="685" y="570" width="11" height="11" fill="#bd9f87"/><rect x="695" y="570" width="11" height="11" fill="#bb9e86"/><rect x="705" y="570" width="11" height="11" fill="#ba9d85"/><rect x="715" y="570" width="11" height="11" fill="#b99c84"/><rect x="725" y="570" width="11" height="11" fill="#b89b83"/><rect x="735" y="570" width="11" height="11" fill="#b89a82"/><rect x="745" y="570" width="11" height="11" fill="#b79982"/><rect x="755" y="570" width="11" height="11" fill="#b69981"/><rect x="765" y="570" width="11" height="11" fill="#b69881"/><rect x="335" y="580" width="11" height="11" fill="#ceaf97"/><rect x="345" y="580" width="11" height="11" fill="#ceaf97"/><rect x="355" y="580" width="11" height="11" fill="#cfaf97"/><rect x="365" y="580" width="11" height="11" fill="#cfb098"/><rect x="375" y="580" width="11" height="11" fill="#d0b199"/><rect x="385" y="580" width="11" height="11" fill="#d0b29a"/><rect x="395" y="580" width="11" height="11" fill="#d1b39b"/><rect x="405" y="580" width="11" height="11" fill="#d2b49c"/><rect x="415" y="580" width="11" height="11" fill="#d2b59d"/><rect x="425" y="580" width="11" height="11" fill="#d3b69f"/><rect x="435" y="580" width="11" height="11" fill="#d4b7a0"/><rect x="445" y="580" width="11" height="11" fill="#d4b8a2"/><rect x="455" y="580" width="11" height="11" fill="#d5baa3"/><rect x="465" y="580" width="11" height="11" fill="#d6bba6"/><rect x="475" y="580" width="11" height="11" fill="#d7bda8"/><rect x="485" y="580" width="11" height="11" fill="#d8bfaa"/><rect x="495" y="580" width="11" height="11" fill="#d9c0ac"/><rect x="505" y="580" width="11" height="11" fill="#d9c0ac"/><rect x="515" y="580" width="11" height="11" fill="#d9c0ac"/><rect x="525" y="580" width="11" height="11" fill="#d8c0ac"/><rect x="535" y="580" width="11" height="11" fill="#d7bfaa"/><rect x="545" y="580" width="11" height="11" fill="#d6bda8"/><rect x="555" y="580" width="11" height="11" fill="#d5bba6"/><rect x="565" y="580" width="11" height="11" fill="#d3b9a4"/><rect x="575" y="580" width="11" height="11" fill="#d1b7a1"/><rect x="585" y="580" width="11" height="11" fill="#cfb49e"/><rect x="595" y="580" width="11" height="11" fill="#cdb19b"/><rect x="605" y="580" width="11" height="11" fill="#cbaf98"/><rect x="615" y="580" width="11" height="11" fill="#c9ac95"/><rect x="625" y="580" width="11" height="11" fill="#c7aa93"/><rect x="635" y="580" width="11" height="11" fill="#c5a891"/><rect x="645" y="580" width="11" height="11" fill="#c3a68e"/><rect x="655" y="580" width="11" height="11" fill="#c2a48d"/><rect x="665" y="580" width="11" height="11" fill="#c0a38b"/><rect x="675" y="580" width="11" height="11" fill="#bfa189"/><rect x="685" y="580" width="11" height="11" fill="#bda088"/><rect x="695" y="580" width="11" height="11" fill="#bc9f87"/><rect x="705" y="580" width="11" height="11" fill="#bb9e86"/><rect x="715" y="580" width="11" height="11" fill="#ba9d85"/><rect x="725" y="580" width="11" height="11" fill="#b99c84"/><rect x="735" y="580" width="11" height="11" fill="#b99b83"/><rect x="745" y="580" width="11" height="11" fill="#b89a83"/><rect x="755" y="580" width="11" height="11" fill="#b79a82"/><rect x="765" y="580" width="11" height="11" fill="#b79982"/></g></g>
<polyline points="347.4,521.5 351.8,519.9 357.0,518.0 362.3,516.3 367.9,514.7 373.9,513.0 380.2,511.4 386.3,509.8 392.3,508.3 398.3,506.9 404.3,505.4 410.3,503.5 416.3,501.1 422.3,498.3 428.3,495.3 434.3,492.3 440.3,489.3 446.3,486.3 452.3,483.2 458.3,480.3 464.3,477.5 470.3,474.9 476.3,472.2 482.3,469.5 488.3,466.6 494.3,463.6 500.3,460.6 506.3,457.6 512.3,454.6 518.3,451.7 524.3,448.7 530.3,445.6 536.3,442.4 542.3,439.0 548.3,435.6 554.3,432.4 560.3,429.3 566.3,426.3 572.3,423.4 578.3,420.5 584.3,417.7 590.3,415.0 596.3,412.4 602.3,409.8 608.2,407.4 614.0,405.0 620.0,402.7 626.3,400.4 633.1,398.1 640.3,395.8 647.5,393.4 654.3,390.7 660.6,387.6 666.5,384.2 672.4,380.7 678.3,377.3 684.4,374.0 690.5,370.7 696.6,367.5 702.3,364.3 707.9,361.0 713.3,357.7 718.2,354.7 722.3,352.3 725.3,350.7" stroke="#ede2d5" stroke-width="1.4" fill="none" opacity="0.8"/>
<polyline points="342.0,520.0 345.5,518.9 350.5,517.3 356.2,515.5 362.0,513.8 367.7,512.2 373.8,510.6 379.9,509.0 386.0,507.4 392.0,505.9 398.0,504.5 404.0,502.9 410.0,501.0 416.0,498.6 422.0,495.8" stroke="#6f6560" stroke-width="1.7" fill="none"/>
<polyline points="379.0,550.0 386.2,548.8 396.4,547.2 408.2,545.2 420.0,543.0 432.1,540.5 445.1,537.8 458.0,534.8 470.0,532.0 480.8,529.3 490.8,526.6 500.4,523.9 510.0,521.0 519.3,518.1 528.2,515.3 537.6,512.1 548.0,508.0 560.5,502.6 574.5,496.3 588.2,489.8 600.0,484.0 609.2,479.0 616.9,474.4 623.6,470.1 630.0,466.0 635.7,462.1 640.5,458.6 645.6,455.2 652.0,452.0 660.7,448.8 670.9,445.7 681.1,443.0 690.0,441.0 697.5,440.0 704.4,439.8 710.0,439.9 714.0,440.0" stroke="#a38c76" stroke-width="0.8" fill="none" opacity="0.6"/>
<polygon points="601.4,542.5 603.3,544.4 606.0,543.2 610.0,541.3 614.0,539.4 618.0,537.4 622.0,535.2 626.0,532.8 630.0,530.2 634.0,527.5 638.0,524.8 642.0,522.1 646.0,519.4 650.0,516.6 654.0,513.6 658.0,510.5 662.0,507.2 666.0,503.8 670.0,500.0 674.1,495.7 678.4,490.9 681.8,487.0 672.0,485.0 577.4,529.2 601.4,542.5" fill="#ebebea"/>
<g fill="#3a3535" font-family="Liberation Serif, serif" clip-path="url(#clab)">
<text transform="translate(687.5,489) rotate(156)" font-size="14" letter-spacing="0.9">JIMMY CH</text>
<text transform="translate(640,501.5) rotate(156)" font-size="5.2" letter-spacing="0.8">LONDON</text>
</g>
<g fill="#8d8790" stroke="#3a3535" stroke-width="1.4">
<ellipse cx="607" cy="530" rx="6.2" ry="3.5" transform="rotate(-25 607 530)"/>
<ellipse cx="617.4" cy="524.4" rx="6.2" ry="3.5" transform="rotate(-25 617.4 524.4)"/>
</g>
<polygon points="772.0,512.0 770.0,526.4 760.0,535.2 744.0,542.4 726.0,550.0 702.0,558.0 692.0,555.0 692.0,553.0 718.0,539.5 740.0,529.6 756.0,521.6 770.0,512.0" fill="#2e2828"/>
<ellipse cx="291.8" cy="649.0" rx="4.8" ry="4.4" fill="url(#gs)"/>
<ellipse cx="304.2" cy="652.2" rx="4.8" ry="4.4" fill="url(#gs)"/>
<ellipse cx="317.0" cy="653.4" rx="4.8" ry="4.4" fill="url(#gs)"/>
<ellipse cx="329.8" cy="653.4" rx="4.8" ry="4.4" fill="url(#gs)"/>
<ellipse cx="342.2" cy="652.6" rx="4.8" ry="4.4" fill="url(#gs)"/>
<ellipse cx="355.4" cy="653.8" rx="4.8" ry="4.4" fill="url(#gs)"/>
<ellipse cx="290.6" cy="635.4" rx="4.8" ry="4.8" fill="url(#gs)"/>
<ellipse cx="302.6" cy="639.4" rx="4.8" ry="4.8" fill="url(#gs)"/>
<ellipse cx="314.6" cy="639.8" rx="4.8" ry="4.8" fill="url(#gs)"/>
<ellipse cx="327.4" cy="640.6" rx="4.8" ry="4.8" fill="url(#gs)"/>
<ellipse cx="339.4" cy="641.4" rx="4.8" ry="4.8" fill="url(#gs)"/>
<ellipse cx="356.2" cy="642.2" rx="4.8" ry="4.8" fill="url(#gs)"/>
<ellipse cx="292.6" cy="623.4" rx="4.8" ry="4.4" fill="url(#gs)"/>
<ellipse cx="305.4" cy="626.6" rx="4.8" ry="4.8" fill="url(#gs)"/>
<ellipse cx="318.6" cy="628.6" rx="4.8" ry="4.8" fill="url(#gs)"/>
<ellipse cx="333.0" cy="629.4" rx="4.8" ry="4.8" fill="url(#gs)"/>
<ellipse cx="347.8" cy="632.2" rx="4.8" ry="4.8" fill="url(#gs)"/>
<ellipse cx="357.8" cy="627.8" rx="4.8" ry="4.8" fill="url(#gs)"/>
<ellipse cx="287.4" cy="613.4" rx="3.6" ry="4.0" fill="url(#gs)"/>
<ellipse cx="299.4" cy="615.0" rx="4.8" ry="4.0" fill="url(#gs)"/>
<ellipse cx="314.6" cy="616.2" rx="4.8" ry="4.0" fill="url(#gs)"/>
<ellipse cx="324.6" cy="619.4" rx="4.8" ry="4.4" fill="url(#gs)"/>
<ellipse cx="342.6" cy="619.0" rx="4.8" ry="4.8" fill="url(#gs)"/>
<ellipse cx="355.0" cy="613.4" rx="6.8" ry="6.8" fill="url(#gs)"/>
<ellipse cx="294.2" cy="604.6" rx="4.8" ry="3.6" fill="url(#gs)"/>
<ellipse cx="306.2" cy="607.4" rx="4.8" ry="3.6" fill="url(#gs)"/>
<ellipse cx="319.8" cy="605.8" rx="4.8" ry="4.0" fill="url(#gs)"/>
<ellipse cx="332.6" cy="610.6" rx="4.8" ry="4.0" fill="url(#gs)"/>
<ellipse cx="341.8" cy="602.6" rx="4.8" ry="4.0" fill="url(#gs)"/>
<ellipse cx="299.4" cy="595.8" rx="4.8" ry="3.6" fill="url(#gs)"/>
<ellipse cx="310.6" cy="599.4" rx="4.8" ry="3.6" fill="url(#gs)"/>
<ellipse cx="329.0" cy="597.4" rx="4.8" ry="3.6" fill="url(#gs)"/>
<ellipse cx="352.2" cy="596.2" rx="6.8" ry="6.0" fill="url(#gs)"/>
<ellipse cx="319.4" cy="592.2" rx="4.8" ry="3.6" fill="url(#gs)"/>
<ellipse cx="333.0" cy="589.0" rx="6.8" ry="4.8" fill="url(#gs)"/>
<ellipse cx="358.4" cy="582.0" rx="6.8" ry="4.8" fill="url(#gs)"/>
<ellipse cx="368.2" cy="652.2" rx="4.8" ry="4.4" fill="url(#gs)"/>
<ellipse cx="382.2" cy="651.4" rx="6.4" ry="5.2" fill="url(#gs)"/>
<ellipse cx="398.6" cy="651.8" rx="4.8" ry="4.4" fill="url(#gs)"/>
<ellipse cx="410.6" cy="651.4" rx="4.8" ry="4.4" fill="url(#gs)"/>
<ellipse cx="422.6" cy="650.6" rx="4.8" ry="4.4" fill="url(#gs)"/>
<ellipse cx="435.4" cy="650.2" rx="4.8" ry="4.4" fill="url(#gs)"/>
<ellipse cx="369.4" cy="640.2" rx="6.4" ry="6.4" fill="url(#gs)"/>
<ellipse cx="385.4" cy="633.0" rx="6.8" ry="6.8" fill="url(#gs)"/>
<ellipse cx="399.4" cy="639.0" rx="4.8" ry="4.8" fill="url(#gs)"/>
<ellipse cx="414.6" cy="641.8" rx="4.8" ry="4.8" fill="url(#gs)"/>
<ellipse cx="427.4" cy="639.4" rx="4.8" ry="4.8" fill="url(#gs)"/>
<ellipse cx="440.2" cy="639.0" rx="4.4" ry="4.4" fill="url(#gs)"/>
<ellipse cx="371.0" cy="621.4" rx="6.8" ry="6.8" fill="url(#gs)"/>
<ellipse cx="401.0" cy="625.4" rx="4.8" ry="4.8" fill="url(#gs)"/>
<ellipse cx="415.0" cy="627.4" rx="4.8" ry="4.8" fill="url(#gs)"/>
<ellipse cx="427.0" cy="625.4" rx="4.8" ry="4.8" fill="url(#gs)"/>
<ellipse cx="441.4" cy="625.0" rx="4.0" ry="4.8" fill="url(#gs)"/>
<ellipse cx="371.4" cy="602.2" rx="6.8" ry="6.8" fill="url(#gs)"/>
<ellipse cx="387.0" cy="613.0" rx="6.8" ry="6.8" fill="url(#gs)"/>
<ellipse cx="404.2" cy="612.2" rx="4.8" ry="4.8" fill="url(#gs)"/>
<ellipse cx="419.0" cy="615.4" rx="4.8" ry="4.8" fill="url(#gs)"/>
<ellipse cx="435.4" cy="611.4" rx="4.8" ry="4.8" fill="url(#gs)"/>
<ellipse cx="376.6" cy="588.6" rx="6.8" ry="5.6" fill="url(#gs)"/>
<ellipse cx="392.2" cy="595.8" rx="6.8" ry="6.0" fill="url(#gs)"/>
<ellipse cx="408.2" cy="599.4" rx="4.8" ry="4.8" fill="url(#gs)"/>
<ellipse cx="423.8" cy="603.8" rx="4.8" ry="4.8" fill="url(#gs)"/>
<ellipse cx="422.2" cy="589.8" rx="8.8" ry="7.7" fill="url(#gc)" stroke="#2e2828" stroke-width="0.5"/>
<path d="M421.7,589.5 L423.5,597.2 L428.8,594.4 Z" fill="#9e9994" opacity="0.55"/>
<ellipse cx="448.6" cy="597.8" rx="7.2" ry="8.4" fill="url(#gc)" stroke="#2e2828" stroke-width="0.5"/>
<path d="M448.1,597.5 L449.7,605.8 L454.0,602.8 Z" fill="#9e9994" opacity="0.55"/>
<ellipse cx="470.6" cy="603.8" rx="7.6" ry="8.4" fill="url(#gc)" stroke="#2e2828" stroke-width="0.5"/>
<path d="M470.1,603.5 L471.7,611.8 L476.3,608.8 Z" fill="#9e9994" opacity="0.55"/>
<ellipse cx="492.6" cy="605.4" rx="7.2" ry="8.4" fill="url(#gc)" stroke="#2e2828" stroke-width="0.5"/>
<path d="M492.1,605.1 L493.7,613.4 L498.0,610.4 Z" fill="#9e9994" opacity="0.55"/>
<ellipse cx="513.4" cy="604.6" rx="7.2" ry="8.4" fill="url(#gc)" stroke="#2e2828" stroke-width="0.5"/>
<path d="M512.9,604.3 L514.5,612.6 L518.8,609.6 Z" fill="#9e9994" opacity="0.55"/>
<ellipse cx="450.6" cy="613.0" rx="4.4" ry="4.4" fill="url(#gs)"/>
<ellipse cx="467.0" cy="620.2" rx="4.4" ry="4.4" fill="url(#gs)"/>
<ellipse cx="481.8" cy="625.0" rx="6.4" ry="6.8" fill="url(#gs)"/>
<ellipse cx="498.6" cy="625.8" rx="6.4" ry="6.8" fill="url(#gs)"/>
<ellipse cx="514.6" cy="623.4" rx="6.0" ry="6.8" fill="url(#gs)"/>
<ellipse cx="454.6" cy="627.0" rx="4.4" ry="4.4" fill="url(#gs)"/>
<ellipse cx="466.6" cy="633.0" rx="4.4" ry="4.4" fill="url(#gs)"/>
<ellipse cx="453.4" cy="639.8" rx="4.4" ry="4.4" fill="url(#gs)"/>
<ellipse cx="474.2" cy="645.0" rx="6.8" ry="5.6" fill="url(#gs)"/>
<ellipse cx="488.6" cy="644.2" rx="6.8" ry="5.6" fill="url(#gs)"/>
<ellipse cx="504.6" cy="641.4" rx="6.8" ry="5.2" fill="url(#gs)"/>
<ellipse cx="519.4" cy="638.2" rx="6.0" ry="5.2" fill="url(#gs)"/>
<ellipse cx="448.2" cy="649.4" rx="4.8" ry="3.6" fill="url(#gs)"/>
<ellipse cx="460.6" cy="648.2" rx="4.8" ry="3.6" fill="url(#gs)"/>
<ellipse cx="533.4" cy="601.6" rx="7.2" ry="8.4" fill="url(#gc)" stroke="#2e2828" stroke-width="0.5"/>
<path d="M532.9,601.3 L534.5,609.6 L538.8,606.6 Z" fill="#9e9994" opacity="0.55"/>
<ellipse cx="551.8" cy="597.6" rx="6.4" ry="8.0" fill="url(#gc)" stroke="#2e2828" stroke-width="0.5"/>
<path d="M551.3,597.3 L552.8,605.2 L556.6,602.4 Z" fill="#9e9994" opacity="0.55"/>
<ellipse cx="569.4" cy="591.6" rx="6.4" ry="8.0" fill="url(#gc)" stroke="#2e2828" stroke-width="0.5"/>
<path d="M568.9,591.3 L570.4,599.2 L574.2,596.4 Z" fill="#9e9994" opacity="0.55"/>
<ellipse cx="587.0" cy="585.2" rx="6.4" ry="8.0" fill="url(#gc)" stroke="#2e2828" stroke-width="0.5"/>
<path d="M586.5,584.9 L588.0,592.8 L591.8,590.0 Z" fill="#9e9994" opacity="0.55"/>
<ellipse cx="604.8" cy="574.4" rx="6.0" ry="7.2" fill="url(#gc)" stroke="#2e2828" stroke-width="0.5"/>
<path d="M604.3,574.1 L605.7,581.2 L609.3,578.7 Z" fill="#9e9994" opacity="0.55"/>
<ellipse cx="530.2" cy="619.6" rx="5.6" ry="6.4" fill="url(#gs)"/>
<ellipse cx="545.8" cy="616.8" rx="5.6" ry="6.8" fill="url(#gs)"/>
<ellipse cx="559.8" cy="613.2" rx="5.6" ry="6.4" fill="url(#gs)"/>
<ellipse cx="573.4" cy="608.8" rx="5.2" ry="6.4" fill="url(#gs)"/>
<ellipse cx="584.6" cy="604.4" rx="5.2" ry="6.4" fill="url(#gs)"/>
<ellipse cx="597.4" cy="594.4" rx="3.6" ry="4.4" fill="url(#gs)"/>
<ellipse cx="533.8" cy="634.4" rx="5.2" ry="4.4" fill="url(#gs)"/>
<ellipse cx="547.4" cy="630.8" rx="5.2" ry="4.4" fill="url(#gs)"/>
<ellipse cx="559.8" cy="627.2" rx="4.8" ry="4.0" fill="url(#gs)"/>
<ellipse cx="568.2" cy="621.6" rx="1.8" ry="1.8" fill="url(#gs)"/>
<ellipse cx="573.0" cy="618.4" rx="1.8" ry="1.8" fill="url(#gs)"/>
<ellipse cx="579.4" cy="615.2" rx="1.8" ry="1.8" fill="url(#gs)"/>
<ellipse cx="621.2" cy="568.8" rx="6.4" ry="8.0" fill="url(#gc)" stroke="#2e2828" stroke-width="0.5"/>
<path d="M620.7,568.5 L622.2,576.4 L626.0,573.6 Z" fill="#9e9994" opacity="0.55"/>
<ellipse cx="637.6" cy="558.8" rx="6.4" ry="8.0" fill="url(#gc)" stroke="#2e2828" stroke-width="0.5"/>
<path d="M637.1,558.5 L638.6,566.4 L642.4,563.6 Z" fill="#9e9994" opacity="0.55"/>
<ellipse cx="654.0" cy="547.6" rx="6.4" ry="8.4" fill="url(#gc)" stroke="#2e2828" stroke-width="0.5"/>
<path d="M653.5,547.3 L655.0,555.6 L658.8,552.6 Z" fill="#9e9994" opacity="0.55"/>
<ellipse cx="668.8" cy="536.0" rx="6.4" ry="8.4" fill="url(#gc)" stroke="#2e2828" stroke-width="0.5"/>
<path d="M668.3,535.7 L669.8,544.0 L673.6,541.0 Z" fill="#9e9994" opacity="0.55"/>
<ellipse cx="631.4" cy="578.0" rx="3.6" ry="3.6" fill="url(#gs)"/>
<ellipse cx="639.6" cy="572.4" rx="3.6" ry="3.6" fill="url(#gs)"/>
<ellipse cx="648.0" cy="566.8" rx="4.4" ry="4.0" fill="url(#gs)"/>
<ellipse cx="660.0" cy="560.0" rx="4.8" ry="4.4" fill="url(#gs)"/>
<ellipse cx="672.0" cy="551.2" rx="4.8" ry="5.2" fill="url(#gs)"/>
<ellipse cx="684.4" cy="522.0" rx="6.0" ry="8.0" fill="url(#gc)" stroke="#2e2828" stroke-width="0.5"/>
<path d="M683.9,521.7 L685.3,529.6 L688.9,526.8 Z" fill="#9e9994" opacity="0.55"/>
<ellipse cx="696.4" cy="510.4" rx="6.0" ry="8.0" fill="url(#gc)" stroke="#2e2828" stroke-width="0.5"/>
<path d="M695.9,510.1 L697.3,518.0 L700.9,515.2 Z" fill="#9e9994" opacity="0.55"/>
<ellipse cx="708.0" cy="496.8" rx="6.0" ry="8.0" fill="url(#gc)" stroke="#2e2828" stroke-width="0.5"/>
<path d="M707.5,496.5 L708.9,504.4 L712.5,501.6 Z" fill="#9e9994" opacity="0.55"/>
<ellipse cx="716.4" cy="483.2" rx="6.0" ry="7.6" fill="url(#gc)" stroke="#2e2828" stroke-width="0.5"/>
<path d="M715.9,482.9 L717.3,490.4 L720.9,487.8 Z" fill="#9e9994" opacity="0.55"/>
<ellipse cx="688.0" cy="538.8" rx="4.4" ry="5.6" fill="url(#gs)"/>
<ellipse cx="700.4" cy="527.6" rx="4.4" ry="6.0" fill="url(#gs)"/>
<ellipse cx="711.6" cy="517.6" rx="4.4" ry="6.4" fill="url(#gs)"/>
<ellipse cx="716.0" cy="529.6" rx="4.0" ry="6.0" fill="url(#gs)"/>
<ellipse cx="744.8" cy="445.6" rx="6.0" ry="6.8" fill="url(#gc)" stroke="#2e2828" stroke-width="0.5"/>
<path d="M744.3,445.3 L745.7,452.1 L749.3,449.7 Z" fill="#9e9994" opacity="0.55"/>
<ellipse cx="736.4" cy="457.6" rx="6.0" ry="7.2" fill="url(#gc)" stroke="#2e2828" stroke-width="0.5"/>
<path d="M735.9,457.3 L737.3,464.4 L740.9,461.9 Z" fill="#9e9994" opacity="0.55"/>
<ellipse cx="727.6" cy="470.8" rx="6.0" ry="7.6" fill="url(#gc)" stroke="#2e2828" stroke-width="0.5"/>
<path d="M727.1,470.5 L728.5,478.0 L732.1,475.4 Z" fill="#9e9994" opacity="0.55"/>
<ellipse cx="762.4" cy="445.2" rx="4.8" ry="6.0" fill="url(#gs)"/>
<ellipse cx="756.8" cy="456.0" rx="4.8" ry="6.0" fill="url(#gs)"/>
<ellipse cx="750.0" cy="464.8" rx="4.8" ry="6.0" fill="url(#gs)"/>
<ellipse cx="743.6" cy="475.2" rx="4.8" ry="6.4" fill="url(#gs)"/>
<ellipse cx="736.8" cy="483.2" rx="4.0" ry="4.8" fill="url(#gs)"/>
<ellipse cx="731.2" cy="490.0" rx="3.6" ry="4.4" fill="url(#gs)"/>
<ellipse cx="724.4" cy="497.6" rx="3.6" ry="4.4" fill="url(#gs)"/>
<ellipse cx="718.0" cy="506.4" rx="3.6" ry="4.4" fill="url(#gs)"/>
<ellipse cx="772.8" cy="450.0" rx="4.4" ry="6.0" fill="url(#gs)"/>
<ellipse cx="767.6" cy="460.8" rx="4.4" ry="6.0" fill="url(#gs)"/>
<ellipse cx="761.6" cy="468.0" rx="3.6" ry="4.4" fill="url(#gs)"/>
<ellipse cx="755.6" cy="475.2" rx="3.6" ry="4.4" fill="url(#gs)"/>
<ellipse cx="750.8" cy="484.0" rx="3.6" ry="4.4" fill="url(#gs)"/>
<ellipse cx="744.8" cy="490.4" rx="3.6" ry="4.4" fill="url(#gs)"/>
<ellipse cx="737.6" cy="497.6" rx="3.6" ry="4.4" fill="url(#gs)"/>
<ellipse cx="731.2" cy="503.2" rx="3.6" ry="4.4" fill="url(#gs)"/>
<ellipse cx="723.6" cy="510.4" rx="3.6" ry="4.4" fill="url(#gs)"/>
<ellipse cx="782.4" cy="452.8" rx="4.0" ry="6.0" fill="url(#gs)"/>
<ellipse cx="777.6" cy="461.6" rx="3.6" ry="4.8" fill="url(#gs)"/>
<ellipse cx="773.2" cy="468.0" rx="3.2" ry="4.0" fill="url(#gs)"/>
<ellipse cx="768.8" cy="472.8" rx="3.2" ry="4.0" fill="url(#gs)"/>
<ellipse cx="764.0" cy="480.0" rx="3.2" ry="4.4" fill="url(#gs)"/>
<ellipse cx="758.4" cy="488.0" rx="3.2" ry="4.4" fill="url(#gs)"/>
<ellipse cx="752.8" cy="495.2" rx="3.2" ry="4.4" fill="url(#gs)"/>
<ellipse cx="746.8" cy="502.0" rx="3.2" ry="4.4" fill="url(#gs)"/>
<ellipse cx="740.0" cy="509.2" rx="3.2" ry="4.4" fill="url(#gs)"/>
<ellipse cx="731.6" cy="514.0" rx="3.2" ry="4.4" fill="url(#gs)"/>
<ellipse cx="785.6" cy="461.6" rx="2.8" ry="4.4" fill="url(#gs)"/>
<ellipse cx="781.2" cy="469.6" rx="2.8" ry="4.0" fill="url(#gs)"/>
<ellipse cx="776.4" cy="476.8" rx="2.8" ry="3.6" fill="url(#gs)"/>
<ellipse cx="772.0" cy="480.8" rx="2.8" ry="4.0" fill="url(#gs)"/>
<ellipse cx="766.4" cy="491.2" rx="2.8" ry="3.6" fill="url(#gs)"/>
<ellipse cx="760.0" cy="497.6" rx="2.8" ry="3.6" fill="url(#gs)"/>
<ellipse cx="753.6" cy="504.8" rx="2.8" ry="3.6" fill="url(#gs)"/>
<ellipse cx="747.6" cy="511.2" rx="2.8" ry="3.6" fill="url(#gs)"/>
<ellipse cx="741.6" cy="515.2" rx="2.8" ry="3.2" fill="url(#gs)"/>
<ellipse cx="784.0" cy="473.6" rx="2.4" ry="3.2" fill="url(#gs)"/>
<ellipse cx="779.2" cy="483.2" rx="2.4" ry="3.2" fill="url(#gs)"/>
<ellipse cx="775.2" cy="489.6" rx="2.4" ry="3.2" fill="url(#gs)"/>
<ellipse cx="769.6" cy="496.0" rx="2.4" ry="3.2" fill="url(#gs)"/>
<ellipse cx="763.2" cy="503.2" rx="2.4" ry="3.2" fill="url(#gs)"/>
<ellipse cx="756.8" cy="510.4" rx="2.4" ry="3.2" fill="url(#gs)"/>
<ellipse cx="786.4" cy="466.4" rx="1.6" ry="2.4" fill="url(#gs)"/>
<ellipse cx="782.4" cy="478.4" rx="2.0" ry="2.8" fill="url(#gs)"/>
<ellipse cx="778.4" cy="491.2" rx="2.0" ry="2.8" fill="url(#gs)"/>
<ellipse cx="772.8" cy="501.6" rx="2.0" ry="2.8" fill="url(#gs)"/>
<ellipse cx="766.4" cy="508.8" rx="2.0" ry="2.8" fill="url(#gs)"/>
<ellipse cx="775.2" cy="441.6" rx="4.4" ry="2.4" fill="url(#gs)"/>
<ellipse cx="784.0" cy="441.6" rx="4.0" ry="3.2" fill="url(#gs)"/>
<polygon points="773.9,367.6 780.2,362.6 776.1,357.7" fill="url(#gc)"/>
<polygon points="773.5,382.9 781.6,377.0 776.3,371.2" fill="url(#gc)"/>
<ellipse cx="772.1" cy="390.5" rx="5.9" ry="6.8" fill="url(#gc)" stroke="#2e2828" stroke-width="0.5"/>
<path d="M771.6,390.2 L773.0,396.9 L776.5,394.6 Z" fill="#9e9994" opacity="0.55"/>
<ellipse cx="766.7" cy="404.0" rx="5.9" ry="7.2" fill="url(#gc)" stroke="#2e2828" stroke-width="0.5"/>
<path d="M766.2,403.7 L767.6,410.8 L771.1,408.3 Z" fill="#9e9994" opacity="0.55"/>
<ellipse cx="759.5" cy="418.4" rx="5.9" ry="7.2" fill="url(#gc)" stroke="#2e2828" stroke-width="0.5"/>
<path d="M759.0,418.1 L760.4,425.2 L763.9,422.7 Z" fill="#9e9994" opacity="0.55"/>
<ellipse cx="752.3" cy="431.9" rx="5.9" ry="7.2" fill="url(#gc)" stroke="#2e2828" stroke-width="0.5"/>
<path d="M751.8,431.6 L753.2,438.7 L756.7,436.2 Z" fill="#9e9994" opacity="0.55"/>
<ellipse cx="779.3" cy="394.1" rx="2.3" ry="3.6" fill="url(#gs)"/>
<ellipse cx="777.1" cy="401.3" rx="3.6" ry="4.1" fill="url(#gs)"/>
<ellipse cx="775.3" cy="409.0" rx="3.6" ry="4.1" fill="url(#gs)"/>
<ellipse cx="772.1" cy="417.5" rx="3.6" ry="4.1" fill="url(#gs)"/>
<ellipse cx="768.5" cy="425.6" rx="3.6" ry="4.1" fill="url(#gs)"/>
<ellipse cx="764.9" cy="434.6" rx="3.6" ry="4.1" fill="url(#gs)"/>
<ellipse cx="781.6" cy="408.5" rx="3.2" ry="4.1" fill="url(#gs)"/>
<ellipse cx="780.2" cy="417.1" rx="3.2" ry="4.1" fill="url(#gs)"/>
<ellipse cx="778.0" cy="425.6" rx="3.2" ry="4.1" fill="url(#gs)"/>
<ellipse cx="774.8" cy="434.6" rx="3.2" ry="3.6" fill="url(#gs)"/>
<ellipse cx="784.7" cy="426.5" rx="2.7" ry="4.5" fill="url(#gs)"/>
<ellipse cx="783.8" cy="434.6" rx="2.7" ry="3.6" fill="url(#gs)"/>
<ellipse cx="308.8" cy="566.8" rx="6.8" ry="4.4" fill="url(#gs)"/>
<polygon points="292.8,557.2 304.8,552.8 297.0,548.4" fill="url(#gc)"/>
<polygon points="280.0,560.8 288.8,557.6 283.1,554.4" fill="url(#gc)"/>
<ellipse cx="314.8" cy="556.8" rx="7.6" ry="5.2" fill="url(#gc)" stroke="#2e2828" stroke-width="0.5"/>
<path d="M314.3,556.5 L315.9,561.7 L320.5,559.9 Z" fill="#9e9994" opacity="0.55"/>
<ellipse cx="334.4" cy="562.4" rx="8.4" ry="6.0" fill="url(#gc)" stroke="#2e2828" stroke-width="0.5"/>
<path d="M333.9,562.1 L335.7,568.1 L340.7,566.0 Z" fill="#9e9994" opacity="0.55"/>
<ellipse cx="354.8" cy="569.2" rx="8.4" ry="6.4" fill="url(#gc)" stroke="#2e2828" stroke-width="0.5"/>
<path d="M354.3,568.9 L356.1,575.3 L361.1,573.0 Z" fill="#9e9994" opacity="0.55"/>
<ellipse cx="374.2" cy="575.0" rx="8.4" ry="7.4" fill="url(#gc)" stroke="#2e2828" stroke-width="0.5"/>
<path d="M373.7,574.7 L375.5,582.0 L380.5,579.4 Z" fill="#9e9994" opacity="0.55"/>
<ellipse cx="321.6" cy="535.6" rx="4.4" ry="2.8" fill="url(#gs)"/>
<ellipse cx="328.4" cy="540.8" rx="4.4" ry="3.2" fill="url(#gs)"/>
<ellipse cx="336.8" cy="546.0" rx="4.4" ry="3.2" fill="url(#gs)"/>
<ellipse cx="345.2" cy="551.6" rx="4.4" ry="3.2" fill="url(#gs)"/>
<ellipse cx="354.4" cy="557.2" rx="4.4" ry="3.6" fill="url(#gs)"/>
<ellipse cx="315.6" cy="543.6" rx="4.4" ry="2.8" fill="url(#gs)"/>
<ellipse cx="324.0" cy="548.8" rx="4.4" ry="3.2" fill="url(#gs)"/>
<ellipse cx="324.8" cy="571.6" rx="6.8" ry="4.8" fill="url(#gs)"/>
<ellipse cx="341.6" cy="576.4" rx="6.8" ry="4.8" fill="url(#gs)"/>
<ellipse cx="316.8" cy="583.6" rx="6.8" ry="4.4" fill="url(#gs)"/>
<ellipse cx="398.2" cy="583.0" rx="8.8" ry="7.7" fill="url(#gc)" stroke="#2e2828" stroke-width="0.5"/>
<path d="M397.7,582.7 L399.5,590.4 L404.8,587.6 Z" fill="#9e9994" opacity="0.55"/>
<ellipse cx="704.4" cy="536.4" rx="3.6" ry="4.4" fill="url(#gs)"/>
<ellipse cx="693.2" cy="544.4" rx="3.6" ry="3.6" fill="url(#gs)"/>
<ellipse cx="681.2" cy="550.8" rx="3.6" ry="3.6" fill="url(#gs)"/>
<ellipse cx="725.6" cy="520.0" rx="3.2" ry="4.0" fill="url(#gs)"/>
<ellipse cx="734.0" cy="520.4" rx="2.8" ry="3.6" fill="url(#gs)"/>
<ellipse cx="726.0" cy="528.4" rx="2.8" ry="3.2" fill="url(#gs)"/>
<ellipse cx="714.8" cy="534.8" rx="2.8" ry="3.2" fill="url(#gs)"/>
<ellipse cx="703.6" cy="542.8" rx="2.8" ry="3.2" fill="url(#gs)"/>
<ellipse cx="691.6" cy="550.0" rx="2.8" ry="2.8" fill="url(#gs)"/>
<ellipse cx="739.6" cy="523.6" rx="2.4" ry="2.8" fill="url(#gs)"/>
<ellipse cx="746.8" cy="515.6" rx="2.4" ry="3.6" fill="url(#gs)"/>
<ellipse cx="731.6" cy="530.0" rx="2.4" ry="2.8" fill="url(#gs)"/>
<ellipse cx="670.0" cy="558.0" rx="3.2" ry="2.8" fill="url(#gs)"/>
<ellipse cx="677.2" cy="555.6" rx="3.2" ry="2.8" fill="url(#gs)"/>
<ellipse cx="740.0" cy="518.4" rx="2.8" ry="3.6" fill="url(#gs)"/>
<ellipse cx="776.8" cy="486.4" rx="2.4" ry="3.2" fill="url(#gs)"/>
<ellipse cx="772.0" cy="493.6" rx="2.4" ry="3.2" fill="url(#gs)"/>
<ellipse cx="766.4" cy="501.6" rx="2.4" ry="3.2" fill="url(#gs)"/>
<ellipse cx="748.0" cy="519.2" rx="2.4" ry="2.8" fill="url(#gs)"/>
<ellipse cx="726.4" cy="532.0" rx="2.4" ry="2.8" fill="url(#gs)"/>
<ellipse cx="720.0" cy="536.0" rx="2.4" ry="2.4" fill="url(#gs)"/>
<ellipse cx="776.8" cy="495.2" rx="2.0" ry="2.4" fill="url(#gs)"/>
<ellipse cx="759.2" cy="512.8" rx="2.0" ry="2.4" fill="url(#gs)"/>
<ellipse cx="753.6" cy="517.6" rx="2.0" ry="2.4" fill="url(#gs)"/>
<ellipse cx="746.4" cy="524.0" rx="2.0" ry="2.4" fill="url(#gs)"/>
<ellipse cx="739.2" cy="528.0" rx="2.0" ry="2.4" fill="url(#gs)"/>
<ellipse cx="606.8" cy="591.2" rx="3.6" ry="3.6" fill="url(#gs)"/>
<ellipse cx="614.6" cy="587.6" rx="3.6" ry="3.6" fill="url(#gs)"/>
<ellipse cx="623.0" cy="582.8" rx="3.6" ry="3.6" fill="url(#gs)"/>
<ellipse cx="216.8" cy="638.6" rx="4.6" ry="4.3" fill="url(#gs)"/>
<ellipse cx="224.4" cy="630.0" rx="4.0" ry="3.0" fill="url(#gs)"/>
<ellipse cx="232.0" cy="621.4" rx="3.2" ry="2.5" fill="url(#gs)"/>
<ellipse cx="239.6" cy="612.8" rx="3.2" ry="2.5" fill="url(#gs)"/>
<ellipse cx="247.2" cy="604.2" rx="3.2" ry="2.5" fill="url(#gs)"/>
<ellipse cx="254.8" cy="595.6" rx="3.2" ry="2.5" fill="url(#gs)"/>
<ellipse cx="262.4" cy="587.0" rx="3.2" ry="2.5" fill="url(#gs)"/>
<ellipse cx="270.0" cy="578.4" rx="3.2" ry="2.5" fill="url(#gs)"/>
<ellipse cx="277.6" cy="569.8" rx="3.2" ry="2.5" fill="url(#gs)"/>
<ellipse cx="300.4" cy="544.0" rx="3.2" ry="2.5" fill="url(#gs)"/>
<ellipse cx="221.6" cy="648.2" rx="4.6" ry="4.3" fill="url(#gs)"/>
<ellipse cx="229.2" cy="639.6" rx="4.7" ry="3.5" fill="url(#gs)"/>
<ellipse cx="236.8" cy="631.0" rx="4.7" ry="3.5" fill="url(#gs)"/>
<ellipse cx="244.4" cy="622.4" rx="4.7" ry="3.5" fill="url(#gs)"/>
<ellipse cx="252.0" cy="613.9" rx="4.7" ry="3.5" fill="url(#gs)"/>
<ellipse cx="259.6" cy="605.2" rx="4.7" ry="3.5" fill="url(#gs)"/>
<ellipse cx="267.2" cy="596.6" rx="4.7" ry="3.5" fill="url(#gs)"/>
<ellipse cx="274.8" cy="588.0" rx="4.7" ry="3.5" fill="url(#gs)"/>
<ellipse cx="282.4" cy="579.4" rx="4.7" ry="3.5" fill="url(#gs)"/>
<ellipse cx="290.0" cy="570.9" rx="4.7" ry="3.5" fill="url(#gs)"/>
<ellipse cx="297.6" cy="562.2" rx="4.7" ry="3.5" fill="url(#gs)"/>
<ellipse cx="234.0" cy="649.3" rx="4.6" ry="4.3" fill="url(#gs)"/>
<ellipse cx="241.6" cy="640.7" rx="4.7" ry="3.5" fill="url(#gs)"/>
<ellipse cx="249.2" cy="632.1" rx="4.7" ry="3.5" fill="url(#gs)"/>
<ellipse cx="256.8" cy="623.5" rx="4.7" ry="3.5" fill="url(#gs)"/>
<ellipse cx="264.4" cy="614.9" rx="4.7" ry="3.5" fill="url(#gs)"/>
<ellipse cx="272.0" cy="606.3" rx="4.7" ry="3.5" fill="url(#gs)"/>
<ellipse cx="279.6" cy="597.7" rx="4.7" ry="3.5" fill="url(#gs)"/>
<ellipse cx="287.2" cy="589.1" rx="4.7" ry="3.5" fill="url(#gs)"/>
<ellipse cx="294.8" cy="580.5" rx="4.7" ry="3.5" fill="url(#gs)"/>
<ellipse cx="246.4" cy="650.4" rx="4.6" ry="4.3" fill="url(#gs)"/>
<ellipse cx="254.0" cy="641.8" rx="4.7" ry="3.5" fill="url(#gs)"/>
<ellipse cx="261.6" cy="633.1" rx="4.7" ry="3.5" fill="url(#gs)"/>
<ellipse cx="269.2" cy="624.5" rx="4.7" ry="3.5" fill="url(#gs)"/>
<ellipse cx="276.8" cy="616.0" rx="4.7" ry="3.5" fill="url(#gs)"/>
<ellipse cx="258.8" cy="651.4" rx="4.6" ry="4.3" fill="url(#gs)"/>
<ellipse cx="266.4" cy="642.8" rx="4.7" ry="3.5" fill="url(#gs)"/>
<ellipse cx="274.0" cy="634.2" rx="4.7" ry="3.5" fill="url(#gs)"/>
<ellipse cx="281.6" cy="625.6" rx="4.7" ry="3.5" fill="url(#gs)"/>
<ellipse cx="271.2" cy="652.5" rx="4.6" ry="4.3" fill="url(#gs)"/>
<ellipse cx="278.8" cy="643.9" rx="4.7" ry="3.5" fill="url(#gs)"/>
<ellipse cx="283.6" cy="653.5" rx="4.6" ry="4.3" fill="url(#gs)"/>
<ellipse cx="267.4" cy="583.9" rx="2.9" ry="2.3" fill="url(#gs)"/>
<ellipse cx="281.0" cy="564.5" rx="2.9" ry="2.3" fill="url(#gs)"/>
<ellipse cx="291.0" cy="555.1" rx="2.9" ry="2.3" fill="url(#gs)"/>
<ellipse cx="306.1" cy="542.4" rx="2.9" ry="2.3" fill="url(#gs)"/>
<ellipse cx="314.4" cy="537.1" rx="2.9" ry="2.3" fill="url(#gs)"/>
<ellipse cx="326.9" cy="531.3" rx="2.9" ry="2.3" fill="url(#gs)"/>
<ellipse cx="332.9" cy="528.2" rx="2.9" ry="2.3" fill="url(#gs)"/>
<ellipse cx="339.0" cy="525.1" rx="2.9" ry="2.3" fill="url(#gs)"/>
<ellipse cx="290.0" cy="562.9" rx="3.5" ry="2.7" fill="url(#gs)"/>
<ellipse cx="307.4" cy="549.1" rx="3.5" ry="2.7" fill="url(#gs)"/>
<ellipse cx="332.7" cy="534.9" rx="3.5" ry="2.7" fill="url(#gs)"/>
<ellipse cx="340.0" cy="531.1" rx="3.5" ry="2.7" fill="url(#gs)"/>
<ellipse cx="677.1" cy="543.5" rx="2.8" ry="2.4" fill="url(#gs)"/>
<ellipse cx="699.9" cy="548.0" rx="2.3" ry="2.0" fill="url(#gs)"/>
<ellipse cx="692.3" cy="530.7" rx="2.8" ry="2.4" fill="url(#gs)"/>
<ellipse cx="713.2" cy="541.5" rx="2.3" ry="2.0" fill="url(#gs)"/>
<ellipse cx="764.6" cy="515.2" rx="2.3" ry="2.0" fill="url(#gs)"/>
<ellipse cx="696.1" cy="536.3" rx="2.8" ry="2.4" fill="url(#gs)"/>
<ellipse cx="655.1" cy="566.5" rx="2.3" ry="2.0" fill="url(#gs)"/>
<ellipse cx="686.8" cy="554.4" rx="2.3" ry="2.0" fill="url(#gs)"/>
<ellipse cx="651.0" cy="558.5" rx="2.8" ry="2.4" fill="url(#gs)"/>
<ellipse cx="751.8" cy="523.2" rx="2.3" ry="2.0" fill="url(#gs)"/>
<ellipse cx="771.6" cy="507.3" rx="2.3" ry="2.0" fill="url(#gs)"/>
<ellipse cx="686.5" cy="546.8" rx="2.3" ry="2.0" fill="url(#gs)"/>
<ellipse cx="758.6" cy="519.0" rx="2.3" ry="2.0" fill="url(#gs)"/>
</svg>
</body></html>
